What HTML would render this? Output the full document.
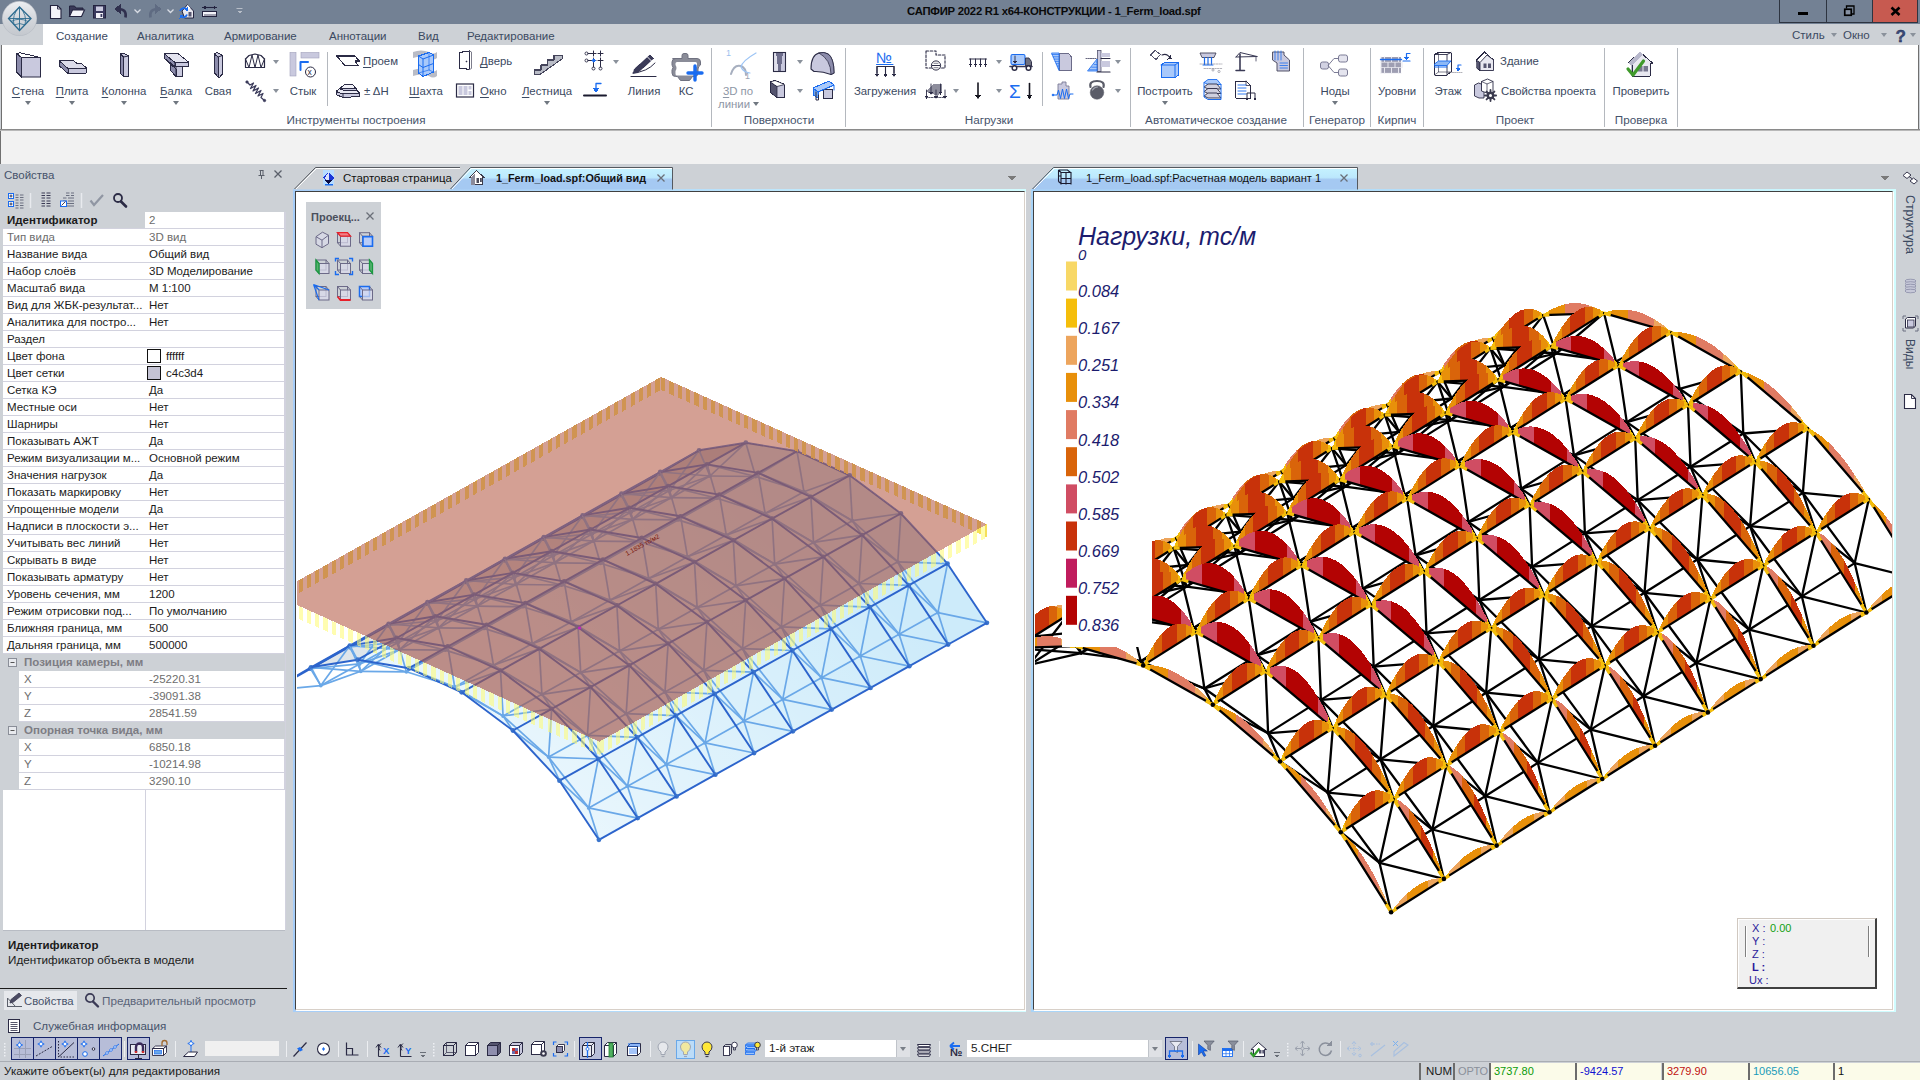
<!DOCTYPE html>
<html lang="ru"><head><meta charset="utf-8"><title>САПФИР 2022 R1 x64-КОНСТРУКЦИИ - 1_Ferm_load.spf</title>
<style>
*{box-sizing:border-box;margin:0;padding:0}
html,body{width:1920px;height:1080px;overflow:hidden}
body{background:#cdd1d6;font-family:"Liberation Sans","DejaVu Sans",sans-serif;font-size:11.7px;color:#1b1b1b;position:relative}
.abs{position:absolute}
.t{position:absolute;white-space:nowrap;line-height:14px}
.c{transform:translateX(-50%)}
#title{left:0;top:0;width:1920px;height:24px;background:#738194}
#title .cap{left:907px;top:4px;font-weight:bold;font-size:11.3px;color:#0a0a0a;letter-spacing:-0.24px}
.wb{position:absolute;top:0;height:23px;border:1px solid #2d3440;border-top:none}
#tabs{left:0;top:24px;width:1920px;height:21px;background:#cdd1d6}
.tab{position:absolute;top:4px;font-size:11.5px;color:#3b4961;white-space:nowrap;line-height:16px}
#tabact{left:43px;top:24px;width:77px;height:22px;background:#fff}
#ribbon{left:1px;top:45px;width:1918px;height:84px;background:#fff;border-left:1.5px solid #707070;border-right:1.5px solid #707070}
#ribline{left:0;top:129px;width:1920px;height:2px;background:#8a8a8a;border-bottom:1px solid #b8b8b8}
#strip{left:0;top:131px;width:1920px;height:33px;background:#f2f2f2;border-left:1px solid #707070}
.gl{position:absolute;top:113px;font-size:11.7px;color:#46536b;white-space:nowrap;transform:translateX(-50%);line-height:14px}
.gs{position:absolute;top:48px;width:1px;height:79px;background:#b4b8be}
.gs2{position:absolute;top:52px;width:1px;height:54px;background:#b4b8be}
.rl{position:absolute;font-size:11.4px;color:#3b4961;white-space:nowrap;line-height:14px}
.rl u{text-decoration-thickness:1px;text-underline-offset:1.5px}
.dis{color:#8e97a6}
.arr{position:absolute;width:0;height:0;border-left:3.5px solid transparent;border-right:3.5px solid transparent;border-top:4px solid #707780}
svg{position:absolute;overflow:visible}
</style>
</head><body>
<div id="title" class="abs"><div class="t cap">САПФИР 2022 R1 x64-КОНСТРУКЦИИ - 1_Ferm_load.spf</div>
<div class="wb" style="left:1779px;width:48px"></div><div class="wb" style="left:1826px;width:47px"></div><div class="wb" style="left:1872px;width:46px;background:#c75a50"></div>
</div>
<div id="tabs" class="abs"></div><div id="tabact" class="abs"></div>
<div class="tab" style="left:56px;top:28px">Создание</div>
<div class="tab" style="left:137px;top:28px">Аналитика</div>
<div class="tab" style="left:224px;top:28px">Армирование</div>
<div class="tab" style="left:329px;top:28px">Аннотации</div>
<div class="tab" style="left:418px;top:28px">Вид</div>
<div class="tab" style="left:467px;top:28px">Редактирование</div>
<div class="tab" style="left:1792px;top:27px">Стиль</div><div class="arr" style="left:1831px;top:33px;border-top-color:#8a919b"></div>
<div class="tab" style="left:1843px;top:27px">Окно</div><div class="arr" style="left:1881px;top:33px;border-top-color:#8a919b"></div>
<div class="arr" style="left:1910px;top:33px;border-top-color:#8a919b"></div>
<div id="ribbon" class="abs"></div><div id="ribline" class="abs"></div><div id="strip" class="abs"></div>
<div class="gl" style="left:356px">Инструменты построения</div>
<div class="gl" style="left:779px">Поверхности</div>
<div class="gl" style="left:989px">Нагрузки</div>
<div class="gl" style="left:1216px">Автоматическое создание</div>
<div class="gl" style="left:1337px">Генератор</div>
<div class="gl" style="left:1397px">Кирпич</div>
<div class="gl" style="left:1515px">Проект</div>
<div class="gl" style="left:1641px">Проверка</div>
<div class="gs" style="left:711px"></div>
<div class="gs" style="left:845px"></div>
<div class="gs" style="left:1130px"></div>
<div class="gs" style="left:1303px"></div>
<div class="gs" style="left:1370px"></div>
<div class="gs" style="left:1423px"></div>
<div class="gs" style="left:1604px"></div>
<div class="gs" style="left:1677px"></div>
<div class="gs2" style="left:327px"></div>
<div class="gs2" style="left:1042px"></div>
<div class="rl c" style="left:28px;top:84px"><u>С</u>тена</div>
<div class="arr" style="left:24.5px;top:101px"></div>
<div class="rl c" style="left:72px;top:84px"><u>П</u>лита</div>
<div class="arr" style="left:68.5px;top:101px"></div>
<div class="rl c" style="left:124px;top:84px"><u>К</u>олонна</div>
<div class="arr" style="left:120.5px;top:101px"></div>
<div class="rl c" style="left:176px;top:84px"><u>Б</u>алка</div>
<div class="arr" style="left:172.5px;top:101px"></div>
<div class="rl c" style="left:218px;top:84px">Свая</div>
<div class="rl c" style="left:303px;top:84px">Стык</div>
<div class="rl c" style="left:426px;top:84px"><u>Ш</u>ахта</div>
<div class="rl c" style="left:547px;top:84px"><u>Л</u>естница</div>
<div class="arr" style="left:543.5px;top:101px"></div>
<div class="rl c" style="left:644px;top:84px">Линия</div>
<div class="rl c" style="left:686px;top:84px">КС</div>
<div class="rl c" style="left:885px;top:84px">Загружения</div>
<div class="rl c" style="left:1165px;top:84px">Построить</div>
<div class="arr" style="left:1161.5px;top:101px"></div>
<div class="rl c" style="left:1335px;top:84px">Ноды</div>
<div class="arr" style="left:1331.5px;top:101px"></div>
<div class="rl c" style="left:1397px;top:84px">Уровни</div>
<div class="rl c" style="left:1448px;top:84px">Этаж</div>
<div class="rl c" style="left:1641px;top:84px">Проверить</div>
<div class="rl c dis" style="left:738px;top:84px"><u>3</u>D по</div><div class="rl dis" style="left:718px;top:97px">линии</div><div class="arr" style="left:753px;top:102px"></div>
<div class="rl" style="left:363px;top:54px"><u>П</u>роем</div>
<div class="rl" style="left:364px;top:84px">± ΔH</div>
<div class="rl" style="left:480px;top:54px"><u>Д</u>верь</div>
<div class="rl" style="left:480px;top:84px"><u>О</u>кно</div>
<div class="rl" style="left:1500px;top:54px">Здание</div>
<div class="rl" style="left:1501px;top:84px">Свойства проекта</div>
<div class="arr" style="left:272.5px;top:60px;border-top-color:#8a919b"></div>
<div class="arr" style="left:272.5px;top:89px;border-top-color:#8a919b"></div>
<div class="arr" style="left:612.5px;top:60px;border-top-color:#8a919b"></div>
<div class="arr" style="left:796.5px;top:60px;border-top-color:#8a919b"></div>
<div class="arr" style="left:796.5px;top:89px;border-top-color:#8a919b"></div>
<div class="arr" style="left:995.5px;top:60px;border-top-color:#8a919b"></div>
<div class="arr" style="left:952.5px;top:89px;border-top-color:#8a919b"></div>
<div class="arr" style="left:995.5px;top:89px;border-top-color:#8a919b"></div>
<div class="arr" style="left:1114.5px;top:60px;border-top-color:#8a919b"></div>
<div class="arr" style="left:1114.5px;top:89px;border-top-color:#8a919b"></div><svg class="abs" style="left:0;top:0" width="1920" height="46" viewBox="0 0 1920 46"><defs><linearGradient id="ab" x1="0" y1="0" x2="0" y2="1"><stop offset="0" stop-color="#eceef1"/><stop offset="0.5" stop-color="#d4d7dc"/><stop offset="1" stop-color="#c4c8ce"/></linearGradient></defs><circle cx="19.5" cy="18.5" r="17.5" fill="#b9bec6"/><circle cx="19.500" cy="18.500" r="16.800" fill="url(#ab)"/><path d="M19.500,7L31,18.500L19.500,30.500L8.500,18.500z" fill="none" stroke="#2c6b8f" stroke-width="1.300"/><path d="M19.500,7v23.500M8.500,18.500h22.500" stroke="#2c6b8f" stroke-width="0.900"/><path d="M19.500,7q-8,8 -5.500,18M19.500,7q8,8 5.500,18M11,21.500q8.500,-4.500 17,0M14,25q5.500,-3 11,0" fill="none" stroke="#2c6b8f" stroke-width="0.800"/><path d="M50.500,5.500h7l3.500,3.500v9.500h-10.500z" fill="#f4f4fa" stroke="#23233f" stroke-width="1.100"/><path d="M57.500,5.500v3.500h3.500" fill="none" stroke="#23233f" stroke-width="0.900"/><path d="M69.500,16.500v-10.500h5l1.500,2h7v2.500" fill="#3a3a58" stroke="#23233f" stroke-width="1"/><path d="M69.500,16.500l3,-6.500h12l-3,6.500z" fill="#f4f4fa" stroke="#23233f" stroke-width="1.100"/><rect x="93.500" y="5.500" width="12" height="12.500" fill="#3a3a5e" stroke="#23233f" stroke-width="1"/><rect x="96" y="6.500" width="7" height="4.500" fill="#c9c9de"/><rect x="96" y="13" width="7" height="5" fill="#f4f4fa"/><rect x="100.500" y="14" width="1.800" height="3" fill="#3a3a5e"/><path d="M125.500,17.500q1.500,-8.500 -7,-8.500" fill="none" stroke="#30304e" stroke-width="2.600"/><polygon points="114,9 120.500,4 120.500,14" fill="#30304e"/><path d="M134.500,9.500l3,3l3,-3" fill="none" stroke="#d8dce4" stroke-width="1.300"/><path d="M150.500,17.500q-1.500,-8.500 7,-8.500" fill="none" stroke="#5f6b82" stroke-width="2.600"/><polygon points="161.500,9 155,4 155,14" fill="#5f6b82"/><path d="M167.500,9.500l3,3l3,-3" fill="none" stroke="#d8dce4" stroke-width="1.300"/><path d="M182,11l5.500,-6.500l6,6.500v7h-9z" fill="#e8e8f0" stroke="#23233f" stroke-width="1"/><path d="M187.500,4.500l3,3.500l-3,2z" fill="#fff"/><rect x="188.500" y="12" width="3" height="4.500" fill="#55556f"/><path d="M180,11a3.800,3.800 0 0 1 6.500,-1.500M187,14.500a3.800,3.800 0 0 1 -6.500,1.500" fill="none" stroke="#1a6cf0" stroke-width="1.800"/><polygon points="187.500,7 187.500,11 184,10" fill="#1a6cf0"/><polygon points="179.500,18.500 179.500,14.500 183,15.500" fill="#1a6cf0"/><rect x="202.500" y="11.500" width="14" height="5" fill="#f4f4fa" stroke="#23233f" stroke-width="1"/><path d="M205,14v2.500" stroke="#23233f" stroke-width="0.800"/><path d="M207,14v2.500" stroke="#23233f" stroke-width="0.800"/><path d="M209,14v2.500" stroke="#23233f" stroke-width="0.800"/><path d="M211,14v2.500" stroke="#23233f" stroke-width="0.800"/><path d="M213,14v2.500" stroke="#23233f" stroke-width="0.800"/><path d="M215,14v2.500" stroke="#23233f" stroke-width="0.800"/><path d="M203,7.500h13" stroke="#23233f" stroke-width="1.100"/><polygon points="202,7.500 205.500,5.500 205.500,9.500" fill="#23233f"/><polygon points="217,7.500 213.500,5.500 213.500,9.500" fill="#23233f"/><path d="M236.500,8.500h6" stroke="#b8bec8" stroke-width="1"/><polygon points="236.500,10.500 242.500,10.500 239.500,13.500" fill="#b8bec8"/><rect x="1798" y="12" width="10" height="3" fill="#000"/><path d="M1846.500,8.500v-2.500h7.500v8h-2" fill="none" stroke="#000" stroke-width="1.300"/><rect x="1844.750" y="9.250" width="6.500" height="6" fill="#8792a4" stroke="#000" stroke-width="1.700"/><path d="M1891.500,7.500l8,7.500M1899.500,7.500l-8,7.500" stroke="#000" stroke-width="2.600"/><text x="1895.500" y="41.500" font-size="17" font-weight="bold" fill="#3a4a78" stroke="#1e2a50" stroke-width="0.400" font-family="Liberation Sans,sans-serif">?</text></svg>
<svg class="abs" style="left:0;top:0" width="1920" height="135" viewBox="0 0 1920 135"><polygon points="16.5,53.5 21.5,57.5 21.5,77 16.5,72" fill="#8c8cab" stroke="#2b2b45" stroke-width="1" stroke-linejoin="round" /><polygon points="16.5,53.5 20,52.8 40.5,57.5 21.5,57.5" fill="#ffffff" stroke="#2b2b45" stroke-width="1" stroke-linejoin="round" /><rect x="21.5" y="57.5" width="19" height="19.5" fill="#c9c9de" stroke="#2b2b45" stroke-width="1" /><polygon points="59.5,61 73,60 77,63.5 81,63 86.5,68 86.5,73 68,73.5 59.5,66" fill="#c9c9de" stroke="#2b2b45" stroke-width="1" stroke-linejoin="round" /><polygon points="59.5,61 73,60 77,63.5 81,63 86.5,68 68,68.5" fill="#dcdcea" stroke="#2b2b45" stroke-width="1" stroke-linejoin="round" /><polyline points="68,68.5 68,73.5" fill="none" stroke="#2b2b45" stroke-width="1" stroke-linejoin="round" stroke-linecap="round" /><polygon points="59.5,61 68,68.5 68,73.5 59.5,66" fill="#8c8cab" stroke="#2b2b45" stroke-width="1" stroke-linejoin="round" /><polygon points="120.5,54 123,53 128.5,56 128.5,76.5 123.5,76.5 120.5,73.5" fill="#c9c9de" stroke="#2b2b45" stroke-width="1" stroke-linejoin="round" /><polygon points="120.5,54 123.5,57 123.5,76.5 120.5,73.5" fill="#8c8cab" stroke="#2b2b45" stroke-width="1" stroke-linejoin="round" /><polyline points="123.5,57 128.5,56" fill="none" stroke="#2b2b45" stroke-width="1" stroke-linejoin="round" stroke-linecap="round" /><polygon points="164.5,54 178,53.5 188.5,62 188.5,66.5 182,66.5 182,76.5 176,76.5 170,70 170,64 164.5,58.5" fill="#c9c9de" stroke="#2b2b45" stroke-width="1" stroke-linejoin="round" /><polygon points="164.5,54 178,53.5 188.5,62 175,62.5" fill="#e4e4f0" stroke="#2b2b45" stroke-width="1" stroke-linejoin="round" /><polygon points="164.5,54 175,62.5 175,66.5 164.5,58.5" fill="#8c8cab" stroke="#2b2b45" stroke-width="1" stroke-linejoin="round" /><polygon points="170,64 176,68.5 176,76.5 170,70" fill="#8c8cab" stroke="#2b2b45" stroke-width="1" stroke-linejoin="round" /><polyline points="175,62.5 175,66.5 188.5,66.5" fill="none" stroke="#2b2b45" stroke-width="1" stroke-linejoin="round" stroke-linecap="round" /><polyline points="176,66.5 176,76.5" fill="none" stroke="#2b2b45" stroke-width="1" stroke-linejoin="round" stroke-linecap="round" /><polygon points="214.5,54 217,52.5 222.5,55.5 222.5,74 219,78 214.5,73" fill="#c9c9de" stroke="#2b2b45" stroke-width="1" stroke-linejoin="round" /><polygon points="214.5,54 218,57 218,75 219,78 214.5,73" fill="#8c8cab" stroke="#2b2b45" stroke-width="1" stroke-linejoin="round" /><polyline points="218,57 222.5,55.5" fill="none" stroke="#2b2b45" stroke-width="1" stroke-linejoin="round" stroke-linecap="round" /><polyline points="245.5,67.5 245.5,59 249,55.5 255,54 261,55.5 264.5,59 264.5,67.5 245.5,67.5" fill="none" stroke="#2b2b45" stroke-width="1.2" stroke-linejoin="round" stroke-linecap="round" /><polyline points="245.5,59 249,67.5 252,55 255,67.5 258,55 261,67.5 264.5,59" fill="none" stroke="#2b2b45" stroke-width="1" stroke-linejoin="round" stroke-linecap="round" /><polyline points="247,82 250,85 253.5,83 250.5,88.5 256,85.5 253,91 258.5,88 255.5,93.5 261,90.5 258,96 263,93.5 261,97.5 264.5,100.5" fill="none" stroke="#3a3a5a" stroke-width="1.25" stroke-linejoin="round" stroke-linecap="round" /><circle cx="247" cy="82" r="1.3" fill="#3a3a5a" stroke="#3a3a5a" stroke-width="0.5"/><circle cx="264.5" cy="100.5" r="1.3" fill="#3a3a5a" stroke="#3a3a5a" stroke-width="0.5"/><rect x="290" y="52.5" width="6" height="23.5" fill="#c9c9de" stroke="#a0a0bb" stroke-width="0.6" /><rect x="301" y="52.5" width="18" height="5.5" fill="#c9c9de" stroke="#a0a0bb" stroke-width="0.6" /><polyline points="300.5,70 300.5,62 308,62" fill="none" stroke="#1a6cf0" stroke-width="2" stroke-linejoin="round" stroke-linecap="round" stroke-linecap="butt"/><circle cx="310.5" cy="72" r="5" fill="#ffffff" stroke="#2b2b45" stroke-width="1"/><text x="307.6" y="75" font-size="8.5" fill="#2b2b45" font-family="Liberation Sans,sans-serif" >x</text><polygon points="336.5,56 355,56 359.5,61 355,61 358,65.5 345,65.5" fill="#ffffff" stroke="#2b2b45" stroke-width="1.2" stroke-linejoin="round" /><polygon points="336,91.5 342,87 353.5,87 359.5,93 359.5,96.5 343,97.5 336,94.5" fill="#c9c9de" stroke="#2b2b45" stroke-width="1" stroke-linejoin="round" /><polygon points="336,91.5 342,87 353.5,87 359.5,93 343,94" fill="#e8e8f2" stroke="#2b2b45" stroke-width="1" stroke-linejoin="round" /><polyline points="343,94 343,97.5" fill="none" stroke="#2b2b45" stroke-width="1" stroke-linejoin="round" stroke-linecap="round" /><polygon points="340.5,88 345,84 352,84 356,88.5 356,90 345.5,90.5 340.5,89.5" fill="#c9c9de" stroke="#2b2b45" stroke-width="1" stroke-linejoin="round" /><polygon points="340.5,88 345,84 352,84 356,88.5 345.5,89" fill="#f2f2f8" stroke="#2b2b45" stroke-width="1" stroke-linejoin="round" /><path d="M413,52 q8,-3 16,0 q4,3 8,0 v6 q-4,3 -8,0 q-8,-3 -16,0z" fill="#b9bcc6" stroke="none" stroke-width="0" stroke-linejoin="round" stroke-linecap="round" /><path d="M413,70 q8,-3 16,0 q4,3 8,0 v6 q-4,3 -8,0 q-8,-3 -16,0z" fill="#b9bcc6" stroke="none" stroke-width="0" stroke-linejoin="round" stroke-linecap="round" /><polygon points="418.5,56 429,52.5 433.5,55 433.5,72 423,76.5 418.5,73" fill="#a9c9fa" stroke="#1a6cf0" stroke-width="1" stroke-linejoin="round" /><polyline points="418.5,56 423,59 433.5,55" fill="none" stroke="#1a6cf0" stroke-width="1" stroke-linejoin="round" stroke-linecap="round" /><polyline points="423,59 423,76.5" fill="none" stroke="#1a6cf0" stroke-width="1" stroke-linejoin="round" stroke-linecap="round" /><polyline points="418.5,64.5 423,67.5 433.5,63.5" fill="none" stroke="#1a6cf0" stroke-width="1" stroke-linejoin="round" stroke-linecap="round" /><polyline points="429,52.5 429,70 433.5,72" fill="none" stroke="#1a6cf0" stroke-width="0.7" stroke-linejoin="round" stroke-linecap="round" /><polyline points="429,70 418.5,73" fill="none" stroke="#1a6cf0" stroke-width="0.7" stroke-linejoin="round" stroke-linecap="round" /><polygon points="459.5,52.5 469.5,51 469.5,69.5 459.5,68" fill="#ffffff" stroke="#2b2b45" stroke-width="1.1" stroke-linejoin="round" /><polyline points="469.5,51 471.5,52 471.5,68.5 469.5,69.5" fill="none" stroke="#7d7d8c" stroke-width="1" stroke-linejoin="round" stroke-linecap="round" /><circle cx="466.5" cy="61.5" r="0.6" fill="#2b2b45" stroke="#2b2b45" stroke-width="0.5"/><rect x="456.5" y="84" width="17" height="13" fill="#ffffff" stroke="#2b2b45" stroke-width="1.2" /><rect x="458.5" y="86" width="4" height="9" fill="#c9c9de" stroke="none" stroke-width="0" /><rect x="463.5" y="86" width="4" height="9" fill="#c9c9de" stroke="none" stroke-width="0" /><rect x="468.5" y="86" width="3" height="3.5" fill="#c9c9de" stroke="none" stroke-width="0" /><rect x="468.5" y="91" width="3" height="4" fill="#c9c9de" stroke="none" stroke-width="0" /><polygon points="534.5,74.5 534.5,70 541,70 541,65 547.5,65 547.5,60 554,60 554,55.5 562.5,55.5 562.5,58.5 540,74.5" fill="#b9bcc6" stroke="#44445a" stroke-width="1.1" stroke-linejoin="round" /><line x1="591.0" y1="53.5" x2="596.0" y2="53.5" stroke="#2b2b45" stroke-width="1" stroke-linecap="round" /><line x1="593.5" y1="51.0" x2="593.5" y2="56.0" stroke="#2b2b45" stroke-width="1" stroke-linecap="round" /><line x1="591.0" y1="60.5" x2="596.0" y2="60.5" stroke="#2b2b45" stroke-width="1" stroke-linecap="round" /><line x1="593.5" y1="58.0" x2="593.5" y2="63.0" stroke="#2b2b45" stroke-width="1" stroke-linecap="round" /><line x1="598.0" y1="53.5" x2="603.0" y2="53.5" stroke="#2b2b45" stroke-width="1" stroke-linecap="round" /><line x1="600.5" y1="51.0" x2="600.5" y2="56.0" stroke="#2b2b45" stroke-width="1" stroke-linecap="round" /><line x1="598.0" y1="60.5" x2="603.0" y2="60.5" stroke="#2b2b45" stroke-width="1" stroke-linecap="round" /><line x1="600.5" y1="58.0" x2="600.5" y2="63.0" stroke="#2b2b45" stroke-width="1" stroke-linecap="round" /><circle cx="586.5" cy="53.5" r="1.5" fill="#ffffff" stroke="#2b2b45" stroke-width="0.9"/><circle cx="586.5" cy="60.5" r="1.5" fill="#ffffff" stroke="#2b2b45" stroke-width="0.9"/><circle cx="593.5" cy="68.5" r="1.5" fill="#ffffff" stroke="#2b2b45" stroke-width="0.9"/><circle cx="600.5" cy="68.5" r="1.5" fill="#ffffff" stroke="#2b2b45" stroke-width="0.9"/><line x1="593.5" y1="63" x2="593.5" y2="67" stroke="#2b2b45" stroke-width="1" stroke-linecap="round" /><line x1="600.5" y1="63" x2="600.5" y2="67" stroke="#2b2b45" stroke-width="1" stroke-linecap="round" /><line x1="588" y1="53.5" x2="591" y2="53.5" stroke="#2b2b45" stroke-width="1" stroke-linecap="round" /><line x1="588" y1="60.5" x2="591" y2="60.5" stroke="#2b2b45" stroke-width="1" stroke-linecap="round" /><polygon points="593.5,58.5 595.5,60.5 593.5,62.5 591.5,60.5" fill="#1a6cf0" stroke="#1a6cf0" stroke-width="0.5" stroke-linejoin="round" /><line x1="584" y1="95.5" x2="606" y2="95.5" stroke="#1a1a2e" stroke-width="2" stroke-linecap="round" /><polyline points="601,83.5 596,83.5 596,91" fill="none" stroke="#1a6cf0" stroke-width="1.3" stroke-linejoin="round" stroke-linecap="round" /><polygon points="592.5,88 599.5,88 596,93" fill="#1a6cf0"/><line x1="631" y1="76.5" x2="656" y2="76.5" stroke="#2b2b45" stroke-width="1.2" stroke-linecap="round" /><path d="M633,73 q14,-1 22,-10" fill="none" stroke="#2b2b45" stroke-width="1" stroke-linejoin="round" stroke-linecap="round" /><polygon points="634.5,69 650,55 653.5,58.5 638,72.5 633,73.5" fill="#3a3a58" stroke="#3a3a58" stroke-width="0.8" stroke-linejoin="round" /><line x1="647.5" y1="57" x2="651.5" y2="61" stroke="#ffffff" stroke-width="0.9" stroke-linecap="round" /><path d="M673,58.5 h9 v-3 q0,-2 2,-2 h2 q2,0 2,2 v3 h9 q3.5,0 3.5,3.5 v3 q-2.5,1.5 -2.5,4 v4 q0,3.5 -3.5,3.5 h-2 l-3,4 h-9 l-3,-4 h-2 q-3.5,0 -3.5,-3.5 v-3 q2,-2.5 0,-5 v-3 q0,-3.5 3.5,-3.5z" fill="#8a8c98" stroke="#6f7180" stroke-width="1" stroke-linejoin="round" stroke-linecap="round" /><path d="M675.5,62 h20 q1.5,0 1.5,1.5 v3 q-2.5,2 -2.5,4.5 v3 q0,1.5 -1.5,1.5 h-16 q-1.500,0 -1.5,-1.5 v-3 q2,-3 0,-6 v-1.5 q0,-1.500 1.500,-1.5z" fill="#ffffff" stroke="none" stroke-width="0" stroke-linejoin="round" stroke-linecap="round" /><line x1="688" y1="73" x2="702" y2="73" stroke="#1a6cf0" stroke-width="3.4" stroke-linecap="round" stroke-linecap="butt"/><line x1="695" y1="66" x2="695" y2="80" stroke="#1a6cf0" stroke-width="3.4" stroke-linecap="round" stroke-linecap="butt"/><text x="726" y="56" font-size="9" fill="#9cc0ee" font-family="Liberation Sans,sans-serif" >1</text><text x="745" y="79" font-size="9" fill="#9aa4b5" font-family="Liberation Sans,sans-serif" >1</text><path d="M731,74 q3,-10 10,-8 q5,2 5,9" fill="none" stroke="#a7afbf" stroke-width="2" stroke-linejoin="round" stroke-linecap="round" /><path d="M756,53 q-14,8 -15,14 q2,5 9,6" fill="none" stroke="#9cc4f5" stroke-width="1.2" stroke-linejoin="round" stroke-linecap="round" /><polygon points="773.5,52.5 785.5,52.5 785.5,71.5 773.5,71.5" fill="#c9c9de" stroke="#2b2b45" stroke-width="1.1" stroke-linejoin="round" /><polygon points="776,52.5 783,52.5 780.5,71.5 778.5,71.5" fill="#6e6e8c" stroke="none" stroke-width="0" stroke-linejoin="round" /><polygon points="773.5,52.5 776,52.5 778.5,71.5 773.5,71.5" fill="#e0e0ec" stroke="none" stroke-width="0" stroke-linejoin="round" /><rect x="773.5" y="52.5" width="12" height="19" fill="none" stroke="#2b2b45" stroke-width="1.1" /><path d="M811,69 q0,-14 8,-16 q5,-1.500 9,1 q6,4 6,19 l-3,1.5 q-9,-3.500 -17,-3z" fill="#c9c9de" stroke="#2b2b45" stroke-width="1.1" stroke-linejoin="round" stroke-linecap="round" /><path d="M819,53 q5,-1.500 9,1 q6,4 6,19 l-3,1.5 q0,-15 -12,-21.5z" fill="#8c8cab" stroke="#2b2b45" stroke-width="0.8" stroke-linejoin="round" stroke-linecap="round" /><polygon points="770.5,82 775,80.5 784.5,84.5 784.5,97.5 777,97.5 770.5,92.5" fill="#c9c9de" stroke="#2b2b45" stroke-width="1.1" stroke-linejoin="round" /><polygon points="770.5,82 777,86.5 777,97.5 770.5,92.5" fill="#55556f" stroke="#2b2b45" stroke-width="0.8" stroke-linejoin="round" /><polygon points="770.5,82 775,80.5 784.5,84.5 777,86.5" fill="#ffffff" stroke="#2b2b45" stroke-width="0.8" stroke-linejoin="round" /><polygon points="813,88 829,81 834,85 818,92" fill="#a9c9fa" stroke="#1a6cf0" stroke-width="1" stroke-linejoin="round" /><polygon points="813,88 818,92 818,98 813,95" fill="#6fa5f0" stroke="#1a6cf0" stroke-width="1" stroke-linejoin="round" /><rect x="823.5" y="89.5" width="9" height="9" fill="#c9c9de" stroke="#2b2b45" stroke-width="1" /><polyline points="816,92 816,100 818.5,100 818.5,95" fill="none" stroke="#2b2b45" stroke-width="1" stroke-linejoin="round" stroke-linecap="round" /><polyline points="818,92 834,85 834,90" fill="none" stroke="#1a6cf0" stroke-width="1" stroke-linejoin="round" stroke-linecap="round" /><text x="876" y="62.5" font-size="15" fill="#1a6cf0" font-family="Liberation Sans,sans-serif" font-weight="normal">№</text><line x1="876.5" y1="64.5" x2="893" y2="64.5" stroke="#1a6cf0" stroke-width="1" stroke-linecap="round" /><polyline points="877,73 877,66.5 894,66.5 894,73" fill="none" stroke="#2b2b45" stroke-width="1.1" stroke-linejoin="round" stroke-linecap="round" /><line x1="877" y1="66.5" x2="877" y2="76" stroke="#2b2b45" stroke-width="1.1" stroke-linecap="round" /><polygon points="874.7,73.7 879.3,73.7 877,77" fill="#2b2b45"/><line x1="885.5" y1="66.5" x2="885.5" y2="76" stroke="#2b2b45" stroke-width="1.1" stroke-linecap="round" /><polygon points="883.2,73.7 887.8,73.7 885.5,77" fill="#2b2b45"/><line x1="894" y1="66.5" x2="894" y2="76" stroke="#2b2b45" stroke-width="1.1" stroke-linecap="round" /><polygon points="891.7,73.7 896.3,73.7 894,77" fill="#2b2b45"/><path d="M926,51 h10 v4 h9 v13 h-19z" fill="none" stroke="#2b2b45" stroke-width="1.1" stroke-linejoin="round" stroke-linecap="round" stroke-dasharray="2.5,1.6"/><circle cx="936" cy="65.5" r="4.6" fill="#ffffff" stroke="#2b2b45" stroke-width="1"/><line x1="932" y1="65.5" x2="940" y2="65.5" stroke="#2b2b45" stroke-width="1" stroke-linecap="round" /><line x1="934" y1="63.3" x2="938" y2="63.3" stroke="#2b2b45" stroke-width="0.6" stroke-linecap="round" /><line x1="934" y1="67.7" x2="938" y2="67.7" stroke="#2b2b45" stroke-width="0.6" stroke-linecap="round" /><line x1="969.5" y1="59" x2="986.5" y2="59" stroke="#2b2b45" stroke-width="1.2" stroke-linecap="round" /><line x1="970.5" y1="59" x2="970.5" y2="66" stroke="#2b2b45" stroke-width="1" stroke-linecap="round" /><polygon points="968.7,64.2 972.3,64.2 970.5,67" fill="#2b2b45"/><line x1="975.5" y1="59" x2="975.5" y2="66" stroke="#2b2b45" stroke-width="1" stroke-linecap="round" /><polygon points="973.7,64.2 977.3,64.2 975.5,67" fill="#2b2b45"/><line x1="980.5" y1="59" x2="980.5" y2="66" stroke="#2b2b45" stroke-width="1" stroke-linecap="round" /><polygon points="978.7,64.2 982.3,64.2 980.5,67" fill="#2b2b45"/><line x1="985.5" y1="59" x2="985.5" y2="66" stroke="#2b2b45" stroke-width="1" stroke-linecap="round" /><polygon points="983.7,64.2 987.3,64.2 985.5,67" fill="#2b2b45"/><rect x="1011" y="54.5" width="14" height="10" fill="#a9c9fa" stroke="#1a6cf0" stroke-width="1.1" rx="1.5"/><polygon points="1025.5,58 1029,58 1031.5,61.5 1031.5,66 1025.5,66" fill="#6e7080" stroke="#2b2b45" stroke-width="0.9" stroke-linejoin="round" /><line x1="1010" y1="66.5" x2="1032" y2="66.5" stroke="#3a3a55" stroke-width="1.6" stroke-linecap="round" /><circle cx="1014.5" cy="68" r="2.3" fill="#ffffff" stroke="#2b2b45" stroke-width="1.5"/><circle cx="1028.5" cy="68" r="2.3" fill="#ffffff" stroke="#2b2b45" stroke-width="1.5"/><line x1="1015" y1="56" x2="1015" y2="63" stroke="#2b2b45" stroke-width="0.9" stroke-linecap="round" /><polygon points="1013.4,61.4 1016.6,61.4 1015,64" fill="#2b2b45"/><polygon points="926,92 934,83.5 942,83.5 942,91 938,96" fill="#8d8d9c" stroke="none" stroke-width="0" stroke-linejoin="round" /><line x1="926.5" y1="90" x2="926.5" y2="98" stroke="#2b2b45" stroke-width="0.9" stroke-linecap="round" /><polygon points="924.8,96.3 928.2,96.3 926.5,99" fill="#2b2b45"/><line x1="931" y1="84" x2="931" y2="94" stroke="#2b2b45" stroke-width="0.9" stroke-linecap="round" /><polygon points="929.3,92.3 932.7,92.3 931,95" fill="#2b2b45"/><line x1="936" y1="90" x2="936" y2="98" stroke="#2b2b45" stroke-width="0.9" stroke-linecap="round" /><polygon points="934.3,96.3 937.7,96.3 936,99" fill="#2b2b45"/><line x1="940.5" y1="84" x2="940.5" y2="94" stroke="#2b2b45" stroke-width="0.9" stroke-linecap="round" /><polygon points="938.8,92.3 942.2,92.3 940.5,95" fill="#2b2b45"/><line x1="945" y1="90" x2="945" y2="98" stroke="#2b2b45" stroke-width="0.9" stroke-linecap="round" /><polygon points="943.3,96.3 946.7,96.3 945,99" fill="#2b2b45"/><line x1="926" y1="97.5" x2="945" y2="97.5" stroke="#2b2b45" stroke-width="0.8" stroke-linecap="round" stroke-dasharray="1.5,1.2"/><line x1="978" y1="83" x2="978" y2="98" stroke="#15151f" stroke-width="1.6" stroke-linecap="round" /><polygon points="975.4,95.4 980.6,95.4 978,99" fill="#15151f"/><text x="1009" y="98" font-size="19" fill="#1a6cf0" font-family="Liberation Sans,sans-serif" font-family="Liberation Serif,serif">Σ</text><line x1="1029.5" y1="83.5" x2="1029.5" y2="98" stroke="#15151f" stroke-width="1.6" stroke-linecap="round" /><polygon points="1026.9,95.4 1032.1,95.4 1029.5,99" fill="#15151f"/><polygon points="1059,53 1068,53 1071.5,57 1071.5,70.5 1059,70.5" fill="#c9c9de" stroke="#6b6b88" stroke-width="1" stroke-linejoin="round" /><polygon points="1051.5,53 1059,53 1059,70.5" fill="#a9c9fa" stroke="#1a6cf0" stroke-width="0.8" stroke-linejoin="round" /><line x1="1052.0" y1="54.5" x2="1059" y2="54.5" stroke="#1a6cf0" stroke-width="0.7" stroke-linecap="round" /><line x1="1053.05" y1="56.8" x2="1059" y2="56.8" stroke="#1a6cf0" stroke-width="0.7" stroke-linecap="round" /><line x1="1054.1" y1="59.1" x2="1059" y2="59.1" stroke="#1a6cf0" stroke-width="0.7" stroke-linecap="round" /><line x1="1055.15" y1="61.4" x2="1059" y2="61.4" stroke="#1a6cf0" stroke-width="0.7" stroke-linecap="round" /><line x1="1056.2" y1="63.7" x2="1059" y2="63.7" stroke="#1a6cf0" stroke-width="0.7" stroke-linecap="round" /><line x1="1057.25" y1="66.0" x2="1059" y2="66.0" stroke="#1a6cf0" stroke-width="0.7" stroke-linecap="round" /><line x1="1058.3" y1="68.3" x2="1059" y2="68.3" stroke="#1a6cf0" stroke-width="0.7" stroke-linecap="round" /><rect x="1097.5" y="50.5" width="3.5" height="21" fill="#c9c9de" stroke="#55556f" stroke-width="0.8" /><rect x="1101" y="53" width="9" height="4" fill="#c9c9de" stroke="none" stroke-width="0" /><rect x="1101" y="61" width="9" height="6" fill="#c9c9de" stroke="none" stroke-width="0" /><line x1="1097" y1="72" x2="1110" y2="72" stroke="#2b2b45" stroke-width="1.2" stroke-linecap="round" /><line x1="1101" y1="58.5" x2="1110" y2="58.5" stroke="#2b2b45" stroke-width="1" stroke-linecap="round" /><polygon points="1097,59 1097,71 1087.5,71" fill="#a9c9fa" stroke="#1a6cf0" stroke-width="0.8" stroke-linejoin="round" /><line x1="1096.5" y1="62.0" x2="1097" y2="62.0" stroke="#1a6cf0" stroke-width="0.7" stroke-linecap="round" /><line x1="1094.1" y1="64.6" x2="1097" y2="64.6" stroke="#1a6cf0" stroke-width="0.7" stroke-linecap="round" /><line x1="1091.7" y1="67.2" x2="1097" y2="67.2" stroke="#1a6cf0" stroke-width="0.7" stroke-linecap="round" /><line x1="1089.3" y1="69.8" x2="1097" y2="69.8" stroke="#1a6cf0" stroke-width="0.7" stroke-linecap="round" /><line x1="1086" y1="58.5" x2="1097" y2="58.5" stroke="#55556f" stroke-width="0.9" stroke-linecap="round" stroke-dasharray="1.2,1"/><polygon points="1058,84 1062,84 1062,82 1066,82 1066,86 1069,86 1069,99 1058,99" fill="#c9c9de" stroke="#7b7b95" stroke-width="0.9" stroke-linejoin="round" /><polyline points="1053,95 1057,95 1058.5,90 1060.5,98.5 1062.5,89 1064.5,98.5 1066.5,89 1068.5,98.5 1070,94 1073,94" fill="none" stroke="#1a6cf0" stroke-width="1" stroke-linejoin="round" stroke-linecap="round" /><circle cx="1053" cy="95" r="1" fill="#1a6cf0" stroke="#1a6cf0" stroke-width="0.5"/><path d="M1090.5,87 q-1.500,-6 6.5,-6 q8,0 6.5,6" fill="none" stroke="#5a5c68" stroke-width="2.2" stroke-linejoin="round" stroke-linecap="round" /><circle cx="1097" cy="92.5" r="6.8" fill="#5a5c68" stroke="#5a5c68" stroke-width="0.5"/><path d="M1092.5,90 q2,-3 5,-3" fill="none" stroke="#9fa2ad" stroke-width="1.2" stroke-linejoin="round" stroke-linecap="round" /><polygon points="1150.5,55 1155,50.5 1160.5,54.5 1156,59.5" fill="#ffffff" stroke="#55556f" stroke-width="1" stroke-linejoin="round" /><path d="M1162,55 q5,-2 8,3" fill="none" stroke="#2b2b45" stroke-width="1.1" stroke-linejoin="round" stroke-linecap="round" /><polygon points="1167.500,59.5 1172,59 1170.5,55" fill="#2b2b45"/><polygon points="1161,65 1164.5,62.5 1178.5,62.5 1178.5,75 1175,77.5 1161,77.5" fill="#a9c9fa" stroke="#1a6cf0" stroke-width="1" stroke-linejoin="round" /><polyline points="1161,65 1175,65 1178.5,62.5" fill="none" stroke="#1a6cf0" stroke-width="1" stroke-linejoin="round" stroke-linecap="round" /><polyline points="1175,65 1175,77.5" fill="none" stroke="#1a6cf0" stroke-width="1" stroke-linejoin="round" stroke-linecap="round" /><polygon points="1200,53 1216,53 1214,57.5 1202,57.5" fill="#c9c9de" stroke="#44445a" stroke-width="0.9" stroke-linejoin="round" /><line x1="1204.5" y1="57.5" x2="1204.5" y2="64.5" stroke="#1a6cf0" stroke-width="1.2" stroke-linecap="round" /><line x1="1208" y1="57.5" x2="1208" y2="64.5" stroke="#1a6cf0" stroke-width="1.2" stroke-linecap="round" /><line x1="1211.5" y1="57.5" x2="1211.5" y2="64.5" stroke="#1a6cf0" stroke-width="1.2" stroke-linecap="round" /><line x1="1203" y1="65" x2="1213" y2="65" stroke="#1a6cf0" stroke-width="1" stroke-linecap="round" /><line x1="1200" y1="64" x2="1222" y2="64" stroke="#7d7d8c" stroke-width="0.6" stroke-linecap="round" stroke-dasharray="1.5,1.2"/><line x1="1204" y1="68.5" x2="1222" y2="68.5" stroke="#7d7d8c" stroke-width="0.6" stroke-linecap="round" stroke-dasharray="1.5,1.2"/><circle cx="1213" cy="70" r="1.1" fill="#ffffff" stroke="#7d7d8c" stroke-width="0.6"/><circle cx="1219" cy="71.5" r="1.1" fill="#ffffff" stroke="#7d7d8c" stroke-width="0.6"/><line x1="1240" y1="54" x2="1240" y2="70" stroke="#3a3a55" stroke-width="1.6" stroke-linecap="round" /><line x1="1236" y1="70.5" x2="1244.5" y2="70.5" stroke="#3a3a55" stroke-width="1.5" stroke-linecap="round" /><polyline points="1236,57 1240,52.5 1257,56.5" fill="none" stroke="#3a3a55" stroke-width="1" stroke-linejoin="round" stroke-linecap="round" /><line x1="1236" y1="57" x2="1257" y2="56.5" stroke="#3a3a55" stroke-width="1.1" stroke-linecap="round" /><line x1="1256" y1="56.5" x2="1256" y2="61" stroke="#3a3a55" stroke-width="0.8" stroke-linecap="round" /><polygon points="1272.5,52 1284,52 1284,55 1289.5,60 1289.5,71 1277,71 1277,63 1272.5,60" fill="#c9c9de" stroke="#44445a" stroke-width="0.9" stroke-linejoin="round" /><line x1="1275" y1="51" x2="1275" y2="60" stroke="#1a6cf0" stroke-width="0.8" stroke-linecap="round" /><line x1="1278" y1="51" x2="1278" y2="60" stroke="#1a6cf0" stroke-width="0.8" stroke-linecap="round" /><line x1="1281" y1="51" x2="1281" y2="60" stroke="#1a6cf0" stroke-width="0.8" stroke-linecap="round" /><line x1="1280" y1="63" x2="1287.5" y2="63" stroke="#1a6cf0" stroke-width="0.8" stroke-linecap="round" /><line x1="1280" y1="65.5" x2="1287.5" y2="65.5" stroke="#1a6cf0" stroke-width="0.8" stroke-linecap="round" /><line x1="1280" y1="68" x2="1287.5" y2="68" stroke="#1a6cf0" stroke-width="0.8" stroke-linecap="round" /><polygon points="1204,82.5 1208,79.5 1217,79.5 1221,84.5 1208,84.5" fill="#a9c9fa" stroke="#1a6cf0" stroke-width="0.9" stroke-linejoin="round" /><polygon points="1204,87.0 1208,84.0 1217,84.0 1221,89.0 1208,89.0" fill="#d0d0de" stroke="#2b2b45" stroke-width="0.9" stroke-linejoin="round" /><polygon points="1204,91.5 1208,88.5 1217,88.5 1221,93.5 1208,93.5" fill="#d0d0de" stroke="#2b2b45" stroke-width="0.9" stroke-linejoin="round" /><polygon points="1204,96.0 1208,93.0 1217,93.0 1221,98.0 1208,98.0" fill="#d0d0de" stroke="#2b2b45" stroke-width="0.9" stroke-linejoin="round" /><polyline points="1204,82.5 1204,97 1208,99.5 1221,99.5 1221,84.5" fill="none" stroke="#1a6cf0" stroke-width="1" stroke-linejoin="round" stroke-linecap="round" /><polygon points="1235.5,81 1246,81 1250.5,85.5 1250.5,98 1235.5,98" fill="#ffffff" stroke="#2b2b45" stroke-width="1" stroke-linejoin="round" /><polyline points="1246,81 1246,85.5 1250.5,85.5" fill="none" stroke="#2b2b45" stroke-width="0.8" stroke-linejoin="round" stroke-linecap="round" /><line x1="1238" y1="85" x2="1246" y2="85" stroke="#1a6cf0" stroke-width="0.9" stroke-linecap="round" /><line x1="1238" y1="88" x2="1246" y2="88" stroke="#1a6cf0" stroke-width="0.9" stroke-linecap="round" /><line x1="1238" y1="91" x2="1246" y2="91" stroke="#1a6cf0" stroke-width="0.9" stroke-linecap="round" /><line x1="1238" y1="94" x2="1246" y2="94" stroke="#1a6cf0" stroke-width="0.9" stroke-linecap="round" /><polyline points="1247,99 1247,93 1255,93 1255,99" fill="none" stroke="#2b2b45" stroke-width="1" stroke-linejoin="round" stroke-linecap="round" /><polygon points="1245,97.5 1249,97.5 1247,101" fill="#2b2b45"/><polygon points="1253,97.5 1257,97.5 1255,101" fill="#2b2b45"/><rect x="1320.5" y="62" width="8" height="7" fill="#d2d2e2" stroke="#7b7b95" stroke-width="1" rx="2"/><rect x="1338.5" y="55" width="9" height="7" fill="#e4e4ee" stroke="#7b7b95" stroke-width="1" rx="2"/><rect x="1338.5" y="69" width="9" height="7" fill="#e4e4ee" stroke="#7b7b95" stroke-width="1" rx="2"/><polyline points="1338.5,58.5 1334,58.5 1328.5,65" fill="none" stroke="#7b7b95" stroke-width="1" stroke-linejoin="round" stroke-linecap="round" /><polyline points="1338.5,72.5 1334,72.5 1328.5,66" fill="none" stroke="#7b7b95" stroke-width="1" stroke-linejoin="round" stroke-linecap="round" /><rect x="1381" y="57" width="20" height="5" fill="#9e9eb2" stroke="none" stroke-width="0" /><line x1="1381" y1="57" x2="1381" y2="62" stroke="#e8e8f0" stroke-width="1" stroke-linecap="round" /><line x1="1384.5" y1="57" x2="1384.5" y2="62" stroke="#e8e8f0" stroke-width="1" stroke-linecap="round" /><line x1="1391.5" y1="57" x2="1391.5" y2="62" stroke="#e8e8f0" stroke-width="1" stroke-linecap="round" /><line x1="1398.5" y1="57" x2="1398.5" y2="62" stroke="#e8e8f0" stroke-width="1" stroke-linecap="round" /><line x1="1381" y1="62.25" x2="1401" y2="62.25" stroke="#e8e8f0" stroke-width="0.6" stroke-linecap="round" /><rect x="1381" y="62.5" width="20" height="5" fill="#9e9eb2" stroke="none" stroke-width="0" /><line x1="1381.0" y1="62.5" x2="1381.0" y2="67.5" stroke="#e8e8f0" stroke-width="1" stroke-linecap="round" /><line x1="1388.0" y1="62.5" x2="1388.0" y2="67.5" stroke="#e8e8f0" stroke-width="1" stroke-linecap="round" /><line x1="1395.0" y1="62.5" x2="1395.0" y2="67.5" stroke="#e8e8f0" stroke-width="1" stroke-linecap="round" /><line x1="1402.0" y1="62.5" x2="1402.0" y2="67.5" stroke="#e8e8f0" stroke-width="1" stroke-linecap="round" /><line x1="1381" y1="67.75" x2="1401" y2="67.75" stroke="#e8e8f0" stroke-width="0.6" stroke-linecap="round" /><rect x="1381" y="68" width="20" height="5" fill="#9e9eb2" stroke="none" stroke-width="0" /><line x1="1381" y1="68" x2="1381" y2="73" stroke="#e8e8f0" stroke-width="1" stroke-linecap="round" /><line x1="1384.5" y1="68" x2="1384.5" y2="73" stroke="#e8e8f0" stroke-width="1" stroke-linecap="round" /><line x1="1391.5" y1="68" x2="1391.5" y2="73" stroke="#e8e8f0" stroke-width="1" stroke-linecap="round" /><line x1="1398.5" y1="68" x2="1398.5" y2="73" stroke="#e8e8f0" stroke-width="1" stroke-linecap="round" /><line x1="1381" y1="73.25" x2="1401" y2="73.25" stroke="#e8e8f0" stroke-width="0.6" stroke-linecap="round" /><line x1="1380.5" y1="59.5" x2="1401.5" y2="59.5" stroke="#1a6cf0" stroke-width="1.4" stroke-linecap="round" /><polyline points="1410,53.5 1406.5,53.5 1406.5,58" fill="none" stroke="#1a6cf0" stroke-width="1.2" stroke-linejoin="round" stroke-linecap="round" /><polygon points="1403.500,56.5 1409.5,56.5 1406.5,60" fill="#1a6cf0"/><line x1="1403" y1="61" x2="1410" y2="61" stroke="#1a6cf0" stroke-width="1.2" stroke-linecap="round" /><polygon points="1434.5,54.5 1438.5,52.5 1451,52.5 1451,72 1447,75 1434.5,75" fill="#ffffff" stroke="#2b2b45" stroke-width="1" stroke-linejoin="round" /><polyline points="1434.5,54.5 1447,54.5 1451,52.5" fill="none" stroke="#2b2b45" stroke-width="0.9" stroke-linejoin="round" stroke-linecap="round" /><polyline points="1447,54.5 1447,75" fill="none" stroke="#2b2b45" stroke-width="0.9" stroke-linejoin="round" stroke-linecap="round" /><polyline points="1438.5,52.5 1438.5,72 1434.5,75" fill="none" stroke="#2b2b45" stroke-width="0.6" stroke-linejoin="round" stroke-linecap="round" /><polyline points="1438.5,72 1451,72" fill="none" stroke="#2b2b45" stroke-width="0.6" stroke-linejoin="round" stroke-linecap="round" /><polygon points="1434.5,64 1438.5,61 1451,61 1447,65.5 1434.5,65.5" fill="#8db8f5" stroke="#1a6cf0" stroke-width="0.9" stroke-linejoin="round" /><line x1="1434.5" y1="67" x2="1447" y2="67" stroke="#1a6cf0" stroke-width="1" stroke-linecap="round" /><polyline points="1461,65 1458,65 1458,69" fill="none" stroke="#1a6cf0" stroke-width="1.2" stroke-linejoin="round" stroke-linecap="round" /><polygon points="1455,67.5 1461,67.5 1458,71.500" fill="#1a6cf0"/><line x1="1448" y1="72.5" x2="1462" y2="72.5" stroke="#7d7d8c" stroke-width="0.6" stroke-linecap="round" stroke-dasharray="1.2,1"/><polygon points="1476.5,60 1484.5,52 1493.5,60 1493.5,70 1479,70" fill="#ffffff" stroke="#2b2b45" stroke-width="1" stroke-linejoin="round" /><polygon points="1476.5,60 1480,62.5 1480,70.5 1476.5,68" fill="#55556f" stroke="#2b2b45" stroke-width="0.7" stroke-linejoin="round" /><polygon points="1480,62.5 1487,55 1493.5,60 1493.5,70.5 1480,70.5" fill="#e8e8f0" stroke="#2b2b45" stroke-width="0.9" stroke-linejoin="round" /><rect x="1483.5" y="63.5" width="3" height="4.5" fill="#55556f" stroke="none" stroke-width="0" /><rect x="1488" y="63.5" width="3" height="4.5" fill="#55556f" stroke="none" stroke-width="0" /><polygon points="1474.5,85 1478.5,83 1484,85 1484,98 1479,98 1474.5,96" fill="#c9c9de" stroke="#2b2b45" stroke-width="0.9" stroke-linejoin="round" /><polygon points="1481.5,81.5 1487.5,79 1493,81.5 1493,93 1487,93 1481.5,91" fill="#ffffff" stroke="#2b2b45" stroke-width="0.9" stroke-linejoin="round" /><polyline points="1481.5,81.5 1487,84 1493,81.5" fill="none" stroke="#2b2b45" stroke-width="0.7" stroke-linejoin="round" stroke-linecap="round" /><line x1="1487" y1="84" x2="1487" y2="93" stroke="#2b2b45" stroke-width="0.7" stroke-linecap="round" /><circle cx="1490.5" cy="95.5" r="3.6" fill="#3a3a4e" stroke="#3a3a4e" stroke-width="1"/><circle cx="1490.5" cy="95.5" r="1.5" fill="#ffffff" stroke="none" stroke-width="0"/><line x1="1494.5" y1="95.5" x2="1496.1" y2="95.5" stroke="#3a3a4e" stroke-width="1.8" stroke-linecap="round" stroke-linecap="butt"/><line x1="1493.33" y1="98.33" x2="1494.46" y2="99.46" stroke="#3a3a4e" stroke-width="1.8" stroke-linecap="round" stroke-linecap="butt"/><line x1="1490.5" y1="99.5" x2="1490.5" y2="101.1" stroke="#3a3a4e" stroke-width="1.8" stroke-linecap="round" stroke-linecap="butt"/><line x1="1487.67" y1="98.33" x2="1486.54" y2="99.46" stroke="#3a3a4e" stroke-width="1.8" stroke-linecap="round" stroke-linecap="butt"/><line x1="1486.5" y1="95.5" x2="1484.9" y2="95.5" stroke="#3a3a4e" stroke-width="1.8" stroke-linecap="round" stroke-linecap="butt"/><line x1="1487.67" y1="92.67" x2="1486.54" y2="91.54" stroke="#3a3a4e" stroke-width="1.8" stroke-linecap="round" stroke-linecap="butt"/><line x1="1490.5" y1="91.5" x2="1490.5" y2="89.9" stroke="#3a3a4e" stroke-width="1.8" stroke-linecap="round" stroke-linecap="butt"/><line x1="1493.33" y1="92.67" x2="1494.46" y2="91.54" stroke="#3a3a4e" stroke-width="1.8" stroke-linecap="round" stroke-linecap="butt"/><polygon points="1628.5,63 1640,52 1652.5,63 1650,63 1650,76 1632,76 1632,63" fill="#e8e8f0" stroke="#2b2b45" stroke-width="1" stroke-linejoin="round" /><polygon points="1628.5,63 1640,52 1643,54.5 1632,65 1632,76 1630.5,76 1630.5,64.5" fill="#b8b8cc" stroke="none" stroke-width="0" stroke-linejoin="round" /><rect x="1638" y="66" width="4.5" height="5.5" fill="#77778f" stroke="none" stroke-width="0" /><rect x="1643.5" y="66" width="4.5" height="5.5" fill="#77778f" stroke="none" stroke-width="0" /><polyline points="1628,69 1633,75 1643.5,61" fill="none" stroke="#3f9a2b" stroke-width="3.2" stroke-linejoin="round" stroke-linecap="round" /></svg>
<style>
#pp{left:0;top:164px;width:290px;height:848px}
.pr{position:absolute;left:3px;width:282px;height:17px;font-size:11.5px;line-height:16px;white-space:nowrap}
.pn{position:absolute;left:0;top:0;width:142px;height:16px;background:#fff;padding-left:4px;overflow:hidden;border-bottom:0}
.pv{position:absolute;left:142px;top:0;width:139px;height:16px;background:#fff;padding-left:4px;overflow:hidden}
.pr.sub .pn{left:16px;width:126px;padding-left:5px;color:#6d6d6d}
.pr.sub .pv{color:#6d6d6d}
.pr.dis .pn,.pr.dis .pv{color:#6d6d6d}
.pr.grp{font-weight:bold;color:#7d7d84}
.sw{display:inline-block;width:14px;height:14px;border:1px solid #111;vertical-align:-3px;margin:0 5px 0 -2px}
</style>
<div id="pp" class="abs">
<div class="t" style="left:4px;top:4px;font-size:11.5px;color:#46536b">Свойства</div>
<svg style="left:256px;top:5px" width="30" height="12"><path d="M3.5,1.500h4M4.500,1.500v5M7,1.500v5M2.500,6.500h6M5.500,6.500v3.5" stroke="#5a5f6a" fill="none" stroke-width="1"/><path d="M18.500,1.500l7,7M25.500,1.500l-7,7" stroke="#5a5f6a" stroke-width="1.300" fill="none"/></svg>
</div>
<svg class="abs" style="left:0;top:0" width="300" height="215" viewBox="0 0 300 215"><rect x="8.500" y="193.500" width="5" height="5" fill="#fff" stroke="#1a6cf0"/><rect x="8.500" y="201.500" width="5" height="5" fill="#fff" stroke="#1a6cf0"/><path d="M9.500,196h3M11,194.500v3M9.500,204h3M11,202.500v3" stroke="#2b2b45" stroke-width="0.9"/><path d="M15.500,195h3M20,195h3.500" stroke="#6a6f80" stroke-width="1"/><path d="M15.500,197.5h3M20,197.5h3.500" stroke="#6a6f80" stroke-width="1"/><path d="M15.500,200h3M20,200h3.500" stroke="#6a6f80" stroke-width="1"/><path d="M15.500,203h3M20,203h3.500" stroke="#6a6f80" stroke-width="1"/><path d="M15.500,205.5h3M20,205.5h3.500" stroke="#6a6f80" stroke-width="1"/><path d="M15.500,208h3M20,208h3.500" stroke="#6a6f80" stroke-width="1"/><path d="M30.500,193v15M81.500,193v15" stroke="#e8eaee" stroke-width="1.500"/><path d="M41.500,193h3.500M46.500,193h4" stroke="#3a3a55" stroke-width="1"/><path d="M41.500,195.5h3.500M46.500,195.5h4" stroke="#3a3a55" stroke-width="1"/><path d="M41.500,198h3.500M46.500,198h4" stroke="#3a3a55" stroke-width="1"/><path d="M41.500,201h3.500M46.500,201h4" stroke="#3a3a55" stroke-width="1"/><path d="M41.500,203.5h3.500M46.500,203.5h4" stroke="#3a3a55" stroke-width="1"/><path d="M41.500,206h3.500M46.500,206h4" stroke="#3a3a55" stroke-width="1"/><path d="M66,193h3.500M71,193h3" stroke="#6a6f80" stroke-width="1"/><path d="M66,195.5h3.500M71,195.5h3" stroke="#6a6f80" stroke-width="1"/><path d="M63,198h3.500M68,198h6" stroke="#6a6f80" stroke-width="1"/><path d="M63,201h3.500M68,201h6" stroke="#6a6f80" stroke-width="1"/><path d="M60,203.5h3.500M65,203.5h9" stroke="#6a6f80" stroke-width="1"/><path d="M60,206h3.500M65,206h9" stroke="#6a6f80" stroke-width="1"/><rect x="60.500" y="201" width="6" height="5.500" fill="#fff" stroke="#1a6cf0"/><path d="M61.500,205.500l4,-4" stroke="#2b2b45" stroke-width="0.9"/><path d="M90.500,200.500l3.500,4.500l9,-10" stroke="#9096a3" stroke-width="2.200" fill="none"/><circle cx="118" cy="198" r="4" fill="none" stroke="#2b2b45" stroke-width="1.800"/><path d="M121,201.500l5,5" stroke="#2b2b45" stroke-width="2.600" stroke-linecap="round"/></svg>
<div class="abs" style="left:3px;top:212px;width:283px;height:718px;background:#d2d2de"></div>
<div class="abs" style="left:3px;top:790px;width:142px;height:140px;background:#fff"></div><div class="abs" style="left:146px;top:790px;width:139px;height:140px;background:#fff"></div>
<div class="pr" style="top:212px"><div class="pn" style="background:#cdd1d6;font-weight:bold;">Идентификатор</div><div class="pv" style="color:#6d6d6d;">2</div></div>
<div class="pr dis" style="top:229px"><div class="pn" style="">Тип вида</div><div class="pv" style="">3D вид</div></div>
<div class="pr" style="top:246px"><div class="pn" style="">Название вида</div><div class="pv" style="">Общий вид</div></div>
<div class="pr" style="top:263px"><div class="pn" style="">Набор слоёв</div><div class="pv" style="">3D Моделирование</div></div>
<div class="pr" style="top:280px"><div class="pn" style="">Масштаб вида</div><div class="pv" style="">М 1:100</div></div>
<div class="pr" style="top:297px"><div class="pn" style="">Вид для ЖБК-результат...</div><div class="pv" style="">Нет</div></div>
<div class="pr" style="top:314px"><div class="pn" style="">Аналитика для постро...</div><div class="pv" style="">Нет</div></div>
<div class="pr" style="top:331px"><div class="pn" style="">Раздел</div><div class="pv" style=""></div></div>
<div class="pr" style="top:348px"><div class="pn" style="">Цвет фона</div><div class="pv" style=""><span class="sw" style="background:#ffffff"></span>ffffff</div></div>
<div class="pr" style="top:365px"><div class="pn" style="">Цвет сетки</div><div class="pv" style=""><span class="sw" style="background:#c4c3d4"></span>c4c3d4</div></div>
<div class="pr" style="top:382px"><div class="pn" style="">Сетка КЭ</div><div class="pv" style="">Да</div></div>
<div class="pr" style="top:399px"><div class="pn" style="">Местные оси</div><div class="pv" style="">Нет</div></div>
<div class="pr" style="top:416px"><div class="pn" style="">Шарниры</div><div class="pv" style="">Нет</div></div>
<div class="pr" style="top:433px"><div class="pn" style="">Показывать АЖТ</div><div class="pv" style="">Да</div></div>
<div class="pr" style="top:450px"><div class="pn" style="">Режим визуализации м...</div><div class="pv" style="">Основной режим</div></div>
<div class="pr" style="top:467px"><div class="pn" style="">Значения нагрузок</div><div class="pv" style="">Да</div></div>
<div class="pr" style="top:484px"><div class="pn" style="">Показать маркировку</div><div class="pv" style="">Нет</div></div>
<div class="pr" style="top:501px"><div class="pn" style="">Упрощенные модели</div><div class="pv" style="">Да</div></div>
<div class="pr" style="top:518px"><div class="pn" style="">Надписи в плоскости э...</div><div class="pv" style="">Нет</div></div>
<div class="pr" style="top:535px"><div class="pn" style="">Учитывать вес линий</div><div class="pv" style="">Нет</div></div>
<div class="pr" style="top:552px"><div class="pn" style="">Скрывать в виде</div><div class="pv" style="">Нет</div></div>
<div class="pr" style="top:569px"><div class="pn" style="">Показывать арматуру</div><div class="pv" style="">Нет</div></div>
<div class="pr" style="top:586px"><div class="pn" style="">Уровень сечения, мм</div><div class="pv" style="">1200</div></div>
<div class="pr" style="top:603px"><div class="pn" style="">Режим отрисовки под...</div><div class="pv" style="">По умолчанию</div></div>
<div class="pr" style="top:620px"><div class="pn" style="">Ближняя граница, мм</div><div class="pv" style="">500</div></div>
<div class="pr" style="top:637px"><div class="pn" style="">Дальняя граница, мм</div><div class="pv" style="">500000</div></div>
<div class="pr grp" style="top:654px;background:#cdd1d6;height:17px"><svg style="left:5px;top:4px" width="9" height="9"><rect x="0.500" y="0.500" width="8" height="8" fill="#e8eaee" stroke="#8a8e98"/><path d="M2.500,4.500h4" stroke="#555"/></svg><span style="position:absolute;left:21px;top:0">Позиция камеры, мм</span></div>
<div class="pr sub" style="top:671px"><div class="abs" style="left:0;top:0;width:16px;height:17px;background:#cdd1d6"></div><div class="pn" style="">X</div><div class="pv" style="">-25220.31</div></div>
<div class="pr sub" style="top:688px"><div class="abs" style="left:0;top:0;width:16px;height:17px;background:#cdd1d6"></div><div class="pn" style="">Y</div><div class="pv" style="">-39091.38</div></div>
<div class="pr sub" style="top:705px"><div class="abs" style="left:0;top:0;width:16px;height:17px;background:#cdd1d6"></div><div class="pn" style="">Z</div><div class="pv" style="">28541.59</div></div>
<div class="pr grp" style="top:722px;background:#cdd1d6;height:17px"><svg style="left:5px;top:4px" width="9" height="9"><rect x="0.500" y="0.500" width="8" height="8" fill="#e8eaee" stroke="#8a8e98"/><path d="M2.500,4.500h4" stroke="#555"/></svg><span style="position:absolute;left:21px;top:0">Опорная точка вида, мм</span></div>
<div class="pr sub" style="top:739px"><div class="abs" style="left:0;top:0;width:16px;height:17px;background:#cdd1d6"></div><div class="pn" style="">X</div><div class="pv" style="">6850.18</div></div>
<div class="pr sub" style="top:756px"><div class="abs" style="left:0;top:0;width:16px;height:17px;background:#cdd1d6"></div><div class="pn" style="">Y</div><div class="pv" style="">-10214.98</div></div>
<div class="pr sub" style="top:773px"><div class="abs" style="left:0;top:0;width:16px;height:17px;background:#cdd1d6"></div><div class="pn" style="">Z</div><div class="pv" style="">3290.10</div></div>
<div class="abs" style="left:3px;top:930px;width:282px;height:57px;background:#cdd1d6;border-top:1px solid #b8bcc4"></div>
<div class="t" style="left:8px;top:938px;font-weight:bold;font-size:11.5px">Идентификатор</div><div class="t" style="left:8px;top:953px;font-size:11.7px">Идентификатор объекта в модели</div>
<div class="abs" style="left:0;top:988px;width:287px;height:1px;background:#1a1a1a"></div>
<div class="abs" style="left:4px;top:991px;width:73px;height:19px;background:#e6e8ec"></div>
<svg style="left:6px;top:992px" width="18" height="16"><path d="M1,14.500h15M1.500,14.500v-8.500l8,8.500" stroke="#5a5f6a" fill="none"/><path d="M4,11l1,-3.500l8,-6.500l2.500,2.500l-8,6.500z" fill="#4a4a62" stroke="#3a3a50" stroke-width="0.800"/></svg>
<div class="t" style="left:24px;top:994px;font-size:11.3px;color:#46536b">Свойства</div>
<svg style="left:84px;top:992px" width="16" height="16"><circle cx="6" cy="6" r="4.200" fill="none" stroke="#3a3a55" stroke-width="1.700"/><path d="M9,9.500l5,5" stroke="#3a3a55" stroke-width="2.400" stroke-linecap="round"/></svg>
<div class="t" style="left:102px;top:994px;font-size:11.7px;color:#5a6478">Предварительный просмотр</div>
<style>
.vf{position:absolute;background:#fff}
.tabt{position:absolute;font-size:11.5px;white-space:nowrap;line-height:14px;color:#111}
</style>
<div class="abs" style="left:293px;top:189px;width:733px;height:823px;background:linear-gradient(90deg,#a6cdf8 0%,#b4dcfa 50%,#d2fcff 100%)"></div>
<div class="abs" style="left:295px;top:191px;width:730px;height:819px;background:#fff;border-left:1.500px solid #404040;border-top:1.500px solid #404040;border-right:1px solid #d8d0c8;border-bottom:1px solid #d8d0c8;box-shadow:1px 1px 0 #fff"></div>
<div class="abs" style="left:1031px;top:189px;width:865px;height:823px;background:linear-gradient(90deg,#a8d4f8 0%,#b6e0fa 50%,#d0fdff 100%)"></div>
<div class="abs" style="left:1033px;top:191px;width:860px;height:819px;background:#fff;border-left:1.500px solid #404040;border-top:1.500px solid #404040;border-right:1px solid #d8d0c8;border-bottom:1px solid #d8d0c8;box-shadow:1px 1px 0 #fff"></div>
<svg class="abs" style="left:0;top:0" width="1920" height="195" viewBox="0 0 1920 195"><defs><linearGradient id="tg" x1="0" y1="0" x2="0" y2="1"><stop offset="0" stop-color="#c6f3ff"/><stop offset="0.450" stop-color="#bce8fd"/><stop offset="0.550" stop-color="#a5c9f2"/><stop offset="1" stop-color="#a5c9f2"/></linearGradient></defs><path d="M294,189.500 L315.500,167.500 H460 L452,189.500z" fill="#cdd1d6"/><path d="M294.500,189 L315.500,167.500 H460" fill="none" stroke="#55595f" stroke-width="1"/><path d="M316,168.500H460" stroke="#fff" stroke-width="1"/><path d="M296,189 L316.500,168.500" stroke="#fff" stroke-width="1"/><path d="M450,189.500 L470.500,167.500 H672.500 V189.500z" fill="url(#tg)"/><path d="M450.500,189 L470.500,167.500 H672.500 V189.500" fill="none" stroke="#55595f" stroke-width="1"/><path d="M471,168.500H672" stroke="#fff" stroke-width="1"/><path d="M452,189 L471.500,168.500" stroke="#fff" stroke-width="1"/><path d="M1032,189.500 L1053.500,167.500 H1357.500 V189.500z" fill="url(#tg)"/><path d="M1032.500,189 L1053.500,167.500 H1357.500 V189.500" fill="none" stroke="#55595f" stroke-width="1"/><path d="M1054,168.500H1357" stroke="#fff" stroke-width="1"/><path d="M1034,189 L1054.500,168.500" stroke="#fff" stroke-width="1"/><path d="M657.5,174.500l7,7M664.5,174.500l-7,7" stroke="#6a6f78" stroke-width="1.300"/><path d="M1340.5,174.500l7,7M1347.5,174.500l-7,7" stroke="#6a6f78" stroke-width="1.300"/><polygon points="1007.5,175.500 1016.5,175.500 1012,180.500" fill="#7a7a7a"/><polygon points="1880.5,175.500 1889.5,175.500 1885,180.500" fill="#7a7a7a"/><rect x="323" y="170" width="11" height="15" fill="#b8dcff"/><polygon points="328.500,172 334,178 328.500,183.500 323,178" fill="#1a35d8"/><polygon points="328.500,172 328.500,183.500 325,178" fill="#fff" opacity="0.850"/><polygon points="325,180 332,180 328.500,184" fill="#0a0a40"/><rect x="325" y="184" width="8" height="1.500" fill="#1a6cf0"/><polygon points="469.500,177.500 476.500,170.500 484,177.500 482.500,177.500 482.500,184.500 471,184.500 471,177.500" fill="#fff" stroke="#3a3a4a" stroke-width="1"/><polygon points="471,177.500 474.500,174 474.500,184.500 471,184.500" fill="#8a8a9a"/><rect x="476.500" y="178" width="2.500" height="5" fill="#4a4a5a"/><rect x="480" y="178" width="1.800" height="4" fill="#4a4a5a"/><path d="M1058.500,170v11.500M1058.500,170h9l3,2.500M1061,172.500h10v12M1061,172.500v12M1066,172.500v12M1061,178.500h10M1058.500,176h2.500M1058.500,170l2.500,2.500M1058.500,181.500l2.500,2M1061,183.500h10" stroke="#1a1a2e" stroke-width="1.100" fill="none"/></svg>
<div class="tabt" style="left:343px;top:171px">Стартовая страница</div>
<div class="tabt" style="left:496px;top:171px;font-weight:bold;font-size:10.800px">1_Ferm_load.spf:Общий вид</div>
<div class="tabt" style="left:1086px;top:171px;font-size:11.100px">1_Ferm_load.spf:Расчетная модель вариант 1</div>
<div class="tabt" style="left:1903px;top:195px;writing-mode:vertical-rl;font-size:12.4px;color:#3b4961;line-height:14px">Структура</div>
<div class="tabt" style="left:1903px;top:339px;writing-mode:vertical-rl;font-size:12px;color:#3b4961;line-height:14px">Виды</div>
<svg class="abs" style="left:0;top:0" width="1920" height="420" viewBox="0 0 1920 420"><path d="M1903,175.500l4,-3.500l4,3l-4,3.500z" fill="#fff" stroke="#3a3a50" stroke-width="1"/><path d="M1910,181l3.500,-3l4,3l-3.500,3z" fill="#fff" stroke="#3a3a50" stroke-width="1"/><path d="M1909,176.500l3.500,2.500" stroke="#3a3a50"/><ellipse cx="1910.500" cy="281.0" rx="5.500" ry="1.800" fill="#c6c8d8" stroke="#8c8ea8" stroke-width="0.800"/><ellipse cx="1910.500" cy="283.5" rx="5.500" ry="1.800" fill="#c6c8d8" stroke="#8c8ea8" stroke-width="0.800"/><ellipse cx="1910.500" cy="286.0" rx="5.500" ry="1.800" fill="#c6c8d8" stroke="#8c8ea8" stroke-width="0.800"/><ellipse cx="1910.500" cy="288.5" rx="5.500" ry="1.800" fill="#c6c8d8" stroke="#8c8ea8" stroke-width="0.800"/><ellipse cx="1910.500" cy="291.0" rx="5.500" ry="1.800" fill="#c6c8d8" stroke="#8c8ea8" stroke-width="0.800"/><path d="M1903,319v-3h3M1915,316h3v3M1903,328v3h3M1915,331h3v-3" stroke="#6a6f80" fill="none"/><path d="M1905.500,319l2,-1.500h8v8.500l-2,2h-8z" fill="#fff" stroke="#2b2b45"/><rect x="1907.500" y="320" width="6.500" height="7" fill="#c9c9de" stroke="#2b2b45" stroke-width="0.800"/><path d="M1904.500,394.500h7l4,4v10h-11z" fill="#fff" stroke="#2b2b45" stroke-width="1.100"/><path d="M1911.500,394.500v4h4" fill="none" stroke="#2b2b45" stroke-width="0.900"/></svg>
<div class="abs" style="left:306px;top:202px;width:75px;height:107px;background:#cdd1d6"></div>
<div class="tabt" style="left:311px;top:210px;font-weight:bold;font-size:11px;color:#4a4f5c">Проекц...</div>
<svg class="abs" style="left:0;top:0" width="400" height="320" viewBox="0 0 400 320"><path d="M366.500,212.500l7,7M373.500,212.500l-7,7" stroke="#6a6f78" stroke-width="1.300"/><path d="M316.0,236.7l6.500,-4.500l6,3v8.500l-6.500,4l-6,-3.500z" fill="#dcdcec" fill-opacity="0.600" stroke="#6c6a88"/><path d="M316.0,236.7l6,3.500l6.500,-5M322.0,240.2v7.500" stroke="#6c6a88" fill="none"/><rect x="337.5" y="232.7" width="10" height="10" fill="none" stroke="#6c6a88" stroke-width="1"/><path d="M337.5,232.7l3,3.500M347.5,232.7l3,3.500M337.5,242.7l3,3.500" stroke="#6c6a88" stroke-width="1"/><rect x="340.5" y="236.2" width="10" height="10" fill="#dcdcec" fill-opacity="0.700" stroke="#6c6a88" stroke-width="1"/><path d="M337.5,232.7h10l3,3.500h-10z" fill="#f08088" stroke="#e8202a" stroke-width="1.300"/><rect x="359.5" y="232.7" width="10" height="10" fill="none" stroke="#6c6a88" stroke-width="1"/><path d="M359.5,232.7l3,3.500M369.5,232.7l3,3.500M359.5,242.7l3,3.500" stroke="#6c6a88" stroke-width="1"/><rect x="362.5" y="236.2" width="10" height="10" fill="#dcdcec" fill-opacity="0.700" stroke="#6c6a88" stroke-width="1"/><rect x="363.0" y="236.7" width="9.500" height="9.500" fill="#b8ccf8" stroke="#1a6cf0" stroke-width="1.600"/><rect x="316.0" y="260" width="10" height="10" fill="none" stroke="#6c6a88" stroke-width="1"/><path d="M316.0,260l3,3.500M326.0,260l3,3.500M316.0,270l3,3.500" stroke="#6c6a88" stroke-width="1"/><rect x="319.0" y="263.5" width="10" height="10" fill="#dcdcec" fill-opacity="0.700" stroke="#6c6a88" stroke-width="1"/><path d="M316.0,260l3,3.500v10l-3,-3.500z" fill="#58b070" stroke="#1a9a40" stroke-width="1.300"/><rect x="337.5" y="260" width="10" height="10" fill="none" stroke="#6c6a88" stroke-width="1"/><path d="M337.5,260l3,3.500M347.5,260l3,3.500M337.5,270l3,3.500" stroke="#6c6a88" stroke-width="1"/><rect x="340.5" y="263.5" width="10" height="10" fill="#dcdcec" fill-opacity="0.700" stroke="#6c6a88" stroke-width="1"/><path d="M335.5,261.5v-3h3.500M349.0,258.5h3.500v3M335.5,271v3.500h3.500M349.0,274.5h3.500v-3.500" stroke="#1a6cf0" fill="none" stroke-width="1.400"/><rect x="359.5" y="260" width="10" height="10" fill="none" stroke="#6c6a88" stroke-width="1"/><path d="M359.5,260l3,3.500M369.5,260l3,3.500M359.5,270l3,3.500" stroke="#6c6a88" stroke-width="1"/><rect x="362.5" y="263.5" width="10" height="10" fill="#dcdcec" fill-opacity="0.700" stroke="#6c6a88" stroke-width="1"/><path d="M369.5,260l3,3.500v10l-3,-3.500z" fill="#58b070" stroke="#1a9a40" stroke-width="1.300"/><rect x="316.0" y="286.5" width="10" height="10" fill="none" stroke="#6c6a88" stroke-width="1"/><path d="M316.0,286.5l3,3.500M326.0,286.5l3,3.500M316.0,296.5l3,3.500" stroke="#6c6a88" stroke-width="1"/><rect x="319.0" y="290.0" width="10" height="10" fill="#dcdcec" fill-opacity="0.700" stroke="#6c6a88" stroke-width="1"/><path d="M313.5,284.5l5.500,5.500M313.5,284.5l5.500,15.500M313.5,284.5l15.500,5.500" stroke="#1a6cf0" fill="none" stroke-width="1.100"/><polygon points="313.5,284.5 317.0,285.5 314.5,288.0" fill="#1a6cf0"/><rect x="337.5" y="286.5" width="10" height="10" fill="none" stroke="#6c6a88" stroke-width="1"/><path d="M337.5,286.5l3,3.500M347.5,286.5l3,3.500M337.5,296.5l3,3.500" stroke="#6c6a88" stroke-width="1"/><rect x="340.5" y="290.0" width="10" height="10" fill="#dcdcec" fill-opacity="0.700" stroke="#6c6a88" stroke-width="1"/><path d="M337.5,296.5l3,3.500h10" fill="none" stroke="#e8202a" stroke-width="1.800"/><rect x="359.5" y="286.5" width="10" height="10" fill="#b8ccf8" stroke="#1a6cf0" stroke-width="1.500"/><path d="M359.5,286.5l3,3.500M369.5,286.5l3,3.500M359.5,296.5l3,3.500" stroke="#6c6a88" stroke-width="1"/><rect x="362.5" y="290.0" width="10" height="10" fill="#dcdcec" fill-opacity="0.700" stroke="#6c6a88" stroke-width="1"/></svg>
<div class="abs" style="left:1737px;top:918px;width:140px;height:71px;background:#f0f0f0;border-top:1px solid #d0c8c0;border-left:1px solid #d0c8c0;border-right:2px solid #404040;border-bottom:2px solid #404040;box-shadow:inset 1px 1px 0 #fff"></div>
<div class="abs" style="left:1868px;top:926px;width:1px;height:31px;background:#808080;box-shadow:1px 0 0 #fff"></div><div class="abs" style="left:1745px;top:926px;width:1px;height:31px;background:#808080;box-shadow:1px 0 0 #fff"></div>
<div class="tabt" style="left:1752px;top:921px;font-size:11px;color:#2a1a9a;">X :</div>
<div class="tabt" style="left:1770px;top:921px;font-size:11px;color:#10a010">0.00</div>
<div class="tabt" style="left:1752px;top:934px;font-size:11px;color:#2a1a9a;">Y :</div>
<div class="tabt" style="left:1752px;top:947px;font-size:11px;color:#2a1a9a;">Z :</div>
<div class="tabt" style="left:1752px;top:960px;font-size:11px;color:#2a1a9a;font-weight:bold;">L :</div>
<div class="tabt" style="left:1749px;top:973px;font-size:11px;color:#2a1a9a;">Ux :</div>
<svg class="abs" style="left:297px;top:192px" width="726" height="816" viewBox="297 192 726 816"><style>.q{fill:#88d0f4;fill-opacity:.42}.qf{fill:#6f8fa8;fill-opacity:.5}.t{stroke:#2c64cc;stroke-width:1.9;fill:none}.d{stroke:#6aa8e8;stroke-width:1.7;fill:none}.tn{fill:#3a74cc}.dn{fill:#6aa6e2}.sy{fill:#fffb70;fill-opacity:.55}.sb{fill:#f4de50;fill-opacity:.95}</style><defs><linearGradient id="lg" gradientUnits="userSpaceOnUse" x1="600" y1="840" x2="860" y2="560"><stop offset="0" stop-color="#fff" stop-opacity=".55"/><stop offset="1" stop-color="#fff" stop-opacity="0"/></linearGradient><clipPath id="cl"><rect x="297" y="192" width="726" height="816"/></clipPath><clipPath id="cp"><polygon points="661.1,376.9 986.9,524.2 599.4,741.7 273.6,594.4"/></clipPath></defs><g clip-path="url(#cl)"><polygon class="qf" points="660.3,472 621,495.1 659.8,473.4 699.1,450.3"/><polygon class="qf" points="621.5,493.7 582.2,516.8 621,495.1 660.3,472"/><polygon class="qf" points="707,464.4 660.3,472 699.1,450.3 745.8,442.7"/><polygon class="qf" points="582.7,515.4 543.4,538.5 582.2,516.8 621.5,493.7"/><polygon class="qf" points="668.2,486.1 621.5,493.7 660.3,472 707,464.4"/><polygon class="qf" points="543.9,537.1 504.6,560.2 543.4,538.5 582.7,515.4"/><polygon class="q" points="758.2,472.9 707,464.4 745.8,442.7 797,451.2"/><polygon class="qf" points="629.4,507.8 582.7,515.4 621.5,493.7 668.2,486.1"/><polygon class="qf" points="505.1,558.8 465.8,581.9 504.6,560.2 543.9,537.1"/><polygon class="q" points="719.4,494.6 668.2,486.1 707,464.4 758.2,472.9"/><polygon class="q" points="810.9,497 758.2,472.9 797,451.2 849.7,475.3"/><polygon class="qf" points="590.6,529.5 543.9,537.1 582.7,515.4 629.4,507.8"/><polygon class="qf" points="466.3,580.5 427,603.6 465.8,581.9 505.1,558.8"/><polygon class="q" points="680.6,516.3 629.4,507.8 668.2,486.1 719.4,494.6"/><polygon class="q" points="862.1,535.2 810.9,497 849.7,475.3 900.9,513.5"/><polygon class="q" points="772.1,518.7 719.4,494.6 758.2,472.9 810.9,497"/><polygon class="qf" points="551.8,551.2 505.1,558.8 543.9,537.1 590.6,529.5"/><polygon class="q" points="908.7,585.4 862.1,535.2 900.9,513.5 947.5,563.7"/><polygon class="qf" points="427.5,602.2 388.2,625.3 427,603.6 466.3,580.5"/><polygon class="q" points="641.8,538 590.6,529.5 629.4,507.8 680.6,516.3"/><polygon class="q" points="948.1,644.5 908.7,585.4 947.5,563.7 986.9,622.8"/><polygon class="q" points="823.3,556.9 772.1,518.7 810.9,497 862.1,535.2"/><polygon class="q" points="733.3,540.4 680.6,516.3 719.4,494.6 772.1,518.7"/><polygon class="qf" points="513,572.9 466.3,580.5 505.1,558.8 551.8,551.2"/><polygon class="q" points="869.9,607.1 823.3,556.9 862.1,535.2 908.7,585.4"/><polygon class="qf" points="388.7,623.9 349.4,647 388.2,625.3 427.5,602.2"/><polygon class="q" points="603,559.7 551.8,551.2 590.6,529.5 641.8,538"/><polygon class="q" points="909.3,666.2 869.9,607.1 908.7,585.4 948.1,644.5"/><polygon class="q" points="784.5,578.6 733.3,540.4 772.1,518.7 823.3,556.9"/><polygon class="q" points="694.5,562.1 641.8,538 680.6,516.3 733.3,540.4"/><polygon class="qf" points="474.2,594.6 427.5,602.2 466.3,580.5 513,572.9"/><polygon class="q" points="831.1,628.8 784.5,578.6 823.3,556.9 869.9,607.1"/><polygon class="qf" points="349.9,645.6 310.6,668.7 349.4,647 388.7,623.9"/><polygon class="q" points="564.2,581.4 513,572.9 551.8,551.2 603,559.7"/><polygon class="q" points="870.5,687.9 831.1,628.8 869.9,607.1 909.3,666.2"/><polygon class="q" points="745.7,600.3 694.5,562.1 733.3,540.4 784.5,578.6"/><polygon class="q" points="655.7,583.8 603,559.7 641.8,538 694.5,562.1"/><polygon class="qf" points="435.4,616.3 388.7,623.9 427.5,602.2 474.2,594.6"/><polygon class="q" points="792.3,650.5 745.7,600.3 784.5,578.6 831.1,628.8"/><polygon class="qf" points="311.1,667.3 271.8,690.4 310.6,668.7 349.9,645.6"/><polygon class="q" points="525.4,603.1 474.2,594.6 513,572.9 564.2,581.4"/><polygon class="q" points="831.7,709.6 792.3,650.5 831.1,628.8 870.5,687.9"/><polygon class="q" points="706.9,622 655.7,583.8 694.5,562.1 745.7,600.3"/><polygon class="q" points="616.9,605.5 564.2,581.4 603,559.7 655.7,583.8"/><polygon class="qf" points="396.6,638 349.9,645.6 388.7,623.9 435.4,616.3"/><polygon class="q" points="753.5,672.2 706.9,622 745.7,600.3 792.3,650.5"/><polygon class="q" points="486.6,624.8 435.4,616.3 474.2,594.6 525.4,603.1"/><polygon class="q" points="792.9,731.3 753.5,672.2 792.3,650.5 831.7,709.6"/><polygon class="q" points="668.1,643.7 616.9,605.5 655.7,583.8 706.9,622"/><polygon class="q" points="578.1,627.2 525.4,603.1 564.2,581.4 616.9,605.5"/><polygon class="qf" points="357.8,659.7 311.1,667.3 349.9,645.6 396.6,638"/><polygon class="q" points="714.7,693.9 668.1,643.7 706.9,622 753.5,672.2"/><polygon class="q" points="447.8,646.5 396.6,638 435.4,616.3 486.6,624.8"/><polygon class="q" points="754.1,753 714.7,693.9 753.5,672.2 792.9,731.3"/><polygon class="q" points="629.3,665.4 578.1,627.2 616.9,605.5 668.1,643.7"/><polygon class="q" points="539.3,648.9 486.6,624.8 525.4,603.1 578.1,627.2"/><polygon class="q" points="675.9,715.6 629.3,665.4 668.1,643.7 714.7,693.9"/><polygon class="q" points="409,668.2 357.8,659.7 396.6,638 447.8,646.5"/><polygon class="q" points="715.3,774.7 675.9,715.6 714.7,693.9 754.1,753"/><polygon class="q" points="590.5,687.1 539.3,648.9 578.1,627.2 629.3,665.4"/><polygon class="q" points="500.5,670.6 447.8,646.5 486.6,624.8 539.3,648.9"/><polygon class="q" points="637.1,737.3 590.5,687.1 629.3,665.4 675.9,715.6"/><polygon class="q" points="676.5,796.4 637.1,737.3 675.9,715.6 715.3,774.7"/><polygon class="q" points="551.7,708.8 500.5,670.6 539.3,648.9 590.5,687.1"/><polygon class="q" points="461.7,692.3 409,668.2 447.8,646.5 500.5,670.6"/><polygon class="q" points="598.3,759 551.7,708.8 590.5,687.1 637.1,737.3"/><polygon class="q" points="637.7,818.1 598.3,759 637.1,737.3 676.5,796.4"/><polygon class="q" points="512.9,730.5 461.7,692.3 500.5,670.6 551.7,708.8"/><polygon class="q" points="559.5,780.7 512.9,730.5 551.7,708.8 598.3,759"/><polygon class="q" points="598.9,839.8 559.5,780.7 598.3,759 637.7,818.1"/><polygon points="598.9,839.8 559.5,780.7 512.9,730.5 461.7,692.3 409,668.2 357.8,659.7 311.1,667.3 271.8,690.4 659.8,473.4 659.8,473.4 699.1,450.3 745.8,442.7 797,451.2 849.7,475.3 900.9,513.5 947.5,563.7 986.9,622.8" fill="url(#lg)"/><circle cx="659.8" cy="473.4" r="2.4" class="tn"/><path d="M621,495.1L659.8,473.4" class="t"/><path d="M670,490.3L659.8,473.4" class="d"/><path d="M699.1,450.3L659.8,473.4" class="t"/><circle cx="621" cy="495.1" r="2.4" class="tn"/><path d="M670,490.3L621,495.1" class="d"/><circle cx="670" cy="490.3" r="1.9" class="dn"/><path d="M670,490.3L699.1,450.3" class="d"/><path d="M582.2,516.8L621,495.1" class="t"/><path d="M631.2,512L621,495.1" class="d"/><circle cx="699.1" cy="450.3" r="2.4" class="tn"/><path d="M631.2,512L670,490.3" class="d"/><path d="M660.3,472L621,495.1" class="t"/><path d="M670,490.3L660.3,472" class="d"/><circle cx="582.2" cy="516.8" r="2.4" class="tn"/><path d="M710,476L670,490.3" class="d"/><path d="M631.2,512L582.2,516.8" class="d"/><path d="M660.3,472L699.1,450.3" class="t"/><path d="M710,476L699.1,450.3" class="d"/><circle cx="631.2" cy="512" r="1.9" class="dn"/><path d="M745.8,442.7L699.1,450.3" class="t"/><path d="M631.2,512L660.3,472" class="d"/><path d="M543.4,538.5L582.2,516.8" class="t"/><path d="M592.4,533.7L582.2,516.8" class="d"/><circle cx="660.3" cy="472" r="2.4" class="tn"/><path d="M710,476L660.3,472" class="d"/><path d="M592.4,533.7L631.2,512" class="d"/><circle cx="710" cy="476" r="1.9" class="dn"/><path d="M621.5,493.7L582.2,516.8" class="t"/><path d="M631.2,512L621.5,493.7" class="d"/><circle cx="543.4" cy="538.5" r="2.4" class="tn"/><path d="M710,476L745.8,442.7" class="d"/><path d="M671.2,497.7L631.2,512" class="d"/><path d="M592.4,533.7L543.4,538.5" class="d"/><path d="M621.5,493.7L660.3,472" class="t"/><path d="M671.2,497.7L660.3,472" class="d"/><circle cx="745.8" cy="442.7" r="2.4" class="tn"/><circle cx="592.4" cy="533.7" r="1.9" class="dn"/><path d="M671.2,497.7L710,476" class="d"/><path d="M707,464.4L660.3,472" class="t"/><path d="M592.4,533.7L621.5,493.7" class="d"/><path d="M755.6,476.5L710,476" class="d"/><path d="M504.6,560.2L543.4,538.5" class="t"/><path d="M710,476L707,464.4" class="d"/><path d="M553.6,555.4L543.4,538.5" class="d"/><circle cx="621.5" cy="493.7" r="2.4" class="tn"/><path d="M755.6,476.5L745.8,442.7" class="d"/><path d="M671.2,497.7L621.5,493.7" class="d"/><path d="M707,464.4L745.8,442.7" class="t"/><path d="M553.6,555.4L592.4,533.7" class="d"/><circle cx="671.2" cy="497.7" r="1.9" class="dn"/><path d="M582.7,515.4L543.4,538.5" class="t"/><path d="M797,451.2L745.8,442.7" class="t"/><path d="M592.4,533.7L582.7,515.4" class="d"/><circle cx="504.6" cy="560.2" r="2.4" class="tn"/><path d="M671.2,497.7L707,464.4" class="d"/><path d="M632.4,519.4L592.4,533.7" class="d"/><path d="M553.6,555.4L504.6,560.2" class="d"/><path d="M582.7,515.4L621.5,493.7" class="t"/><circle cx="755.6" cy="476.5" r="1.9" class="dn"/><path d="M755.6,476.5L707,464.4" class="d"/><path d="M632.4,519.4L621.5,493.7" class="d"/><circle cx="707" cy="464.4" r="2.4" class="tn"/><circle cx="553.6" cy="555.4" r="1.9" class="dn"/><path d="M632.4,519.4L671.2,497.7" class="d"/><path d="M755.6,476.5L797,451.2" class="d"/><path d="M668.2,486.1L621.5,493.7" class="t"/><path d="M553.6,555.4L582.7,515.4" class="d"/><path d="M716.8,498.2L671.2,497.7" class="d"/><path d="M465.8,581.9L504.6,560.2" class="t"/><path d="M671.2,497.7L668.2,486.1" class="d"/><path d="M514.8,577.1L504.6,560.2" class="d"/><circle cx="797" cy="451.2" r="2.4" class="tn"/><path d="M716.8,498.2L755.6,476.5" class="d"/><circle cx="582.7" cy="515.4" r="2.4" class="tn"/><path d="M716.8,498.2L707,464.4" class="d"/><path d="M632.4,519.4L582.7,515.4" class="d"/><path d="M668.2,486.1L707,464.4" class="t"/><path d="M803.9,491.7L755.6,476.5" class="d"/><path d="M514.8,577.1L553.6,555.4" class="d"/><circle cx="632.4" cy="519.4" r="1.9" class="dn"/><path d="M543.9,537.1L504.6,560.2" class="t"/><path d="M755.6,476.5L758.2,472.9" class="d"/><path d="M758.2,472.9L707,464.4" class="t"/><path d="M553.6,555.4L543.9,537.1" class="d"/><path d="M803.9,491.7L797,451.2" class="d"/><circle cx="465.8" cy="581.9" r="2.4" class="tn"/><path d="M632.4,519.4L668.2,486.1" class="d"/><path d="M593.6,541.1L553.6,555.4" class="d"/><path d="M514.8,577.1L465.8,581.9" class="d"/><path d="M758.2,472.9L797,451.2" class="t"/><path d="M543.9,537.1L582.7,515.4" class="t"/><circle cx="716.8" cy="498.2" r="1.9" class="dn"/><path d="M849.7,475.3L797,451.2" class="t"/><path d="M716.8,498.2L668.2,486.1" class="d"/><path d="M593.6,541.1L582.7,515.4" class="d"/><circle cx="668.2" cy="486.1" r="2.4" class="tn"/><circle cx="514.8" cy="577.1" r="1.9" class="dn"/><path d="M593.6,541.1L632.4,519.4" class="d"/><circle cx="803.9" cy="491.7" r="1.9" class="dn"/><path d="M716.8,498.2L758.2,472.9" class="d"/><path d="M629.4,507.8L582.7,515.4" class="t"/><path d="M514.8,577.1L543.9,537.1" class="d"/><path d="M678,519.9L632.4,519.4" class="d"/><path d="M427,603.6L465.8,581.9" class="t"/><path d="M803.9,491.7L758.2,472.9" class="d"/><path d="M632.4,519.4L629.4,507.8" class="d"/><path d="M803.9,491.7L849.7,475.3" class="d"/><path d="M476,598.8L465.8,581.9" class="d"/><circle cx="758.2" cy="472.9" r="2.4" class="tn"/><path d="M678,519.9L716.8,498.2" class="d"/><circle cx="543.9" cy="537.1" r="2.4" class="tn"/><path d="M678,519.9L668.2,486.1" class="d"/><path d="M593.6,541.1L543.9,537.1" class="d"/><path d="M629.4,507.8L668.2,486.1" class="t"/><path d="M765.1,513.4L716.8,498.2" class="d"/><path d="M476,598.8L514.8,577.1" class="d"/><circle cx="849.7" cy="475.3" r="2.4" class="tn"/><path d="M852.3,520.7L803.9,491.7" class="d"/><circle cx="593.6" cy="541.1" r="1.9" class="dn"/><path d="M505.1,558.8L465.8,581.9" class="t"/><path d="M765.1,513.4L803.9,491.7" class="d"/><path d="M716.8,498.2L719.4,494.6" class="d"/><path d="M719.4,494.6L668.2,486.1" class="t"/><path d="M514.8,577.1L505.1,558.8" class="d"/><path d="M765.1,513.4L758.2,472.9" class="d"/><path d="M852.3,520.7L849.7,475.3" class="d"/><circle cx="427" cy="603.6" r="2.4" class="tn"/><path d="M593.6,541.1L629.4,507.8" class="d"/><path d="M554.8,562.8L514.8,577.1" class="d"/><path d="M803.9,491.7L810.9,497" class="d"/><path d="M476,598.8L427,603.6" class="d"/><path d="M719.4,494.6L758.2,472.9" class="t"/><path d="M505.1,558.8L543.9,537.1" class="t"/><path d="M900.9,513.5L849.7,475.3" class="t"/><circle cx="678" cy="519.9" r="1.9" class="dn"/><path d="M810.9,497L758.2,472.9" class="t"/><path d="M678,519.9L629.4,507.8" class="d"/><path d="M554.8,562.8L543.9,537.1" class="d"/><circle cx="852.3" cy="520.7" r="1.9" class="dn"/><path d="M810.9,497L849.7,475.3" class="t"/><circle cx="629.4" cy="507.8" r="2.4" class="tn"/><circle cx="476" cy="598.8" r="1.9" class="dn"/><path d="M554.8,562.8L593.6,541.1" class="d"/><circle cx="765.1" cy="513.4" r="1.9" class="dn"/><path d="M852.3,520.7L900.9,513.5" class="d"/><path d="M678,519.9L719.4,494.6" class="d"/><path d="M590.6,529.5L543.9,537.1" class="t"/><path d="M476,598.8L505.1,558.8" class="d"/><path d="M639.2,541.6L593.6,541.1" class="d"/><path d="M388.2,625.3L427,603.6" class="t"/><path d="M765.1,513.4L719.4,494.6" class="d"/><path d="M852.3,520.7L810.9,497" class="d"/><path d="M593.6,541.1L590.6,529.5" class="d"/><path d="M897.8,561.8L852.3,520.7" class="d"/><path d="M765.1,513.4L810.9,497" class="d"/><circle cx="900.9" cy="513.5" r="2.4" class="tn"/><path d="M437.2,620.5L427,603.6" class="d"/><circle cx="719.4" cy="494.6" r="2.4" class="tn"/><path d="M639.2,541.6L678,519.9" class="d"/><path d="M897.8,561.8L900.9,513.5" class="d"/><circle cx="505.1" cy="558.8" r="2.4" class="tn"/><path d="M639.2,541.6L629.4,507.8" class="d"/><path d="M554.8,562.8L505.1,558.8" class="d"/><path d="M590.6,529.5L629.4,507.8" class="t"/><path d="M813.5,542.4L852.3,520.7" class="d"/><path d="M726.3,535.1L678,519.9" class="d"/><path d="M437.2,620.5L476,598.8" class="d"/><path d="M947.5,563.7L900.9,513.5" class="t"/><circle cx="810.9" cy="497" r="2.4" class="tn"/><path d="M813.5,542.4L765.1,513.4" class="d"/><circle cx="554.8" cy="562.8" r="1.9" class="dn"/><path d="M466.3,580.5L427,603.6" class="t"/><circle cx="897.8" cy="561.8" r="1.9" class="dn"/><path d="M726.3,535.1L765.1,513.4" class="d"/><path d="M897.8,561.8L947.5,563.7" class="d"/><path d="M852.3,520.7L862.1,535.2" class="d"/><path d="M937.9,612.6L897.8,561.8" class="d"/><path d="M678,519.9L680.6,516.3" class="d"/><path d="M680.6,516.3L629.4,507.8" class="t"/><path d="M476,598.8L466.3,580.5" class="d"/><path d="M986.9,622.8L947.5,563.7" class="t"/><path d="M937.9,612.6L947.5,563.7" class="d"/><path d="M937.9,612.6L986.9,622.8" class="d"/><path d="M726.3,535.1L719.4,494.6" class="d"/><circle cx="947.5" cy="563.7" r="2.4" class="tn"/><path d="M813.5,542.4L810.9,497" class="d"/><circle cx="388.2" cy="625.3" r="2.4" class="tn"/><circle cx="986.9" cy="622.8" r="2.4" class="tn"/><path d="M554.8,562.8L590.6,529.5" class="d"/><circle cx="937.9" cy="612.6" r="1.9" class="dn"/><path d="M516,584.5L476,598.8" class="d"/><path d="M765.1,513.4L772.1,518.7" class="d"/><path d="M862.1,535.2L900.9,513.5" class="t"/><path d="M437.2,620.5L388.2,625.3" class="d"/><path d="M680.6,516.3L719.4,494.6" class="t"/><path d="M466.3,580.5L505.1,558.8" class="t"/><path d="M862.1,535.2L810.9,497" class="t"/><path d="M897.8,561.8L862.1,535.2" class="d"/><circle cx="639.2" cy="541.6" r="1.9" class="dn"/><path d="M772.1,518.7L719.4,494.6" class="t"/><path d="M639.2,541.6L590.6,529.5" class="d"/><path d="M516,584.5L505.1,558.8" class="d"/><circle cx="813.5" cy="542.4" r="1.9" class="dn"/><path d="M772.1,518.7L810.9,497" class="t"/><circle cx="590.6" cy="529.5" r="2.4" class="tn"/><circle cx="437.2" cy="620.5" r="1.9" class="dn"/><path d="M516,584.5L554.8,562.8" class="d"/><path d="M859,583.5L897.8,561.8" class="d"/><circle cx="726.3" cy="535.1" r="1.9" class="dn"/><path d="M897.8,561.8L908.7,585.4" class="d"/><path d="M813.5,542.4L862.1,535.2" class="d"/><path d="M639.2,541.6L680.6,516.3" class="d"/><path d="M551.8,551.2L505.1,558.8" class="t"/><path d="M437.2,620.5L466.3,580.5" class="d"/><path d="M908.7,585.4L947.5,563.7" class="t"/><path d="M600.4,563.3L554.8,562.8" class="d"/><path d="M349.4,647L388.2,625.3" class="t"/><path d="M948.1,644.5L986.9,622.8" class="t"/><path d="M937.9,612.6L908.7,585.4" class="d"/><path d="M937.9,612.6L948.1,644.5" class="d"/><path d="M726.3,535.1L680.6,516.3" class="d"/><path d="M899.1,634.3L937.9,612.6" class="d"/><path d="M813.5,542.4L772.1,518.7" class="d"/><path d="M554.8,562.8L551.8,551.2" class="d"/><path d="M859,583.5L813.5,542.4" class="d"/><path d="M726.3,535.1L772.1,518.7" class="d"/><circle cx="862.1" cy="535.2" r="2.4" class="tn"/><path d="M398.4,642.2L388.2,625.3" class="d"/><circle cx="680.6" cy="516.3" r="2.4" class="tn"/><path d="M600.4,563.3L639.2,541.6" class="d"/><path d="M859,583.5L862.1,535.2" class="d"/><circle cx="466.3" cy="580.5" r="2.4" class="tn"/><path d="M600.4,563.3L590.6,529.5" class="d"/><path d="M516,584.5L466.3,580.5" class="d"/><path d="M551.8,551.2L590.6,529.5" class="t"/><path d="M774.7,564.1L813.5,542.4" class="d"/><path d="M687.5,556.8L639.2,541.6" class="d"/><path d="M398.4,642.2L437.2,620.5" class="d"/><path d="M908.7,585.4L862.1,535.2" class="t"/><circle cx="772.1" cy="518.7" r="2.4" class="tn"/><path d="M774.7,564.1L726.3,535.1" class="d"/><circle cx="516" cy="584.5" r="1.9" class="dn"/><path d="M427.5,602.2L388.2,625.3" class="t"/><circle cx="859" cy="583.5" r="1.9" class="dn"/><path d="M687.5,556.8L726.3,535.1" class="d"/><path d="M859,583.5L908.7,585.4" class="d"/><path d="M813.5,542.4L823.3,556.9" class="d"/><path d="M899.1,634.3L859,583.5" class="d"/><path d="M639.2,541.6L641.8,538" class="d"/><path d="M641.8,538L590.6,529.5" class="t"/><path d="M437.2,620.5L427.5,602.2" class="d"/><path d="M948.1,644.5L908.7,585.4" class="t"/><path d="M899.1,634.3L908.7,585.4" class="d"/><path d="M899.1,634.3L948.1,644.5" class="d"/><path d="M687.5,556.8L680.6,516.3" class="d"/><circle cx="908.7" cy="585.4" r="2.4" class="tn"/><path d="M774.7,564.1L772.1,518.7" class="d"/><circle cx="349.4" cy="647" r="2.4" class="tn"/><circle cx="948.1" cy="644.5" r="2.4" class="tn"/><path d="M516,584.5L551.8,551.2" class="d"/><circle cx="899.1" cy="634.3" r="1.9" class="dn"/><path d="M477.2,606.2L437.2,620.5" class="d"/><path d="M726.3,535.1L733.3,540.4" class="d"/><path d="M823.3,556.9L862.1,535.2" class="t"/><path d="M398.4,642.2L349.4,647" class="d"/><path d="M641.8,538L680.6,516.3" class="t"/><path d="M427.5,602.2L466.3,580.5" class="t"/><path d="M823.3,556.9L772.1,518.7" class="t"/><path d="M859,583.5L823.3,556.9" class="d"/><circle cx="600.4" cy="563.3" r="1.9" class="dn"/><path d="M733.3,540.4L680.6,516.3" class="t"/><path d="M600.4,563.3L551.8,551.2" class="d"/><path d="M477.2,606.2L466.3,580.5" class="d"/><circle cx="774.7" cy="564.1" r="1.9" class="dn"/><path d="M733.3,540.4L772.1,518.7" class="t"/><circle cx="551.8" cy="551.2" r="2.4" class="tn"/><circle cx="398.4" cy="642.2" r="1.9" class="dn"/><path d="M477.2,606.2L516,584.5" class="d"/><path d="M820.2,605.2L859,583.5" class="d"/><circle cx="687.5" cy="556.8" r="1.9" class="dn"/><path d="M859,583.5L869.9,607.1" class="d"/><path d="M774.7,564.1L823.3,556.9" class="d"/><path d="M600.4,563.3L641.8,538" class="d"/><path d="M513,572.9L466.3,580.5" class="t"/><path d="M398.4,642.2L427.5,602.2" class="d"/><path d="M869.9,607.1L908.7,585.4" class="t"/><path d="M561.6,585L516,584.5" class="d"/><path d="M310.6,668.7L349.4,647" class="t"/><path d="M909.3,666.2L948.1,644.5" class="t"/><path d="M899.1,634.3L869.9,607.1" class="d"/><path d="M899.1,634.3L909.3,666.2" class="d"/><path d="M687.5,556.8L641.8,538" class="d"/><path d="M860.3,656L899.1,634.3" class="d"/><path d="M774.7,564.1L733.3,540.4" class="d"/><path d="M516,584.5L513,572.9" class="d"/><path d="M820.2,605.2L774.7,564.1" class="d"/><path d="M687.5,556.8L733.3,540.4" class="d"/><circle cx="823.3" cy="556.9" r="2.4" class="tn"/><path d="M359.6,663.9L349.4,647" class="d"/><circle cx="641.8" cy="538" r="2.4" class="tn"/><path d="M561.6,585L600.4,563.3" class="d"/><path d="M820.2,605.2L823.3,556.9" class="d"/><circle cx="427.5" cy="602.2" r="2.4" class="tn"/><path d="M561.6,585L551.8,551.2" class="d"/><path d="M477.2,606.2L427.5,602.2" class="d"/><path d="M513,572.9L551.8,551.2" class="t"/><path d="M735.9,585.8L774.7,564.1" class="d"/><path d="M648.7,578.5L600.4,563.3" class="d"/><path d="M359.6,663.9L398.4,642.2" class="d"/><path d="M869.9,607.1L823.3,556.9" class="t"/><circle cx="733.3" cy="540.4" r="2.4" class="tn"/><path d="M735.9,585.8L687.5,556.8" class="d"/><circle cx="477.2" cy="606.2" r="1.9" class="dn"/><path d="M388.7,623.9L349.4,647" class="t"/><circle cx="820.2" cy="605.2" r="1.9" class="dn"/><path d="M648.7,578.5L687.5,556.8" class="d"/><path d="M820.2,605.2L869.9,607.1" class="d"/><path d="M774.7,564.1L784.5,578.6" class="d"/><path d="M860.3,656L820.2,605.2" class="d"/><path d="M600.4,563.3L603,559.7" class="d"/><path d="M603,559.7L551.8,551.2" class="t"/><path d="M398.4,642.2L388.7,623.9" class="d"/><path d="M909.3,666.2L869.9,607.1" class="t"/><path d="M860.3,656L869.9,607.1" class="d"/><path d="M860.3,656L909.3,666.2" class="d"/><path d="M648.7,578.5L641.8,538" class="d"/><circle cx="869.9" cy="607.1" r="2.4" class="tn"/><path d="M735.9,585.8L733.3,540.4" class="d"/><circle cx="310.6" cy="668.7" r="2.4" class="tn"/><circle cx="909.3" cy="666.2" r="2.4" class="tn"/><path d="M477.2,606.2L513,572.9" class="d"/><circle cx="860.3" cy="656" r="1.9" class="dn"/><path d="M438.4,627.9L398.4,642.2" class="d"/><path d="M687.5,556.8L694.5,562.1" class="d"/><path d="M784.5,578.6L823.3,556.9" class="t"/><path d="M359.6,663.9L310.6,668.7" class="d"/><path d="M603,559.7L641.8,538" class="t"/><path d="M388.7,623.9L427.5,602.2" class="t"/><path d="M784.5,578.6L733.3,540.4" class="t"/><path d="M820.2,605.2L784.5,578.6" class="d"/><circle cx="561.6" cy="585" r="1.9" class="dn"/><path d="M694.5,562.1L641.8,538" class="t"/><path d="M561.6,585L513,572.9" class="d"/><path d="M438.4,627.9L427.5,602.2" class="d"/><circle cx="735.9" cy="585.8" r="1.9" class="dn"/><path d="M694.5,562.1L733.3,540.4" class="t"/><circle cx="513" cy="572.9" r="2.4" class="tn"/><circle cx="359.6" cy="663.9" r="1.9" class="dn"/><path d="M438.4,627.9L477.2,606.2" class="d"/><path d="M781.4,626.9L820.2,605.2" class="d"/><circle cx="648.7" cy="578.5" r="1.9" class="dn"/><path d="M820.2,605.2L831.1,628.8" class="d"/><path d="M735.9,585.8L784.5,578.6" class="d"/><path d="M561.6,585L603,559.7" class="d"/><path d="M474.2,594.6L427.5,602.2" class="t"/><path d="M359.6,663.9L388.7,623.9" class="d"/><path d="M831.1,628.8L869.9,607.1" class="t"/><path d="M522.8,606.7L477.2,606.2" class="d"/><path d="M271.8,690.4L310.6,668.7" class="t"/><path d="M870.5,687.9L909.3,666.2" class="t"/><path d="M860.3,656L831.1,628.8" class="d"/><path d="M860.3,656L870.5,687.9" class="d"/><path d="M648.7,578.5L603,559.7" class="d"/><path d="M821.5,677.7L860.3,656" class="d"/><path d="M735.9,585.8L694.5,562.1" class="d"/><path d="M477.2,606.2L474.2,594.6" class="d"/><path d="M781.4,626.9L735.9,585.8" class="d"/><path d="M648.7,578.5L694.5,562.1" class="d"/><circle cx="784.5" cy="578.6" r="2.4" class="tn"/><path d="M320.8,685.6L310.6,668.7" class="d"/><circle cx="603" cy="559.7" r="2.4" class="tn"/><path d="M522.8,606.7L561.6,585" class="d"/><path d="M781.4,626.9L784.5,578.6" class="d"/><circle cx="388.7" cy="623.9" r="2.4" class="tn"/><path d="M522.8,606.7L513,572.9" class="d"/><path d="M438.4,627.9L388.7,623.9" class="d"/><path d="M474.2,594.6L513,572.9" class="t"/><path d="M697.1,607.5L735.9,585.8" class="d"/><path d="M609.9,600.2L561.6,585" class="d"/><path d="M320.8,685.6L359.6,663.9" class="d"/><path d="M831.1,628.8L784.5,578.6" class="t"/><circle cx="694.5" cy="562.1" r="2.4" class="tn"/><path d="M697.1,607.5L648.7,578.5" class="d"/><circle cx="438.4" cy="627.9" r="1.9" class="dn"/><path d="M349.9,645.6L310.6,668.7" class="t"/><circle cx="781.4" cy="626.9" r="1.9" class="dn"/><path d="M609.9,600.2L648.7,578.5" class="d"/><path d="M781.4,626.9L831.1,628.8" class="d"/><path d="M735.9,585.8L745.7,600.3" class="d"/><path d="M821.5,677.7L781.4,626.9" class="d"/><path d="M561.6,585L564.2,581.4" class="d"/><path d="M564.2,581.4L513,572.9" class="t"/><path d="M359.6,663.9L349.9,645.6" class="d"/><path d="M870.5,687.9L831.1,628.8" class="t"/><path d="M821.5,677.7L831.1,628.8" class="d"/><path d="M821.5,677.7L870.5,687.9" class="d"/><path d="M609.9,600.2L603,559.7" class="d"/><circle cx="831.1" cy="628.8" r="2.4" class="tn"/><path d="M697.1,607.5L694.5,562.1" class="d"/><circle cx="271.8" cy="690.4" r="2.4" class="tn"/><circle cx="870.5" cy="687.9" r="2.4" class="tn"/><path d="M438.4,627.9L474.2,594.6" class="d"/><circle cx="821.5" cy="677.7" r="1.9" class="dn"/><path d="M399.6,649.6L359.6,663.9" class="d"/><path d="M648.7,578.5L655.7,583.8" class="d"/><path d="M745.7,600.3L784.5,578.6" class="t"/><path d="M320.8,685.6L271.8,690.4" class="d"/><path d="M564.2,581.4L603,559.7" class="t"/><path d="M349.9,645.6L388.7,623.9" class="t"/><path d="M745.7,600.3L694.5,562.1" class="t"/><path d="M781.4,626.9L745.7,600.3" class="d"/><circle cx="522.8" cy="606.7" r="1.9" class="dn"/><path d="M655.7,583.8L603,559.7" class="t"/><path d="M522.8,606.7L474.2,594.6" class="d"/><path d="M399.6,649.6L388.7,623.9" class="d"/><circle cx="697.1" cy="607.5" r="1.9" class="dn"/><path d="M655.7,583.8L694.5,562.1" class="t"/><circle cx="474.2" cy="594.6" r="2.4" class="tn"/><circle cx="320.8" cy="685.6" r="1.9" class="dn"/><path d="M399.6,649.6L438.4,627.9" class="d"/><path d="M742.6,648.6L781.4,626.9" class="d"/><circle cx="609.9" cy="600.2" r="1.9" class="dn"/><path d="M781.4,626.9L792.3,650.5" class="d"/><path d="M697.1,607.5L745.7,600.3" class="d"/><path d="M522.8,606.7L564.2,581.4" class="d"/><path d="M435.4,616.3L388.7,623.9" class="t"/><path d="M320.8,685.6L349.9,645.6" class="d"/><path d="M792.3,650.5L831.1,628.8" class="t"/><path d="M484,628.4L438.4,627.9" class="d"/><path d="M831.7,709.6L870.5,687.9" class="t"/><path d="M821.5,677.7L792.3,650.5" class="d"/><path d="M821.5,677.7L831.7,709.6" class="d"/><path d="M609.9,600.2L564.2,581.4" class="d"/><path d="M782.7,699.4L821.5,677.7" class="d"/><path d="M697.1,607.5L655.7,583.8" class="d"/><path d="M438.4,627.9L435.4,616.3" class="d"/><path d="M742.6,648.6L697.1,607.5" class="d"/><path d="M609.9,600.2L655.7,583.8" class="d"/><circle cx="745.7" cy="600.3" r="2.4" class="tn"/><circle cx="564.2" cy="581.4" r="2.4" class="tn"/><path d="M484,628.4L522.8,606.7" class="d"/><path d="M742.6,648.6L745.7,600.3" class="d"/><circle cx="349.9" cy="645.6" r="2.4" class="tn"/><path d="M484,628.4L474.2,594.6" class="d"/><path d="M399.6,649.6L349.9,645.6" class="d"/><path d="M435.4,616.3L474.2,594.6" class="t"/><path d="M658.3,629.2L697.1,607.5" class="d"/><path d="M571.1,621.9L522.8,606.7" class="d"/><path d="M792.3,650.5L745.7,600.3" class="t"/><circle cx="655.7" cy="583.8" r="2.4" class="tn"/><path d="M658.3,629.2L609.9,600.2" class="d"/><circle cx="399.6" cy="649.6" r="1.9" class="dn"/><path d="M311.1,667.3L271.8,690.4" class="t"/><circle cx="742.6" cy="648.6" r="1.9" class="dn"/><path d="M571.1,621.9L609.9,600.2" class="d"/><path d="M742.6,648.6L792.3,650.5" class="d"/><path d="M697.1,607.5L706.9,622" class="d"/><path d="M782.7,699.4L742.6,648.6" class="d"/><path d="M522.8,606.7L525.4,603.1" class="d"/><path d="M525.4,603.1L474.2,594.6" class="t"/><path d="M320.8,685.6L311.1,667.3" class="d"/><path d="M831.7,709.6L792.3,650.5" class="t"/><path d="M782.7,699.4L792.3,650.5" class="d"/><path d="M782.7,699.4L831.7,709.6" class="d"/><path d="M571.1,621.9L564.2,581.4" class="d"/><circle cx="792.3" cy="650.5" r="2.4" class="tn"/><path d="M658.3,629.2L655.7,583.8" class="d"/><circle cx="831.7" cy="709.6" r="2.4" class="tn"/><path d="M399.6,649.6L435.4,616.3" class="d"/><circle cx="782.7" cy="699.4" r="1.9" class="dn"/><path d="M360.8,671.3L320.8,685.6" class="d"/><path d="M609.9,600.2L616.9,605.5" class="d"/><path d="M706.9,622L745.7,600.3" class="t"/><path d="M525.4,603.1L564.2,581.4" class="t"/><path d="M311.1,667.3L349.9,645.6" class="t"/><path d="M706.9,622L655.7,583.8" class="t"/><path d="M742.6,648.6L706.9,622" class="d"/><circle cx="484" cy="628.4" r="1.9" class="dn"/><path d="M616.9,605.5L564.2,581.4" class="t"/><path d="M484,628.4L435.4,616.3" class="d"/><path d="M360.8,671.3L349.9,645.6" class="d"/><circle cx="658.3" cy="629.2" r="1.9" class="dn"/><path d="M616.9,605.5L655.7,583.8" class="t"/><circle cx="435.4" cy="616.3" r="2.4" class="tn"/><path d="M360.8,671.3L399.6,649.6" class="d"/><path d="M703.8,670.3L742.6,648.6" class="d"/><circle cx="571.1" cy="621.9" r="1.9" class="dn"/><path d="M742.6,648.6L753.5,672.2" class="d"/><path d="M658.3,629.2L706.9,622" class="d"/><path d="M484,628.4L525.4,603.1" class="d"/><path d="M396.6,638L349.9,645.6" class="t"/><path d="M753.5,672.2L792.3,650.5" class="t"/><path d="M445.2,650.1L399.6,649.6" class="d"/><path d="M792.9,731.3L831.7,709.6" class="t"/><path d="M782.7,699.4L753.5,672.2" class="d"/><path d="M782.7,699.4L792.9,731.3" class="d"/><path d="M571.1,621.9L525.4,603.1" class="d"/><path d="M743.9,721.1L782.7,699.4" class="d"/><path d="M658.3,629.2L616.9,605.5" class="d"/><path d="M399.6,649.6L396.6,638" class="d"/><path d="M703.8,670.3L658.3,629.2" class="d"/><path d="M571.1,621.9L616.9,605.5" class="d"/><circle cx="706.9" cy="622" r="2.4" class="tn"/><circle cx="525.4" cy="603.1" r="2.4" class="tn"/><path d="M445.2,650.1L484,628.4" class="d"/><path d="M703.8,670.3L706.9,622" class="d"/><circle cx="311.1" cy="667.3" r="2.4" class="tn"/><path d="M445.2,650.1L435.4,616.3" class="d"/><path d="M360.8,671.3L311.1,667.3" class="d"/><path d="M396.6,638L435.4,616.3" class="t"/><path d="M619.5,650.9L658.3,629.2" class="d"/><path d="M532.3,643.6L484,628.4" class="d"/><path d="M753.5,672.2L706.9,622" class="t"/><circle cx="616.9" cy="605.5" r="2.4" class="tn"/><path d="M619.5,650.9L571.1,621.9" class="d"/><circle cx="360.8" cy="671.3" r="1.9" class="dn"/><circle cx="703.8" cy="670.3" r="1.9" class="dn"/><path d="M532.3,643.6L571.1,621.9" class="d"/><path d="M703.8,670.3L753.5,672.2" class="d"/><path d="M658.3,629.2L668.1,643.7" class="d"/><path d="M743.9,721.1L703.8,670.3" class="d"/><path d="M484,628.4L486.6,624.8" class="d"/><path d="M486.6,624.8L435.4,616.3" class="t"/><path d="M792.9,731.3L753.5,672.2" class="t"/><path d="M743.9,721.1L753.5,672.2" class="d"/><path d="M743.9,721.1L792.9,731.3" class="d"/><path d="M532.3,643.6L525.4,603.1" class="d"/><circle cx="753.5" cy="672.2" r="2.4" class="tn"/><path d="M619.5,650.9L616.9,605.5" class="d"/><circle cx="792.9" cy="731.3" r="2.4" class="tn"/><path d="M360.8,671.3L396.6,638" class="d"/><circle cx="743.9" cy="721.1" r="1.9" class="dn"/><path d="M571.1,621.9L578.1,627.2" class="d"/><path d="M668.1,643.7L706.9,622" class="t"/><path d="M486.6,624.8L525.4,603.1" class="t"/><path d="M668.1,643.7L616.9,605.5" class="t"/><path d="M703.8,670.3L668.1,643.7" class="d"/><circle cx="445.2" cy="650.1" r="1.9" class="dn"/><path d="M578.1,627.2L525.4,603.1" class="t"/><path d="M445.2,650.1L396.6,638" class="d"/><circle cx="619.5" cy="650.9" r="1.9" class="dn"/><path d="M578.1,627.2L616.9,605.5" class="t"/><circle cx="396.6" cy="638" r="2.4" class="tn"/><path d="M665,692L703.8,670.3" class="d"/><circle cx="532.3" cy="643.6" r="1.9" class="dn"/><path d="M703.8,670.3L714.7,693.9" class="d"/><path d="M619.5,650.9L668.1,643.7" class="d"/><path d="M445.2,650.1L486.6,624.8" class="d"/><path d="M357.8,659.7L311.1,667.3" class="t"/><path d="M714.7,693.9L753.5,672.2" class="t"/><path d="M406.4,671.8L360.8,671.3" class="d"/><path d="M754.1,753L792.9,731.3" class="t"/><path d="M743.9,721.1L714.7,693.9" class="d"/><path d="M743.9,721.1L754.1,753" class="d"/><path d="M532.3,643.6L486.6,624.8" class="d"/><path d="M705.1,742.8L743.9,721.1" class="d"/><path d="M619.5,650.9L578.1,627.2" class="d"/><path d="M360.8,671.3L357.8,659.7" class="d"/><path d="M665,692L619.5,650.9" class="d"/><path d="M532.3,643.6L578.1,627.2" class="d"/><circle cx="668.1" cy="643.7" r="2.4" class="tn"/><circle cx="486.6" cy="624.8" r="2.4" class="tn"/><path d="M406.4,671.8L445.2,650.1" class="d"/><path d="M665,692L668.1,643.7" class="d"/><path d="M406.4,671.8L396.6,638" class="d"/><path d="M357.8,659.7L396.6,638" class="t"/><path d="M580.7,672.6L619.5,650.9" class="d"/><path d="M493.5,665.3L445.2,650.1" class="d"/><path d="M714.7,693.9L668.1,643.7" class="t"/><circle cx="578.1" cy="627.2" r="2.4" class="tn"/><path d="M580.7,672.6L532.3,643.6" class="d"/><circle cx="665" cy="692" r="1.9" class="dn"/><path d="M493.5,665.3L532.3,643.6" class="d"/><path d="M665,692L714.7,693.9" class="d"/><path d="M619.5,650.9L629.3,665.4" class="d"/><path d="M705.1,742.8L665,692" class="d"/><path d="M445.2,650.1L447.8,646.5" class="d"/><path d="M447.8,646.5L396.6,638" class="t"/><path d="M754.1,753L714.7,693.9" class="t"/><path d="M705.1,742.8L714.7,693.9" class="d"/><path d="M705.1,742.8L754.1,753" class="d"/><path d="M493.5,665.3L486.6,624.8" class="d"/><circle cx="714.7" cy="693.9" r="2.4" class="tn"/><path d="M580.7,672.6L578.1,627.2" class="d"/><circle cx="754.1" cy="753" r="2.4" class="tn"/><circle cx="705.1" cy="742.8" r="1.9" class="dn"/><path d="M532.3,643.6L539.3,648.9" class="d"/><path d="M629.3,665.4L668.1,643.7" class="t"/><path d="M447.8,646.5L486.6,624.8" class="t"/><path d="M629.3,665.4L578.1,627.2" class="t"/><path d="M665,692L629.3,665.4" class="d"/><circle cx="406.4" cy="671.8" r="1.9" class="dn"/><path d="M539.3,648.9L486.6,624.8" class="t"/><path d="M406.4,671.8L357.8,659.7" class="d"/><circle cx="580.7" cy="672.6" r="1.9" class="dn"/><path d="M539.3,648.9L578.1,627.2" class="t"/><circle cx="357.8" cy="659.7" r="2.4" class="tn"/><path d="M626.2,713.7L665,692" class="d"/><circle cx="493.5" cy="665.3" r="1.9" class="dn"/><path d="M665,692L675.9,715.6" class="d"/><path d="M580.7,672.6L629.3,665.4" class="d"/><path d="M406.4,671.8L447.8,646.5" class="d"/><path d="M675.9,715.6L714.7,693.9" class="t"/><path d="M715.3,774.7L754.1,753" class="t"/><path d="M705.1,742.8L675.9,715.6" class="d"/><path d="M705.1,742.8L715.3,774.7" class="d"/><path d="M493.5,665.3L447.8,646.5" class="d"/><path d="M666.3,764.5L705.1,742.8" class="d"/><path d="M580.7,672.6L539.3,648.9" class="d"/><path d="M626.2,713.7L580.7,672.6" class="d"/><path d="M493.5,665.3L539.3,648.9" class="d"/><circle cx="629.3" cy="665.4" r="2.4" class="tn"/><circle cx="447.8" cy="646.5" r="2.4" class="tn"/><path d="M626.2,713.7L629.3,665.4" class="d"/><path d="M541.9,694.3L580.7,672.6" class="d"/><path d="M454.7,687L406.4,671.8" class="d"/><path d="M675.9,715.6L629.3,665.4" class="t"/><circle cx="539.3" cy="648.9" r="2.4" class="tn"/><path d="M541.9,694.3L493.5,665.3" class="d"/><circle cx="626.2" cy="713.7" r="1.9" class="dn"/><path d="M454.7,687L493.5,665.3" class="d"/><path d="M626.2,713.7L675.9,715.6" class="d"/><path d="M580.7,672.6L590.5,687.1" class="d"/><path d="M666.3,764.5L626.2,713.7" class="d"/><path d="M406.4,671.8L409,668.2" class="d"/><path d="M409,668.2L357.8,659.7" class="t"/><path d="M715.3,774.7L675.9,715.6" class="t"/><path d="M666.3,764.5L675.9,715.6" class="d"/><path d="M666.3,764.5L715.3,774.7" class="d"/><path d="M454.7,687L447.8,646.5" class="d"/><circle cx="675.9" cy="715.6" r="2.4" class="tn"/><path d="M541.9,694.3L539.3,648.9" class="d"/><circle cx="715.3" cy="774.7" r="2.4" class="tn"/><circle cx="666.3" cy="764.5" r="1.9" class="dn"/><path d="M493.5,665.3L500.5,670.6" class="d"/><path d="M590.5,687.1L629.3,665.4" class="t"/><path d="M409,668.2L447.8,646.5" class="t"/><path d="M590.5,687.1L539.3,648.9" class="t"/><path d="M626.2,713.7L590.5,687.1" class="d"/><path d="M500.5,670.6L447.8,646.5" class="t"/><circle cx="541.9" cy="694.3" r="1.9" class="dn"/><path d="M500.5,670.6L539.3,648.9" class="t"/><path d="M587.4,735.4L626.2,713.7" class="d"/><circle cx="454.7" cy="687" r="1.9" class="dn"/><path d="M626.2,713.7L637.1,737.3" class="d"/><path d="M541.9,694.3L590.5,687.1" class="d"/><path d="M637.1,737.3L675.9,715.6" class="t"/><path d="M676.5,796.4L715.3,774.7" class="t"/><path d="M666.3,764.5L637.1,737.3" class="d"/><path d="M666.3,764.5L676.5,796.4" class="d"/><path d="M454.7,687L409,668.2" class="d"/><path d="M627.5,786.2L666.3,764.5" class="d"/><path d="M541.9,694.3L500.5,670.6" class="d"/><path d="M587.4,735.4L541.9,694.3" class="d"/><path d="M454.7,687L500.5,670.6" class="d"/><circle cx="590.5" cy="687.1" r="2.4" class="tn"/><circle cx="409" cy="668.2" r="2.4" class="tn"/><path d="M587.4,735.4L590.5,687.1" class="d"/><path d="M503.1,716L541.9,694.3" class="d"/><path d="M637.1,737.3L590.5,687.1" class="t"/><circle cx="500.5" cy="670.6" r="2.4" class="tn"/><path d="M503.1,716L454.7,687" class="d"/><circle cx="587.4" cy="735.4" r="1.9" class="dn"/><path d="M587.4,735.4L637.1,737.3" class="d"/><path d="M541.9,694.3L551.7,708.8" class="d"/><path d="M627.5,786.2L587.4,735.4" class="d"/><path d="M676.5,796.4L637.1,737.3" class="t"/><path d="M627.5,786.2L637.1,737.3" class="d"/><path d="M627.5,786.2L676.5,796.4" class="d"/><circle cx="637.1" cy="737.3" r="2.4" class="tn"/><path d="M503.1,716L500.5,670.6" class="d"/><circle cx="676.5" cy="796.4" r="2.4" class="tn"/><circle cx="627.5" cy="786.2" r="1.9" class="dn"/><path d="M454.7,687L461.7,692.3" class="d"/><path d="M551.7,708.8L590.5,687.1" class="t"/><path d="M551.7,708.8L500.5,670.6" class="t"/><path d="M587.4,735.4L551.7,708.8" class="d"/><path d="M461.7,692.3L409,668.2" class="t"/><circle cx="503.1" cy="716" r="1.9" class="dn"/><path d="M461.7,692.3L500.5,670.6" class="t"/><path d="M548.6,757.1L587.4,735.4" class="d"/><path d="M587.4,735.4L598.3,759" class="d"/><path d="M503.1,716L551.7,708.8" class="d"/><path d="M598.3,759L637.1,737.3" class="t"/><path d="M637.7,818.1L676.5,796.4" class="t"/><path d="M627.5,786.2L598.3,759" class="d"/><path d="M627.5,786.2L637.7,818.1" class="d"/><path d="M588.7,807.9L627.5,786.2" class="d"/><path d="M503.1,716L461.7,692.3" class="d"/><path d="M548.6,757.1L503.1,716" class="d"/><circle cx="551.7" cy="708.8" r="2.4" class="tn"/><path d="M548.6,757.1L551.7,708.8" class="d"/><path d="M598.3,759L551.7,708.8" class="t"/><circle cx="461.7" cy="692.3" r="2.4" class="tn"/><circle cx="548.6" cy="757.1" r="1.9" class="dn"/><path d="M548.6,757.1L598.3,759" class="d"/><path d="M503.1,716L512.9,730.5" class="d"/><path d="M588.7,807.9L548.6,757.1" class="d"/><path d="M637.7,818.1L598.3,759" class="t"/><path d="M588.7,807.9L598.3,759" class="d"/><path d="M588.7,807.9L637.7,818.1" class="d"/><circle cx="598.3" cy="759" r="2.4" class="tn"/><circle cx="637.7" cy="818.1" r="2.4" class="tn"/><circle cx="588.7" cy="807.9" r="1.9" class="dn"/><path d="M512.9,730.5L551.7,708.8" class="t"/><path d="M512.9,730.5L461.7,692.3" class="t"/><path d="M548.6,757.1L512.9,730.5" class="d"/><path d="M548.6,757.1L559.5,780.7" class="d"/><path d="M559.5,780.7L598.3,759" class="t"/><path d="M598.9,839.8L637.7,818.1" class="t"/><path d="M588.7,807.9L559.5,780.7" class="d"/><path d="M588.7,807.9L598.9,839.8" class="d"/><circle cx="512.9" cy="730.5" r="2.4" class="tn"/><path d="M559.5,780.7L512.9,730.5" class="t"/><path d="M598.9,839.8L559.5,780.7" class="t"/><circle cx="559.5" cy="780.7" r="2.4" class="tn"/><circle cx="598.9" cy="839.8" r="2.4" class="tn"/><polygon class="sb" points="273.6,594.4 277.8,592 277.8,605 273.6,607.4"/><polygon class="sb" points="281.9,589.7 286.1,587.4 286.1,600.4 281.9,602.7"/><polygon class="sb" points="290.2,585.1 294.4,582.7 294.4,595.7 290.2,598.1"/><polygon class="sb" points="298.5,580.4 302.7,578.1 302.7,591.1 298.5,593.4"/><polygon class="sb" points="306.8,575.8 311,573.4 311,586.4 306.8,588.8"/><polygon class="sb" points="315.1,571.1 319.3,568.7 319.3,581.7 315.1,584.1"/><polygon class="sb" points="323.4,566.4 327.6,564.1 327.6,577.1 323.4,579.4"/><polygon class="sb" points="331.7,561.8 335.9,559.4 335.9,572.4 331.7,574.8"/><polygon class="sb" points="340,557.1 344.2,554.8 344.2,567.8 340,570.1"/><polygon class="sb" points="348.3,552.5 352.5,550.1 352.5,563.1 348.3,565.5"/><polygon class="sb" points="356.6,547.8 360.8,545.5 360.8,558.5 356.6,560.8"/><polygon class="sb" points="364.9,543.2 369.1,540.8 369.1,553.8 364.9,556.2"/><polygon class="sb" points="373.2,538.5 377.4,536.1 377.4,549.1 373.2,551.5"/><polygon class="sb" points="381.5,533.8 385.7,531.5 385.7,544.5 381.5,546.8"/><polygon class="sb" points="389.8,529.2 394,526.8 394,539.8 389.8,542.2"/><polygon class="sb" points="398.1,524.5 402.3,522.2 402.3,535.2 398.1,537.5"/><polygon class="sb" points="406.4,519.9 410.6,517.5 410.6,530.5 406.4,532.9"/><polygon class="sb" points="414.7,515.2 418.9,512.8 418.9,525.8 414.7,528.2"/><polygon class="sb" points="423,510.5 427.2,508.2 427.2,521.2 423,523.5"/><polygon class="sb" points="431.3,505.9 435.5,503.5 435.5,516.5 431.3,518.9"/><polygon class="sb" points="439.6,501.2 443.8,498.9 443.8,511.9 439.6,514.2"/><polygon class="sb" points="447.9,496.6 452.1,494.2 452.1,507.2 447.9,509.6"/><polygon class="sb" points="456.2,491.9 460.4,489.6 460.4,502.6 456.2,504.9"/><polygon class="sb" points="464.5,487.2 468.7,484.9 468.7,497.9 464.5,500.2"/><polygon class="sb" points="472.8,482.6 477,480.2 477,493.2 472.8,495.6"/><polygon class="sb" points="481.1,477.9 485.3,475.6 485.3,488.6 481.1,490.9"/><polygon class="sb" points="489.4,473.3 493.6,470.9 493.6,483.9 489.4,486.3"/><polygon class="sb" points="497.7,468.6 501.9,466.3 501.9,479.3 497.7,481.6"/><polygon class="sb" points="506,464 510.2,461.6 510.2,474.6 506,477"/><polygon class="sb" points="514.3,459.3 518.5,456.9 518.5,469.9 514.3,472.3"/><polygon class="sb" points="522.6,454.6 526.8,452.3 526.8,465.3 522.6,467.6"/><polygon class="sb" points="530.9,450 535.1,447.6 535.1,460.6 530.9,463"/><polygon class="sb" points="539.2,445.3 543.4,443 543.4,456 539.2,458.3"/><polygon class="sb" points="547.5,440.7 551.7,438.3 551.7,451.3 547.5,453.7"/><polygon class="sb" points="555.8,436 560,433.6 560,446.6 555.8,449"/><polygon class="sb" points="564.1,431.3 568.3,429 568.3,442 564.1,444.3"/><polygon class="sb" points="572.4,426.7 576.6,424.3 576.6,437.3 572.4,439.7"/><polygon class="sb" points="580.7,422 584.9,419.7 584.9,432.7 580.7,435"/><polygon class="sb" points="589,417.4 593.2,415 593.2,428 589,430.4"/><polygon class="sb" points="597.3,412.7 601.5,410.4 601.5,423.4 597.3,425.7"/><polygon class="sb" points="605.6,408.1 609.8,405.7 609.8,418.7 605.6,421.1"/><polygon class="sb" points="613.9,403.4 618.1,401 618.1,414 613.9,416.4"/><polygon class="sb" points="622.2,398.7 626.4,396.4 626.4,409.4 622.2,411.7"/><polygon class="sb" points="630.5,394.1 634.7,391.7 634.7,404.7 630.5,407.1"/><polygon class="sb" points="638.8,389.4 643,387.1 643,400.1 638.8,402.4"/><polygon class="sb" points="647.1,384.8 651.3,382.4 651.3,395.4 647.1,397.8"/><polygon class="sb" points="655.4,380.1 659.6,377.7 659.6,390.7 655.4,393.1"/><polygon class="sb" points="661.1,376.9 665.3,378.8 665.3,391.8 661.1,389.9"/><polygon class="sb" points="669.4,380.7 673.6,382.6 673.6,395.6 669.4,393.7"/><polygon class="sb" points="677.7,384.4 681.9,386.3 681.9,399.3 677.7,397.4"/><polygon class="sb" points="686,388.2 690.2,390.1 690.2,403.1 686,401.2"/><polygon class="sb" points="694.3,391.9 698.5,393.8 698.5,406.8 694.3,404.9"/><polygon class="sb" points="702.6,395.7 706.8,397.6 706.8,410.6 702.6,408.7"/><polygon class="sb" points="710.9,399.4 715.1,401.3 715.1,414.3 710.9,412.4"/><polygon class="sb" points="719.2,403.2 723.4,405.1 723.4,418.1 719.2,416.2"/><polygon class="sb" points="727.5,406.9 731.7,408.8 731.7,421.8 727.5,419.9"/><polygon class="sb" points="735.8,410.7 740,412.6 740,425.6 735.8,423.7"/><polygon class="sb" points="744.1,414.4 748.3,416.3 748.3,429.3 744.1,427.4"/><polygon class="sb" points="752.4,418.2 756.6,420.1 756.6,433.1 752.4,431.2"/><polygon class="sb" points="760.7,421.9 764.9,423.8 764.9,436.8 760.7,434.9"/><polygon class="sb" points="769,425.7 773.2,427.6 773.2,440.6 769,438.7"/><polygon class="sb" points="777.3,429.4 781.5,431.3 781.5,444.3 777.3,442.4"/><polygon class="sb" points="785.6,433.2 789.8,435.1 789.8,448.1 785.6,446.2"/><polygon class="sb" points="793.9,436.9 798.1,438.8 798.1,451.8 793.9,449.9"/><polygon class="sb" points="802.2,440.7 806.4,442.6 806.4,455.6 802.2,453.7"/><polygon class="sb" points="810.5,444.4 814.7,446.3 814.7,459.3 810.5,457.4"/><polygon class="sb" points="818.8,448.2 823,450.1 823,463.1 818.8,461.2"/><polygon class="sb" points="827.1,452 831.3,453.9 831.3,466.9 827.1,465"/><polygon class="sb" points="835.4,455.7 839.6,457.6 839.6,470.6 835.4,468.7"/><polygon class="sb" points="843.7,459.5 847.9,461.4 847.9,474.4 843.7,472.5"/><polygon class="sb" points="852,463.2 856.2,465.1 856.2,478.1 852,476.2"/><polygon class="sb" points="860.3,467 864.5,468.9 864.5,481.9 860.3,480"/><polygon class="sb" points="868.6,470.7 872.8,472.6 872.8,485.6 868.6,483.7"/><polygon class="sb" points="876.9,474.5 881.1,476.4 881.1,489.4 876.9,487.5"/><polygon class="sb" points="885.2,478.2 889.4,480.1 889.4,493.1 885.2,491.2"/><polygon class="sb" points="893.5,482 897.7,483.9 897.7,496.9 893.5,495"/><polygon class="sb" points="901.8,485.7 906,487.6 906,500.6 901.8,498.7"/><polygon class="sb" points="910.1,489.5 914.3,491.4 914.3,504.4 910.1,502.5"/><polygon class="sb" points="918.4,493.2 922.6,495.1 922.6,508.1 918.4,506.2"/><polygon class="sb" points="926.7,497 930.9,498.9 930.9,511.9 926.7,510"/><polygon class="sb" points="935,500.7 939.2,502.6 939.2,515.6 935,513.7"/><polygon class="sb" points="943.3,504.5 947.5,506.4 947.5,519.4 943.3,517.5"/><polygon class="sb" points="951.6,508.2 955.8,510.1 955.8,523.1 951.6,521.2"/><polygon class="sb" points="959.9,512 964.1,513.9 964.1,526.9 959.9,525"/><polygon class="sb" points="968.2,515.7 972.4,517.6 972.4,530.6 968.2,528.7"/><polygon class="sb" points="976.5,519.5 980.7,521.4 980.7,534.4 976.5,532.5"/><polygon class="sb" points="984.8,523.3 986.9,524.2 986.9,537.2 984.8,536.3"/><polygon points="661.1,376.9 986.9,524.2 599.4,741.7 273.6,594.4" fill="#b8614d" fill-opacity=".6"/><g clip-path="url(#cp)"><polygon points="598.9,839.8 559.5,780.7 512.9,730.5 461.7,692.3 409,668.2 357.8,659.7 311.1,667.3 271.8,690.4 659.8,473.4 659.8,473.4 699.1,450.3 745.8,442.7 797,451.2 849.7,475.3 900.9,513.5 947.5,563.7 986.9,622.8" fill="#5a3040" fill-opacity=".13"/></g><polygon class="sy" points="273.6,594.4 277.8,596.3 277.8,609.3 273.6,607.4"/><polygon class="sy" points="281.9,598.2 286.1,600.1 286.1,613.1 281.9,611.2"/><polygon class="sy" points="290.2,601.9 294.4,603.8 294.4,616.8 290.2,614.9"/><polygon class="sy" points="298.5,605.7 302.7,607.6 302.7,620.6 298.5,618.7"/><polygon class="sy" points="306.8,609.4 311,611.3 311,624.3 306.8,622.4"/><polygon class="sy" points="315.1,613.2 319.3,615.1 319.3,628.1 315.1,626.2"/><polygon class="sy" points="323.4,616.9 327.6,618.8 327.6,631.8 323.4,629.9"/><polygon class="sy" points="331.7,620.7 335.9,622.6 335.9,635.6 331.7,633.7"/><polygon class="sy" points="340,624.4 344.2,626.3 344.2,639.3 340,637.4"/><polygon class="sy" points="348.3,628.2 352.5,630.1 352.5,643.1 348.3,641.2"/><polygon class="sy" points="356.6,631.9 360.8,633.8 360.8,646.8 356.6,644.9"/><polygon class="sy" points="364.9,635.7 369.1,637.6 369.1,650.6 364.9,648.7"/><polygon class="sy" points="373.2,639.4 377.4,641.3 377.4,654.3 373.2,652.4"/><polygon class="sy" points="381.5,643.2 385.7,645.1 385.7,658.1 381.5,656.2"/><polygon class="sy" points="389.8,646.9 394,648.8 394,661.8 389.8,659.9"/><polygon class="sy" points="398.1,650.7 402.3,652.6 402.3,665.6 398.1,663.7"/><polygon class="sy" points="406.4,654.4 410.6,656.3 410.6,669.3 406.4,667.4"/><polygon class="sy" points="414.7,658.2 418.9,660.1 418.9,673.1 414.7,671.2"/><polygon class="sy" points="423,661.9 427.2,663.8 427.2,676.8 423,674.9"/><polygon class="sy" points="431.3,665.7 435.5,667.6 435.5,680.6 431.3,678.7"/><polygon class="sy" points="439.6,669.5 443.8,671.4 443.8,684.4 439.6,682.5"/><polygon class="sy" points="447.9,673.2 452.1,675.1 452.1,688.1 447.9,686.2"/><polygon class="sy" points="456.2,677 460.4,678.9 460.4,691.9 456.2,690"/><polygon class="sy" points="464.5,680.7 468.7,682.6 468.7,695.6 464.5,693.7"/><polygon class="sy" points="472.8,684.5 477,686.4 477,699.4 472.8,697.5"/><polygon class="sy" points="481.1,688.2 485.3,690.1 485.3,703.1 481.1,701.2"/><polygon class="sy" points="489.4,692 493.6,693.9 493.6,706.9 489.4,705"/><polygon class="sy" points="497.7,695.7 501.9,697.6 501.9,710.6 497.7,708.7"/><polygon class="sy" points="506,699.5 510.2,701.4 510.2,714.4 506,712.5"/><polygon class="sy" points="514.3,703.2 518.5,705.1 518.5,718.1 514.3,716.2"/><polygon class="sy" points="522.6,707 526.8,708.9 526.8,721.9 522.6,720"/><polygon class="sy" points="530.9,710.7 535.1,712.6 535.1,725.6 530.9,723.7"/><polygon class="sy" points="539.2,714.5 543.4,716.4 543.4,729.4 539.2,727.5"/><polygon class="sy" points="547.5,718.2 551.7,720.1 551.7,733.1 547.5,731.2"/><polygon class="sy" points="555.8,722 560,723.9 560,736.9 555.8,735"/><polygon class="sy" points="564.1,725.7 568.3,727.6 568.3,740.6 564.1,738.7"/><polygon class="sy" points="572.4,729.5 576.6,731.4 576.6,744.4 572.4,742.5"/><polygon class="sy" points="580.7,733.2 584.9,735.1 584.9,748.1 580.7,746.2"/><polygon class="sy" points="589,737 593.2,738.9 593.2,751.9 589,750"/><polygon class="sy" points="597.3,740.8 599.4,741.7 599.4,754.7 597.3,753.8"/><polygon class="sy" points="599.4,741.7 603.6,739.3 603.6,752.3 599.4,754.7"/><polygon class="sy" points="607.7,737 611.9,734.7 611.9,747.7 607.7,750"/><polygon class="sy" points="616,732.4 620.2,730 620.2,743 616,745.4"/><polygon class="sy" points="624.3,727.7 628.5,725.4 628.5,738.4 624.3,740.7"/><polygon class="sy" points="632.6,723.1 636.8,720.7 636.8,733.7 632.6,736.1"/><polygon class="sy" points="640.9,718.4 645.1,716 645.1,729 640.9,731.4"/><polygon class="sy" points="649.2,713.7 653.4,711.4 653.4,724.4 649.2,726.7"/><polygon class="sy" points="657.5,709.1 661.7,706.7 661.7,719.7 657.5,722.1"/><polygon class="sy" points="665.8,704.4 670,702.1 670,715.1 665.8,717.4"/><polygon class="sy" points="674.1,699.8 678.3,697.4 678.3,710.4 674.1,712.8"/><polygon class="sy" points="682.4,695.1 686.6,692.8 686.6,705.8 682.4,708.1"/><polygon class="sy" points="690.7,690.5 694.9,688.1 694.9,701.1 690.7,703.5"/><polygon class="sy" points="699,685.8 703.2,683.4 703.2,696.4 699,698.8"/><polygon class="sy" points="707.3,681.1 711.5,678.8 711.5,691.8 707.3,694.1"/><polygon class="sy" points="715.6,676.5 719.8,674.1 719.8,687.1 715.6,689.5"/><polygon class="sy" points="723.9,671.8 728.1,669.5 728.1,682.5 723.9,684.8"/><polygon class="sy" points="732.2,667.2 736.4,664.8 736.4,677.8 732.2,680.2"/><polygon class="sy" points="740.5,662.5 744.7,660.1 744.7,673.1 740.5,675.5"/><polygon class="sy" points="748.8,657.8 753,655.5 753,668.5 748.8,670.8"/><polygon class="sy" points="757.1,653.2 761.3,650.8 761.3,663.8 757.1,666.2"/><polygon class="sy" points="765.4,648.5 769.6,646.2 769.6,659.2 765.4,661.5"/><polygon class="sy" points="773.7,643.9 777.9,641.5 777.9,654.5 773.7,656.9"/><polygon class="sy" points="782,639.2 786.2,636.9 786.2,649.9 782,652.2"/><polygon class="sy" points="790.3,634.5 794.5,632.2 794.5,645.2 790.3,647.5"/><polygon class="sy" points="798.6,629.9 802.8,627.5 802.8,640.5 798.6,642.9"/><polygon class="sy" points="806.9,625.2 811.1,622.9 811.1,635.9 806.9,638.2"/><polygon class="sy" points="815.2,620.6 819.4,618.2 819.4,631.2 815.2,633.6"/><polygon class="sy" points="823.5,615.9 827.7,613.6 827.7,626.6 823.5,628.9"/><polygon class="sy" points="831.8,611.3 836,608.9 836,621.9 831.8,624.3"/><polygon class="sy" points="840.1,606.6 844.3,604.2 844.3,617.2 840.1,619.6"/><polygon class="sy" points="848.4,601.9 852.6,599.6 852.6,612.6 848.4,614.9"/><polygon class="sy" points="856.7,597.3 860.9,594.9 860.9,607.9 856.7,610.3"/><polygon class="sy" points="865,592.6 869.2,590.3 869.2,603.3 865,605.6"/><polygon class="sy" points="873.3,588 877.5,585.6 877.5,598.6 873.3,601"/><polygon class="sy" points="881.6,583.3 885.8,580.9 885.8,593.9 881.6,596.3"/><polygon class="sy" points="889.9,578.6 894.1,576.3 894.1,589.3 889.9,591.6"/><polygon class="sy" points="898.2,574 902.4,571.6 902.4,584.6 898.2,587"/><polygon class="sy" points="906.5,569.3 910.7,567 910.7,580 906.5,582.3"/><polygon class="sy" points="914.8,564.7 919,562.3 919,575.3 914.8,577.7"/><polygon class="sy" points="923.1,560 927.3,557.7 927.3,570.7 923.1,573"/><polygon class="sy" points="931.4,555.4 935.6,553 935.6,566 931.4,568.4"/><polygon class="sy" points="939.7,550.7 943.9,548.3 943.9,561.3 939.7,563.7"/><polygon class="sy" points="948,546 952.2,543.7 952.2,556.7 948,559"/><polygon class="sy" points="956.3,541.4 960.5,539 960.5,552 956.3,554.4"/><polygon class="sy" points="964.6,536.7 968.8,534.4 968.8,547.4 964.6,549.7"/><polygon class="sy" points="972.9,532.1 977.1,529.7 977.1,542.7 972.9,545.1"/><polygon class="sy" points="981.2,527.4 985.4,525 985.4,538 981.2,540.4"/><text transform="translate(627,556) rotate(-29)" font-size="6.5" fill="#7a1408" font-family="Liberation Sans,sans-serif">1.1835 тс/м2</text><circle cx="579.5" cy="628" r="1.6" fill="#c020c0"/></g></svg>
<svg class="abs" style="left:1035px;top:192px" width="857" height="816" viewBox="1035 192 857 816"><style>.b{stroke:#000;stroke-width:2.3;fill:none;stroke-linecap:round}.y{stroke:#f5be0b;stroke-width:3.2;fill:none}polygon{shape-rendering:crispEdges}.lt{font-family:"Liberation Sans",sans-serif;font-style:italic;fill:#1c1c6e}</style><clipPath id="cr"><rect x="1035" y="192" width="857" height="816"/></clipPath><g clip-path="url(#cr)"><polygon fill="#f5be0b" points="1440.1,371.6 1442.7,367.6 1445.4,364.3 1445.4,368.3 1440.1,371.6"/><polygon fill="#eda55d" points="1445.4,364.3 1448.9,360.3 1452.4,356.6 1455.9,353.2 1455.9,361.6 1445.4,368.3"/><polygon fill="#e8900a" points="1455.9,353.2 1459.4,350.1 1463,347.3 1466.5,344.9 1470,342.9 1473.5,341.2 1477,339.8 1477,348.3 1455.9,361.6"/><polygon fill="#eda55d" points="1477,339.8 1480.6,338.8 1484.1,338.1 1487.6,337.7 1487.6,341.6 1477,348.3"/><polygon fill="#f5be0b" points="1487.6,337.7 1490.2,337.7 1492.9,338.3 1492.9,338.3 1487.6,341.6"/><path d="M1440.1,371.6L1492.9,338.3" class="b"/><path d="M1440.1,371.6L1445.4,368.3" class="y"/><path d="M1492.9,338.3L1487.6,341.6" class="y"/><path d="M1504.5,365.2L1492.9,338.3" class="b"/><polygon fill="#f5be0b" points="1492.9,338.3 1495.4,334.6 1497.9,331.7 1497.9,336 1492.9,338.3"/><polygon fill="#e8900a" points="1497.9,331.7 1501.1,328.3 1504.2,325.3 1507.4,322.6 1510.5,320.2 1510.5,330.2 1497.9,336"/><polygon fill="#e07b63" points="1510.5,320.2 1513.9,317.9 1517.2,316.1 1520.6,314.7 1523.9,313.6 1527.3,312.9 1530.6,312.6 1530.6,320.9 1510.5,330.2"/><polygon fill="#eda55d" points="1530.6,312.6 1533.1,312.6 1535.7,312.8 1538.2,313.2 1538.2,317.5 1530.6,320.9"/><polygon fill="#f5be0b" points="1538.2,313.2 1540.7,313.8 1543.2,315.1 1543.2,315.1 1538.2,317.5"/><path d="M1492.9,338.3L1543.2,315.1" class="b"/><path d="M1492.9,338.3L1497.9,336" class="y"/><path d="M1543.2,315.1L1538.2,317.5" class="y"/><path d="M1504.5,365.2L1440.1,371.6" class="b"/><polygon fill="#f5be0b" points="1387.3,404.9 1389.9,400.9 1392.6,397.6 1392.6,401.6 1387.3,404.9"/><polygon fill="#eda55d" points="1392.6,397.6 1396.1,393.6 1399.6,389.9 1403.1,386.5 1403.1,394.9 1392.6,401.6"/><polygon fill="#e8900a" points="1403.1,386.5 1406.6,383.4 1410.2,380.6 1413.7,378.2 1417.2,376.2 1420.7,374.5 1424.2,373.1 1424.2,381.6 1403.1,394.9"/><polygon fill="#eda55d" points="1424.2,373.1 1427.8,372.1 1431.3,371.4 1434.8,371 1434.8,374.9 1424.2,381.6"/><polygon fill="#f5be0b" points="1434.8,371 1437.4,371 1440.1,371.6 1440.1,371.6 1434.8,374.9"/><path d="M1387.3,404.9L1440.1,371.6" class="b"/><path d="M1387.3,404.9L1392.6,401.6" class="y"/><path d="M1440.1,371.6L1434.8,374.9" class="y"/><path d="M1504.5,365.2L1543.2,315.1" class="b"/><path d="M1451.7,398.5L1440.1,371.6" class="b"/><path d="M1451.7,398.5L1504.5,365.2" class="b"/><polygon fill="#f5be0b" points="1440.1,371.6 1442.1,367.4 1444.1,364.1 1444.1,369.7 1440.1,371.6"/><polygon fill="#e07b63" points="1444.1,364.1 1446.9,360.1 1449.6,356.5 1452.4,353.2 1455.2,350.3 1455.2,364.6 1444.1,369.7"/><polygon fill="#d9640a" points="1455.2,350.3 1458.3,347.5 1461.5,345.1 1464.6,343.3 1467.8,342 1467.8,358.9 1455.2,364.6"/><polygon fill="#c8320a" points="1467.8,342 1470.7,341.3 1473.5,341 1476.4,341.1 1479.3,341.7 1479.3,353.5 1467.8,358.9"/><polygon fill="#e8900a" points="1479.3,341.7 1482.9,342.9 1486.4,344.7 1486.4,350.3 1479.3,353.5"/><polygon fill="#f5be0b" points="1486.4,344.7 1488.4,346.1 1490.4,348.4 1490.4,348.4 1486.4,350.3"/><path d="M1440.1,371.6L1490.4,348.4" class="b"/><path d="M1440.1,371.6L1445.1,369.3" class="y"/><path d="M1490.4,348.4L1485.4,350.8" class="y"/><path d="M1504.5,365.2L1490.4,348.4" class="b"/><path d="M1556.3,353.5L1504.5,365.2" class="b"/><path d="M1451.7,398.5L1387.3,404.9" class="b"/><polygon fill="#f5be0b" points="1490.4,348.4 1492.3,344 1494.1,340.4 1494.1,346.1 1490.4,348.4"/><polygon fill="#e8900a" points="1494.1,340.4 1497.5,334.5 1501,329.2 1501,341.8 1494.1,346.1"/><polygon fill="#d9640a" points="1501,329.2 1503.8,325.3 1506.6,321.7 1509.4,318.6 1509.4,336.5 1501,341.8"/><polygon fill="#c8320a" points="1509.4,318.6 1513.1,315.2 1516.8,312.5 1520.5,310.5 1524.2,309.3 1524.2,327.1 1509.4,336.5"/><polygon fill="#d9640a" points="1524.2,309.3 1527,308.9 1529.8,308.8 1532.6,309.2 1532.6,321.8 1524.2,327.1"/><polygon fill="#e8900a" points="1532.6,309.2 1536.1,310.2 1539.5,311.8 1539.5,317.5 1532.6,321.8"/><polygon fill="#f5be0b" points="1539.5,311.8 1541.4,313 1543.2,315.1 1543.2,315.1 1539.5,317.5"/><path d="M1490.4,348.4L1543.2,315.1" class="b"/><path d="M1490.4,348.4L1495.7,345.1" class="y"/><path d="M1543.2,315.1L1537.9,318.5" class="y"/><path d="M1556.3,353.5L1543.2,315.1" class="b"/><polygon fill="#f5be0b" points="1334.5,438.2 1337.1,434.2 1339.8,430.9 1339.8,434.9 1334.5,438.2"/><polygon fill="#eda55d" points="1339.8,430.9 1343.3,426.9 1346.8,423.2 1350.3,419.8 1350.3,428.2 1339.8,434.9"/><polygon fill="#e8900a" points="1350.3,419.8 1353.8,416.7 1357.4,413.9 1360.9,411.5 1364.4,409.5 1367.9,407.8 1371.4,406.4 1371.4,414.9 1350.3,428.2"/><polygon fill="#eda55d" points="1371.4,406.4 1375,405.4 1378.5,404.7 1382,404.3 1382,408.2 1371.4,414.9"/><polygon fill="#f5be0b" points="1382,404.3 1384.6,404.3 1387.3,404.9 1387.3,404.9 1382,408.2"/><path d="M1334.5,438.2L1387.3,404.9" class="b"/><path d="M1334.5,438.2L1339.8,434.9" class="y"/><path d="M1387.3,404.9L1382,408.2" class="y"/><path d="M1451.7,398.5L1490.4,348.4" class="b"/><polygon fill="#f5be0b" points="1543.2,315.1 1546.2,312.6 1549.3,310.6 1549.3,314.9 1543.2,315.1"/><polygon fill="#e8900a" points="1549.3,310.6 1553.1,308.6 1556.9,306.9 1560.7,305.5 1564.5,304.4 1564.5,314.4 1549.3,314.9"/><polygon fill="#e07b63" points="1564.5,304.4 1568.5,303.6 1572.6,303.2 1576.6,303.2 1580.7,303.5 1584.7,304.2 1588.8,305.3 1588.8,313.6 1564.5,314.4"/><polygon fill="#eda55d" points="1588.8,305.3 1591.8,306.4 1594.8,307.6 1597.9,309 1597.9,313.3 1588.8,313.6"/><polygon fill="#f5be0b" points="1597.9,309 1600.9,310.8 1604,313.1 1604,313.1 1597.9,313.3"/><path d="M1543.2,315.1L1604,313.1" class="b"/><path d="M1543.2,315.1L1549.3,314.9" class="y"/><path d="M1604,313.1L1597.9,313.3" class="y"/><path d="M1398.9,431.8L1387.3,404.9" class="b"/><path d="M1398.9,431.8L1451.7,398.5" class="b"/><path d="M1556.3,353.5L1490.4,348.4" class="b"/><polygon fill="#f5be0b" points="1387.3,404.9 1389.3,400.7 1391.3,397.4 1391.3,403 1387.3,404.9"/><polygon fill="#e07b63" points="1391.3,397.4 1394.1,393.4 1396.8,389.8 1399.6,386.5 1402.4,383.6 1402.4,397.9 1391.3,403"/><polygon fill="#d9640a" points="1402.4,383.6 1405.5,380.8 1408.7,378.4 1411.8,376.6 1415,375.3 1415,392.2 1402.4,397.9"/><polygon fill="#c8320a" points="1415,375.3 1417.9,374.6 1420.7,374.3 1423.6,374.4 1426.5,375 1426.5,386.8 1415,392.2"/><polygon fill="#e8900a" points="1426.5,375 1430.1,376.2 1433.6,378 1433.6,383.6 1426.5,386.8"/><polygon fill="#f5be0b" points="1433.6,378 1435.6,379.4 1437.6,381.7 1437.6,381.7 1433.6,383.6"/><path d="M1387.3,404.9L1437.6,381.7" class="b"/><path d="M1387.3,404.9L1392.3,402.6" class="y"/><path d="M1437.6,381.7L1432.6,384.1" class="y"/><path d="M1451.7,398.5L1437.6,381.7" class="b"/><path d="M1503.5,386.8L1451.7,398.5" class="b"/><path d="M1398.9,431.8L1334.5,438.2" class="b"/><path d="M1556.3,353.5L1604,313.1" class="b"/><polygon fill="#f5be0b" points="1437.6,381.7 1439.5,377.2 1441.3,373.6 1441.3,379.4 1437.6,381.7"/><polygon fill="#e8900a" points="1441.3,373.6 1444.7,367.6 1448.2,362.3 1448.2,375.1 1441.3,379.4"/><polygon fill="#d9640a" points="1448.2,362.3 1451,358.3 1453.8,354.8 1456.6,351.7 1456.6,369.8 1448.2,375.1"/><polygon fill="#c8320a" points="1456.6,351.7 1460.3,348.2 1464,345.5 1467.7,343.5 1471.4,342.3 1471.4,360.4 1456.6,369.8"/><polygon fill="#d9640a" points="1471.4,342.3 1474.2,341.9 1477,341.9 1479.8,342.3 1479.8,355.1 1471.4,360.4"/><polygon fill="#e8900a" points="1479.8,342.3 1483.3,343.3 1486.7,345 1486.7,350.8 1479.8,355.1"/><polygon fill="#f5be0b" points="1486.7,345 1488.6,346.3 1490.4,348.4 1490.4,348.4 1486.7,350.8"/><path d="M1437.6,381.7L1490.4,348.4" class="b"/><path d="M1437.6,381.7L1442.9,378.4" class="y"/><path d="M1490.4,348.4L1485.1,351.8" class="y"/><path d="M1503.5,386.8L1490.4,348.4" class="b"/><path d="M1503.5,386.8L1556.3,353.5" class="b"/><polygon fill="#f5be0b" points="1281.7,471.5 1284.3,467.5 1287,464.2 1287,468.2 1281.7,471.5"/><polygon fill="#eda55d" points="1287,464.2 1290.5,460.2 1294,456.5 1297.5,453.1 1297.5,461.5 1287,468.2"/><polygon fill="#e8900a" points="1297.5,453.1 1301,450 1304.6,447.2 1308.1,444.8 1311.6,442.8 1315.1,441.1 1318.6,439.7 1318.6,448.2 1297.5,461.5"/><polygon fill="#eda55d" points="1318.6,439.7 1322.2,438.7 1325.7,438 1329.2,437.6 1329.2,441.5 1318.6,448.2"/><polygon fill="#f5be0b" points="1329.2,437.6 1331.8,437.6 1334.5,438.2 1334.5,438.2 1329.2,441.5"/><path d="M1281.7,471.5L1334.5,438.2" class="b"/><path d="M1281.7,471.5L1287,468.2" class="y"/><path d="M1334.5,438.2L1329.2,441.5" class="y"/><path d="M1398.9,431.8L1437.6,381.7" class="b"/><polygon fill="#f5be0b" points="1490.4,348.4 1492.5,344.6 1494.7,341.8 1494.7,348.3 1490.4,348.4"/><polygon fill="#e8900a" points="1494.7,341.8 1498.6,337.4 1502.6,333.7 1502.6,348 1494.7,348.3"/><polygon fill="#d9640a" points="1502.6,333.7 1505.8,331.1 1509,329 1512.3,327.4 1512.3,347.7 1502.6,348"/><polygon fill="#c8320a" points="1512.3,327.4 1516.5,326 1520.8,325.4 1525,325.7 1529.3,326.9 1529.3,347.2 1512.3,347.7"/><polygon fill="#d9640a" points="1529.3,326.9 1532.5,328.3 1535.8,330.1 1539,332.5 1539,346.8 1529.3,347.2"/><polygon fill="#e8900a" points="1539,332.5 1543,335.9 1546.9,340.1 1546.9,346.6 1539,346.8"/><polygon fill="#f5be0b" points="1546.9,340.1 1549,342.8 1551.2,346.4 1551.2,346.4 1546.9,346.6"/><path d="M1490.4,348.4L1551.2,346.4" class="b"/><path d="M1490.4,348.4L1496.5,348.2" class="y"/><path d="M1551.2,346.4L1545.1,346.6" class="y"/><path d="M1346.1,465.1L1334.5,438.2" class="b"/><path d="M1615.9,361.5L1556.3,353.5" class="b"/><path d="M1556.3,353.5L1551.2,346.4" class="b"/><path d="M1346.1,465.1L1398.9,431.8" class="b"/><path d="M1503.5,386.8L1437.6,381.7" class="b"/><polygon fill="#f5be0b" points="1334.5,438.2 1336.5,434 1338.5,430.7 1338.5,436.3 1334.5,438.2"/><polygon fill="#e07b63" points="1338.5,430.7 1341.3,426.7 1344,423.1 1346.8,419.8 1349.6,416.9 1349.6,431.2 1338.5,436.3"/><polygon fill="#d9640a" points="1349.6,416.9 1352.7,414.1 1355.9,411.7 1359,409.9 1362.2,408.6 1362.2,425.5 1349.6,431.2"/><polygon fill="#c8320a" points="1362.2,408.6 1365.1,407.9 1367.9,407.6 1370.8,407.7 1373.7,408.3 1373.7,420.1 1362.2,425.5"/><polygon fill="#e8900a" points="1373.7,408.3 1377.3,409.5 1380.8,411.3 1380.8,416.9 1373.7,420.1"/><polygon fill="#f5be0b" points="1380.8,411.3 1382.8,412.7 1384.8,415 1384.8,415 1380.8,416.9"/><path d="M1334.5,438.2L1384.8,415" class="b"/><path d="M1334.5,438.2L1339.5,435.9" class="y"/><path d="M1384.8,415L1379.8,417.4" class="y"/><path d="M1615.9,361.5L1604,313.1" class="b"/><polygon fill="#f5be0b" points="1551.2,346.4 1553,342 1554.9,338.4 1554.9,344.1 1551.2,346.4"/><polygon fill="#e8900a" points="1554.9,338.4 1558.3,332.5 1561.7,327.2 1561.7,339.8 1554.9,344.1"/><polygon fill="#d9640a" points="1561.7,327.2 1564.5,323.3 1567.3,319.7 1570.2,316.6 1570.2,334.5 1561.7,339.8"/><polygon fill="#c8320a" points="1570.2,316.6 1573.9,313.2 1577.6,310.5 1581.3,308.5 1584.9,307.3 1584.9,325.1 1570.2,334.5"/><polygon fill="#d9640a" points="1584.9,307.3 1587.8,306.9 1590.6,306.8 1593.4,307.2 1593.4,319.8 1584.9,325.1"/><polygon fill="#e8900a" points="1593.4,307.2 1596.8,308.2 1600.3,309.8 1600.3,315.5 1593.4,319.8"/><polygon fill="#f5be0b" points="1600.3,309.8 1602.1,311 1604,313.1 1604,313.1 1600.3,315.5"/><path d="M1551.2,346.4L1604,313.1" class="b"/><path d="M1551.2,346.4L1556.4,343.1" class="y"/><path d="M1604,313.1L1598.7,316.5" class="y"/><path d="M1398.9,431.8L1384.8,415" class="b"/><path d="M1450.7,420.1L1398.9,431.8" class="b"/><path d="M1346.1,465.1L1281.7,471.5" class="b"/><polygon fill="#f5be0b" points="1604,313.1 1607.3,311.6 1610.7,310.8 1610.7,315.1 1604,313.1"/><polygon fill="#e8900a" points="1610.7,310.8 1614.9,310.1 1619.1,309.7 1623.3,309.6 1627.5,309.9 1627.5,319.9 1610.7,315.1"/><polygon fill="#e07b63" points="1627.5,309.9 1632,310.5 1636.5,311.5 1641,312.8 1645.4,314.6 1649.9,316.8 1654.4,319.3 1654.4,327.6 1627.5,319.9"/><polygon fill="#eda55d" points="1654.4,319.3 1657.8,321.4 1661.1,323.7 1664.5,326.2 1664.5,330.5 1654.4,327.6"/><polygon fill="#f5be0b" points="1664.5,326.2 1667.9,329 1671.2,332.4 1671.2,332.4 1664.5,330.5"/><path d="M1604,313.1L1671.2,332.4" class="b"/><path d="M1604,313.1L1610.7,315.1" class="y"/><path d="M1671.2,332.4L1664.5,330.5" class="y"/><path d="M1503.5,386.8L1551.2,346.4" class="b"/><polygon fill="#f5be0b" points="1384.8,415 1386.7,410.5 1388.5,406.8 1388.5,412.7 1384.8,415"/><polygon fill="#e8900a" points="1388.5,406.8 1391.9,400.8 1395.4,395.4 1395.4,408.4 1388.5,412.7"/><polygon fill="#d9640a" points="1395.4,395.4 1398.2,391.4 1401,387.8 1403.8,384.7 1403.8,403.1 1395.4,408.4"/><polygon fill="#c8320a" points="1403.8,384.7 1407.5,381.2 1411.2,378.5 1414.9,376.5 1418.6,375.4 1418.6,393.7 1403.8,403.1"/><polygon fill="#d9640a" points="1418.6,375.4 1421.4,375 1424.2,375 1427,375.4 1427,388.4 1418.6,393.7"/><polygon fill="#e8900a" points="1427,375.4 1430.5,376.5 1433.9,378.2 1433.9,384.1 1427,388.4"/><polygon fill="#f5be0b" points="1433.9,378.2 1435.8,379.5 1437.6,381.7 1437.6,381.7 1433.9,384.1"/><path d="M1384.8,415L1437.6,381.7" class="b"/><path d="M1384.8,415L1390.1,411.7" class="y"/><path d="M1437.6,381.7L1432.3,385.1" class="y"/><path d="M1450.7,420.1L1437.6,381.7" class="b"/><path d="M1615.9,361.5L1551.2,346.4" class="b"/><path d="M1450.7,420.1L1503.5,386.8" class="b"/><polygon fill="#f5be0b" points="1228.9,504.8 1231.5,500.8 1234.2,497.5 1234.2,501.5 1228.9,504.8"/><polygon fill="#eda55d" points="1234.2,497.5 1237.7,493.5 1241.2,489.8 1244.7,486.4 1244.7,494.8 1234.2,501.5"/><polygon fill="#e8900a" points="1244.7,486.4 1248.2,483.3 1251.8,480.5 1255.3,478.1 1258.8,476.1 1262.3,474.4 1265.8,473 1265.8,481.5 1244.7,494.8"/><polygon fill="#eda55d" points="1265.8,473 1269.4,472 1272.9,471.3 1276.4,470.9 1276.4,474.8 1265.8,481.5"/><polygon fill="#f5be0b" points="1276.4,470.9 1279,470.9 1281.7,471.5 1281.7,471.5 1276.4,474.8"/><path d="M1228.9,504.8L1281.7,471.5" class="b"/><path d="M1228.9,504.8L1234.2,501.5" class="y"/><path d="M1281.7,471.5L1276.4,474.8" class="y"/><path d="M1346.1,465.1L1384.8,415" class="b"/><polygon fill="#f5be0b" points="1437.6,381.7 1439.7,377.9 1441.9,375.1 1441.9,381.6 1437.6,381.7"/><polygon fill="#e8900a" points="1441.9,375.1 1445.8,370.7 1449.8,367 1449.8,381.3 1441.9,381.6"/><polygon fill="#d9640a" points="1449.8,367 1453,364.4 1456.2,362.3 1459.5,360.7 1459.5,381 1449.8,381.3"/><polygon fill="#c8320a" points="1459.5,360.7 1463.7,359.3 1468,358.7 1472.2,359 1476.5,360.2 1476.5,380.5 1459.5,381"/><polygon fill="#d9640a" points="1476.5,360.2 1479.7,361.6 1483,363.4 1486.2,365.8 1486.2,380.1 1476.5,380.5"/><polygon fill="#e8900a" points="1486.2,365.8 1490.2,369.2 1494.1,373.4 1494.1,379.9 1486.2,380.1"/><polygon fill="#f5be0b" points="1494.1,373.4 1496.2,376.1 1498.4,379.7 1498.4,379.7 1494.1,379.9"/><path d="M1437.6,381.7L1498.4,379.7" class="b"/><path d="M1437.6,381.7L1443.7,381.5" class="y"/><path d="M1498.4,379.7L1492.3,379.9" class="y"/><path d="M1615.9,361.5L1671.2,332.4" class="b"/><path d="M1293.3,498.4L1281.7,471.5" class="b"/><path d="M1563.1,394.8L1503.5,386.8" class="b"/><path d="M1503.5,386.8L1498.4,379.7" class="b"/><path d="M1293.3,498.4L1346.1,465.1" class="b"/><path d="M1450.7,420.1L1384.8,415" class="b"/><polygon fill="#f5be0b" points="1281.7,471.5 1283.7,467.3 1285.7,464 1285.7,469.6 1281.7,471.5"/><polygon fill="#e07b63" points="1285.7,464 1288.5,460 1291.2,456.4 1294,453.1 1296.8,450.2 1296.8,464.5 1285.7,469.6"/><polygon fill="#d9640a" points="1296.8,450.2 1299.9,447.4 1303.1,445 1306.2,443.2 1309.4,441.9 1309.4,458.8 1296.8,464.5"/><polygon fill="#c8320a" points="1309.4,441.9 1312.3,441.2 1315.1,440.9 1318,441 1320.9,441.6 1320.9,453.4 1309.4,458.8"/><polygon fill="#e8900a" points="1320.9,441.6 1324.5,442.8 1328,444.6 1328,450.2 1320.9,453.4"/><polygon fill="#f5be0b" points="1328,444.6 1330,446 1332,448.3 1332,448.3 1328,450.2"/><path d="M1281.7,471.5L1332,448.3" class="b"/><path d="M1281.7,471.5L1286.7,469.2" class="y"/><path d="M1332,448.3L1327,450.7" class="y"/><path d="M1563.1,394.8L1615.9,361.5" class="b"/><path d="M1563.1,394.8L1551.2,346.4" class="b"/><polygon fill="#f5be0b" points="1498.4,379.7 1500.2,375.2 1502.1,371.6 1502.1,377.4 1498.4,379.7"/><polygon fill="#e8900a" points="1502.1,371.6 1505.5,365.6 1508.9,360.3 1508.9,373.1 1502.1,377.4"/><polygon fill="#d9640a" points="1508.9,360.3 1511.7,356.3 1514.5,352.8 1517.4,349.7 1517.4,367.8 1508.9,373.1"/><polygon fill="#c8320a" points="1517.4,349.7 1521.1,346.2 1524.8,343.5 1528.5,341.5 1532.1,340.3 1532.1,358.4 1517.4,367.8"/><polygon fill="#d9640a" points="1532.1,340.3 1535,339.9 1537.8,339.9 1540.6,340.3 1540.6,353.1 1532.1,358.4"/><polygon fill="#e8900a" points="1540.6,340.3 1544,341.3 1547.5,343 1547.5,348.8 1540.6,353.1"/><polygon fill="#f5be0b" points="1547.5,343 1549.3,344.3 1551.2,346.4 1551.2,346.4 1547.5,348.8"/><path d="M1498.4,379.7L1551.2,346.4" class="b"/><path d="M1498.4,379.7L1503.6,376.4" class="y"/><path d="M1551.2,346.4L1545.9,349.8" class="y"/><path d="M1679.6,388.8L1615.9,361.5" class="b"/><path d="M1346.1,465.1L1332,448.3" class="b"/><path d="M1397.9,453.4L1346.1,465.1" class="b"/><path d="M1615.9,361.5L1618.4,365.7" class="b"/><path d="M1293.3,498.4L1228.9,504.8" class="b"/><polygon fill="#f5be0b" points="1551.2,346.4 1553.5,343.9 1555.9,342.2 1555.9,347.8 1551.2,346.4"/><polygon fill="#d04d63" points="1555.9,342.2 1559.7,340 1563.6,338.3 1567.5,337.1 1571.3,336.3 1571.3,352.2 1555.9,347.8"/><polygon fill="#b30303" points="1571.3,336.3 1576,335.9 1580.6,336.3 1585.2,337.3 1589.8,339 1594.4,341.4 1599,344.5 1603.6,348.3 1603.6,361.5 1571.3,352.2"/><polygon fill="#d04d63" points="1603.6,348.3 1607,351.4 1610.4,354.9 1613.7,358.8 1613.7,364.4 1603.6,361.5"/><polygon fill="#f5be0b" points="1613.7,358.8 1616.1,361.8 1618.4,365.7 1618.4,365.7 1613.7,364.4"/><path d="M1551.2,346.4L1618.4,365.7" class="b"/><path d="M1551.2,346.4L1557.9,348.4" class="y"/><path d="M1618.4,365.7L1611.7,363.8" class="y"/><path d="M1450.7,420.1L1498.4,379.7" class="b"/><polygon fill="#f5be0b" points="1332,448.3 1333.9,443.7 1335.7,440 1335.7,446 1332,448.3"/><polygon fill="#e8900a" points="1335.7,440 1339.1,433.9 1342.6,428.5 1342.6,441.7 1335.7,446"/><polygon fill="#d9640a" points="1342.6,428.5 1345.4,424.5 1348.2,420.9 1351,417.7 1351,436.4 1342.6,441.7"/><polygon fill="#c8320a" points="1351,417.7 1354.7,414.2 1358.4,411.5 1362.1,409.6 1365.8,408.4 1365.8,427 1351,436.4"/><polygon fill="#d9640a" points="1365.8,408.4 1368.6,408 1371.4,408 1374.2,408.5 1374.2,421.7 1365.8,427"/><polygon fill="#e8900a" points="1374.2,408.5 1377.7,409.6 1381.1,411.4 1381.1,417.4 1374.2,421.7"/><polygon fill="#f5be0b" points="1381.1,411.4 1383,412.8 1384.8,415 1384.8,415 1381.1,417.4"/><path d="M1332,448.3L1384.8,415" class="b"/><path d="M1332,448.3L1337.3,445" class="y"/><path d="M1384.8,415L1379.5,418.4" class="y"/><path d="M1679.6,388.8L1671.2,332.4" class="b"/><path d="M1397.9,453.4L1384.8,415" class="b"/><polygon fill="#f5be0b" points="1618.4,365.7 1620.3,361.2 1622.1,357.7 1622.1,363.4 1618.4,365.7"/><polygon fill="#e8900a" points="1622.1,357.7 1625.6,351.7 1629,346.4 1629,359 1622.1,363.4"/><polygon fill="#d9640a" points="1629,346.4 1631.8,342.5 1634.6,339 1637.5,335.9 1637.5,353.7 1629,359"/><polygon fill="#c8320a" points="1637.5,335.9 1641.1,332.5 1644.8,329.8 1648.5,327.8 1652.2,326.6 1652.2,344.4 1637.5,353.7"/><polygon fill="#d9640a" points="1652.2,326.6 1655.1,326.1 1657.9,326.1 1660.7,326.5 1660.7,339.1 1652.2,344.4"/><polygon fill="#e8900a" points="1660.7,326.5 1664.1,327.4 1667.5,329 1667.5,334.7 1660.7,339.1"/><polygon fill="#f5be0b" points="1667.5,329 1669.4,330.3 1671.2,332.4 1671.2,332.4 1667.5,334.7"/><path d="M1618.4,365.7L1671.2,332.4" class="b"/><path d="M1618.4,365.7L1623.7,362.4" class="y"/><path d="M1671.2,332.4L1666,335.7" class="y"/><path d="M1563.1,394.8L1498.4,379.7" class="b"/><path d="M1397.9,453.4L1450.7,420.1" class="b"/><polygon fill="#f5be0b" points="1671.2,332.4 1674.7,331.9 1678.2,332 1678.2,336.3 1671.2,332.4"/><polygon fill="#e8900a" points="1678.2,332 1682.5,332.6 1686.9,333.5 1691.2,334.6 1695.6,336.1 1695.6,346.2 1678.2,336.3"/><polygon fill="#e07b63" points="1695.6,336.1 1700.2,338.1 1704.8,340.4 1709.5,343.1 1714.1,346.2 1718.7,349.7 1723.4,353.5 1723.4,361.9 1695.6,346.2"/><polygon fill="#eda55d" points="1723.4,353.5 1726.9,356.7 1730.3,360 1733.8,363.5 1733.8,367.8 1723.4,361.9"/><polygon fill="#f5be0b" points="1733.8,363.5 1737.3,367.2 1740.8,371.7 1740.8,371.7 1733.8,367.8"/><path d="M1671.2,332.4L1740.8,371.7" class="b"/><path d="M1671.2,332.4L1678.2,336.3" class="y"/><path d="M1740.8,371.7L1733.8,367.8" class="y"/><polygon fill="#f5be0b" points="1176.1,538.1 1178.7,534.1 1181.4,530.8 1181.4,534.8 1176.1,538.1"/><polygon fill="#eda55d" points="1181.4,530.8 1184.9,526.8 1188.4,523.1 1191.9,519.7 1191.9,528.1 1181.4,534.8"/><polygon fill="#e8900a" points="1191.9,519.7 1195.4,516.6 1199,513.8 1202.5,511.4 1206,509.4 1209.5,507.7 1213,506.3 1213,514.8 1191.9,528.1"/><polygon fill="#eda55d" points="1213,506.3 1216.6,505.3 1220.1,504.6 1223.6,504.2 1223.6,508.1 1213,514.8"/><polygon fill="#f5be0b" points="1223.6,504.2 1226.2,504.2 1228.9,504.8 1228.9,504.8 1223.6,508.1"/><path d="M1176.1,538.1L1228.9,504.8" class="b"/><path d="M1176.1,538.1L1181.4,534.8" class="y"/><path d="M1228.9,504.8L1223.6,508.1" class="y"/><path d="M1293.3,498.4L1332,448.3" class="b"/><polygon fill="#f5be0b" points="1384.8,415 1386.9,411.2 1389.1,408.4 1389.1,414.9 1384.8,415"/><polygon fill="#e8900a" points="1389.1,408.4 1393,404 1397,400.3 1397,414.6 1389.1,414.9"/><polygon fill="#d9640a" points="1397,400.3 1400.2,397.7 1403.4,395.6 1406.7,394 1406.7,414.3 1397,414.6"/><polygon fill="#c8320a" points="1406.7,394 1410.9,392.6 1415.2,392 1419.4,392.3 1423.7,393.5 1423.7,413.8 1406.7,414.3"/><polygon fill="#d9640a" points="1423.7,393.5 1426.9,394.9 1430.2,396.7 1433.4,399.1 1433.4,413.4 1423.7,413.8"/><polygon fill="#e8900a" points="1433.4,399.1 1437.4,402.5 1441.3,406.7 1441.3,413.2 1433.4,413.4"/><polygon fill="#f5be0b" points="1441.3,406.7 1443.4,409.4 1445.6,413 1445.6,413 1441.3,413.2"/><path d="M1384.8,415L1445.6,413" class="b"/><path d="M1384.8,415L1390.9,414.8" class="y"/><path d="M1445.6,413L1439.5,413.2" class="y"/><path d="M1563.1,394.8L1618.4,365.7" class="b"/><path d="M1240.5,531.7L1228.9,504.8" class="b"/><path d="M1510.3,428.1L1450.7,420.1" class="b"/><path d="M1450.7,420.1L1445.6,413" class="b"/><path d="M1679.6,388.8L1618.4,365.7" class="b"/><path d="M1240.5,531.7L1293.3,498.4" class="b"/><path d="M1397.9,453.4L1332,448.3" class="b"/><path d="M1679.6,388.8L1740.8,371.7" class="b"/><polygon fill="#f5be0b" points="1228.9,504.8 1230.9,500.6 1232.9,497.3 1232.9,502.9 1228.9,504.8"/><polygon fill="#e07b63" points="1232.9,497.3 1235.7,493.3 1238.4,489.7 1241.2,486.4 1244,483.5 1244,497.8 1232.9,502.9"/><polygon fill="#d9640a" points="1244,483.5 1247.1,480.7 1250.3,478.3 1253.4,476.5 1256.6,475.2 1256.6,492.1 1244,497.8"/><polygon fill="#c8320a" points="1256.6,475.2 1259.5,474.5 1262.3,474.2 1265.2,474.3 1268.1,474.9 1268.1,486.7 1256.6,492.1"/><polygon fill="#e8900a" points="1268.1,474.9 1271.7,476.1 1275.2,477.9 1275.2,483.5 1268.1,486.7"/><polygon fill="#f5be0b" points="1275.2,477.9 1277.2,479.3 1279.2,481.6 1279.2,481.6 1275.2,483.5"/><path d="M1228.9,504.8L1279.2,481.6" class="b"/><path d="M1228.9,504.8L1233.9,502.5" class="y"/><path d="M1279.2,481.6L1274.2,484" class="y"/><path d="M1510.3,428.1L1563.1,394.8" class="b"/><path d="M1510.3,428.1L1498.4,379.7" class="b"/><polygon fill="#f5be0b" points="1445.6,413 1447.4,408.5 1449.3,404.8 1449.3,410.7 1445.6,413"/><polygon fill="#e8900a" points="1449.3,404.8 1452.7,398.8 1456.1,393.4 1456.1,406.4 1449.3,410.7"/><polygon fill="#d9640a" points="1456.1,393.4 1458.9,389.4 1461.7,385.8 1464.6,382.7 1464.6,401.1 1456.1,406.4"/><polygon fill="#c8320a" points="1464.6,382.7 1468.3,379.2 1472,376.5 1475.7,374.5 1479.3,373.4 1479.3,391.7 1464.6,401.1"/><polygon fill="#d9640a" points="1479.3,373.4 1482.2,373 1485,373 1487.8,373.4 1487.8,386.4 1479.3,391.7"/><polygon fill="#e8900a" points="1487.8,373.4 1491.2,374.5 1494.7,376.2 1494.7,382.1 1487.8,386.4"/><polygon fill="#f5be0b" points="1494.7,376.2 1496.5,377.5 1498.4,379.7 1498.4,379.7 1494.7,382.1"/><path d="M1445.6,413L1498.4,379.7" class="b"/><path d="M1445.6,413L1450.8,409.7" class="y"/><path d="M1498.4,379.7L1493.1,383.1" class="y"/><path d="M1626.8,422.1L1563.1,394.8" class="b"/><path d="M1293.3,498.4L1279.2,481.6" class="b"/><path d="M1743.3,433.5L1679.6,388.8" class="b"/><path d="M1626.8,422.1L1679.6,388.8" class="b"/><path d="M1345.1,486.7L1293.3,498.4" class="b"/><path d="M1563.1,394.8L1565.6,399" class="b"/><path d="M1240.5,531.7L1176.1,538.1" class="b"/><polygon fill="#f5be0b" points="1498.4,379.7 1500.7,377 1503.1,375.2 1503.1,381.1 1498.4,379.7"/><polygon fill="#d04d63" points="1503.1,375.2 1506.9,372.9 1510.8,371.1 1514.7,369.7 1518.5,368.8 1518.5,385.5 1503.1,381.1"/><polygon fill="#b30303" points="1518.5,368.8 1523.2,368.4 1527.8,368.7 1532.4,369.7 1537,371.4 1541.6,373.9 1546.2,377.1 1550.8,381 1550.8,394.8 1518.5,385.5"/><polygon fill="#d04d63" points="1550.8,381 1554.2,384.2 1557.6,387.8 1560.9,391.8 1560.9,397.7 1550.8,394.8"/><polygon fill="#f5be0b" points="1560.9,391.8 1563.3,395 1565.6,399 1565.6,399 1560.9,397.7"/><path d="M1498.4,379.7L1565.6,399" class="b"/><path d="M1498.4,379.7L1505.1,381.7" class="y"/><path d="M1565.6,399L1558.9,397.1" class="y"/><path d="M1397.9,453.4L1445.6,413" class="b"/><polygon fill="#f5be0b" points="1279.2,481.6 1281.1,477 1282.9,473.2 1282.9,479.3 1279.2,481.6"/><polygon fill="#e8900a" points="1282.9,473.2 1286.3,467.1 1289.8,461.6 1289.8,475 1282.9,479.3"/><polygon fill="#d9640a" points="1289.8,461.6 1292.6,457.5 1295.4,453.9 1298.2,450.7 1298.2,469.7 1289.8,475"/><polygon fill="#c8320a" points="1298.2,450.7 1301.9,447.2 1305.6,444.5 1309.3,442.6 1313,441.4 1313,460.3 1298.2,469.7"/><polygon fill="#d9640a" points="1313,441.4 1315.8,441 1318.6,441.1 1321.4,441.6 1321.4,455 1313,460.3"/><polygon fill="#e8900a" points="1321.4,441.6 1324.9,442.8 1328.3,444.6 1328.3,450.7 1321.4,455"/><polygon fill="#f5be0b" points="1328.3,444.6 1330.2,446 1332,448.3 1332,448.3 1328.3,450.7"/><path d="M1279.2,481.6L1332,448.3" class="b"/><path d="M1279.2,481.6L1284.5,478.3" class="y"/><path d="M1332,448.3L1326.7,451.7" class="y"/><path d="M1626.8,422.1L1618.4,365.7" class="b"/><path d="M1743.3,433.5L1740.8,371.7" class="b"/><path d="M1345.1,486.7L1332,448.3" class="b"/><path d="M1679.6,388.8L1688,405" class="b"/><polygon fill="#f5be0b" points="1565.6,399 1567.5,394.5 1569.3,390.9 1569.3,396.7 1565.6,399"/><polygon fill="#e8900a" points="1569.3,390.9 1572.8,384.9 1576.2,379.5 1576.2,392.3 1569.3,396.7"/><polygon fill="#d9640a" points="1576.2,379.5 1579,375.6 1581.8,372.1 1584.7,368.9 1584.7,387 1576.2,392.3"/><polygon fill="#c8320a" points="1584.7,368.9 1588.3,365.5 1592,362.8 1595.7,360.8 1599.4,359.6 1599.4,377.7 1584.7,387"/><polygon fill="#d9640a" points="1599.4,359.6 1602.3,359.2 1605.1,359.2 1607.9,359.6 1607.9,372.4 1599.4,377.7"/><polygon fill="#e8900a" points="1607.9,359.6 1611.3,360.6 1614.7,362.2 1614.7,368 1607.9,372.4"/><polygon fill="#f5be0b" points="1614.7,362.2 1616.6,363.5 1618.4,365.7 1618.4,365.7 1614.7,368"/><path d="M1565.6,399L1618.4,365.7" class="b"/><path d="M1565.6,399L1570.9,395.7" class="y"/><path d="M1618.4,365.7L1613.2,369" class="y"/><path d="M1510.3,428.1L1445.6,413" class="b"/><path d="M1345.1,486.7L1397.9,453.4" class="b"/><polygon fill="#f5be0b" points="1740.8,371.7 1744.1,372 1747.5,373.1 1747.5,377.4 1740.8,371.7"/><polygon fill="#e8900a" points="1747.5,373.1 1751.7,374.7 1755.9,376.7 1760.1,379 1764.3,381.6 1764.3,391.6 1747.5,377.4"/><polygon fill="#e07b63" points="1764.3,381.6 1768.8,384.7 1773.3,388.2 1777.8,392.1 1782.3,396.3 1786.7,401 1791.2,406 1791.2,414.3 1764.3,391.6"/><polygon fill="#eda55d" points="1791.2,406 1794.6,410 1798,414.1 1801.3,418.5 1801.3,422.8 1791.2,414.3"/><polygon fill="#f5be0b" points="1801.3,418.5 1804.7,423.2 1808,428.5 1808,428.5 1801.3,422.8"/><path d="M1740.8,371.7L1808,428.5" class="b"/><path d="M1740.8,371.7L1747.5,377.4" class="y"/><path d="M1808,428.5L1801.3,422.8" class="y"/><polygon fill="#f5be0b" points="1618.4,365.7 1620.9,363.9 1623.3,362.9 1623.3,368.5 1618.4,365.7"/><polygon fill="#d04d63" points="1623.3,362.9 1627.3,361.8 1631.3,361.3 1635.3,361.2 1639.3,361.5 1639.3,377.5 1623.3,368.5"/><polygon fill="#b30303" points="1639.3,361.5 1644.1,362.6 1648.8,364.3 1653.6,366.7 1658.4,369.8 1663.1,373.6 1667.9,378.1 1672.7,383.2 1672.7,396.4 1639.3,377.5"/><polygon fill="#d04d63" points="1672.7,383.2 1676.1,387.3 1679.6,391.8 1683.1,396.7 1683.1,402.3 1672.7,396.4"/><polygon fill="#f5be0b" points="1683.1,396.7 1685.5,400.4 1688,405 1688,405 1683.1,402.3"/><path d="M1618.4,365.7L1688,405" class="b"/><path d="M1618.4,365.7L1625.4,369.6" class="y"/><path d="M1688,405L1681,401.1" class="y"/><polygon fill="#f5be0b" points="1123.3,571.4 1125.9,567.4 1128.6,564.1 1128.6,568.1 1123.3,571.4"/><polygon fill="#eda55d" points="1128.6,564.1 1132.1,560.1 1135.6,556.4 1139.1,553 1139.1,561.4 1128.6,568.1"/><polygon fill="#e8900a" points="1139.1,553 1142.6,549.9 1146.2,547.1 1149.7,544.7 1153.2,542.7 1156.7,541 1160.2,539.6 1160.2,548.1 1139.1,561.4"/><polygon fill="#eda55d" points="1160.2,539.6 1163.8,538.6 1167.3,537.9 1170.8,537.5 1170.8,541.4 1160.2,548.1"/><polygon fill="#f5be0b" points="1170.8,537.5 1173.4,537.5 1176.1,538.1 1176.1,538.1 1170.8,541.4"/><path d="M1123.3,571.4L1176.1,538.1" class="b"/><path d="M1123.3,571.4L1128.6,568.1" class="y"/><path d="M1176.1,538.1L1170.8,541.4" class="y"/><path d="M1240.5,531.7L1279.2,481.6" class="b"/><polygon fill="#f5be0b" points="1688,405 1689.8,400.5 1691.7,397 1691.7,402.7 1688,405"/><polygon fill="#e8900a" points="1691.7,397 1695.1,391 1698.5,385.7 1698.5,398.3 1691.7,402.7"/><polygon fill="#d9640a" points="1698.5,385.7 1701.3,381.8 1704.1,378.3 1707,375.2 1707,393 1698.5,398.3"/><polygon fill="#c8320a" points="1707,375.2 1710.7,371.8 1714.4,369.1 1718.1,367.1 1721.7,365.9 1721.7,383.7 1707,393"/><polygon fill="#d9640a" points="1721.7,365.9 1724.6,365.4 1727.4,365.4 1730.2,365.7 1730.2,378.4 1721.7,383.7"/><polygon fill="#e8900a" points="1730.2,365.7 1733.6,366.7 1737.1,368.3 1737.1,374 1730.2,378.4"/><polygon fill="#f5be0b" points="1737.1,368.3 1738.9,369.6 1740.8,371.7 1740.8,371.7 1737.1,374"/><path d="M1688,405L1740.8,371.7" class="b"/><path d="M1688,405L1693.2,401.7" class="y"/><path d="M1740.8,371.7L1735.5,375" class="y"/><polygon fill="#f5be0b" points="1332,448.3 1334.1,444.5 1336.3,441.7 1336.3,448.2 1332,448.3"/><polygon fill="#e8900a" points="1336.3,441.7 1340.2,437.3 1344.2,433.6 1344.2,447.9 1336.3,448.2"/><polygon fill="#d9640a" points="1344.2,433.6 1347.4,431 1350.6,428.9 1353.9,427.3 1353.9,447.6 1344.2,447.9"/><polygon fill="#c8320a" points="1353.9,427.3 1358.1,425.9 1362.4,425.3 1366.6,425.6 1370.9,426.8 1370.9,447.1 1353.9,447.6"/><polygon fill="#d9640a" points="1370.9,426.8 1374.1,428.2 1377.4,430 1380.6,432.4 1380.6,446.7 1370.9,447.1"/><polygon fill="#e8900a" points="1380.6,432.4 1384.6,435.8 1388.5,440 1388.5,446.5 1380.6,446.7"/><polygon fill="#f5be0b" points="1388.5,440 1390.6,442.7 1392.8,446.3 1392.8,446.3 1388.5,446.5"/><path d="M1332,448.3L1392.8,446.3" class="b"/><path d="M1332,448.3L1338.1,448.1" class="y"/><path d="M1392.8,446.3L1386.7,446.5" class="y"/><path d="M1510.3,428.1L1565.6,399" class="b"/><path d="M1187.7,565L1176.1,538.1" class="b"/><path d="M1457.5,461.4L1397.9,453.4" class="b"/><path d="M1397.9,453.4L1392.8,446.3" class="b"/><path d="M1743.3,433.5L1808,428.5" class="b"/><path d="M1626.8,422.1L1565.6,399" class="b"/><path d="M1743.3,433.5L1688,405" class="b"/><path d="M1187.7,565L1240.5,531.7" class="b"/><path d="M1802.9,492.9L1743.3,433.5" class="b"/><path d="M1345.1,486.7L1279.2,481.6" class="b"/><path d="M1626.8,422.1L1688,405" class="b"/><polygon fill="#f5be0b" points="1176.1,538.1 1178.1,533.9 1180.1,530.6 1180.1,536.2 1176.1,538.1"/><polygon fill="#e07b63" points="1180.1,530.6 1182.9,526.6 1185.6,523 1188.4,519.7 1191.2,516.8 1191.2,531.1 1180.1,536.2"/><polygon fill="#d9640a" points="1191.2,516.8 1194.3,514 1197.5,511.6 1200.6,509.8 1203.8,508.5 1203.8,525.4 1191.2,531.1"/><polygon fill="#c8320a" points="1203.8,508.5 1206.7,507.8 1209.5,507.5 1212.4,507.6 1215.3,508.2 1215.3,520 1203.8,525.4"/><polygon fill="#e8900a" points="1215.3,508.2 1218.9,509.4 1222.4,511.2 1222.4,516.8 1215.3,520"/><polygon fill="#f5be0b" points="1222.4,511.2 1224.4,512.6 1226.4,514.9 1226.4,514.9 1222.4,516.8"/><path d="M1176.1,538.1L1226.4,514.9" class="b"/><path d="M1176.1,538.1L1181.1,535.8" class="y"/><path d="M1226.4,514.9L1221.4,517.3" class="y"/><path d="M1457.5,461.4L1510.3,428.1" class="b"/><path d="M1457.5,461.4L1445.6,413" class="b"/><polygon fill="#f5be0b" points="1392.8,446.3 1394.6,441.7 1396.5,438 1396.5,444 1392.8,446.3"/><polygon fill="#e8900a" points="1396.5,438 1399.9,431.9 1403.3,426.5 1403.3,439.7 1396.5,444"/><polygon fill="#d9640a" points="1403.3,426.5 1406.1,422.5 1408.9,418.9 1411.8,415.7 1411.8,434.4 1403.3,439.7"/><polygon fill="#c8320a" points="1411.8,415.7 1415.5,412.2 1419.2,409.5 1422.9,407.6 1426.5,406.4 1426.5,425 1411.8,434.4"/><polygon fill="#d9640a" points="1426.5,406.4 1429.4,406 1432.2,406 1435,406.5 1435,419.7 1426.5,425"/><polygon fill="#e8900a" points="1435,406.5 1438.4,407.6 1441.9,409.4 1441.9,415.4 1435,419.7"/><polygon fill="#f5be0b" points="1441.9,409.4 1443.7,410.8 1445.6,413 1445.6,413 1441.9,415.4"/><path d="M1392.8,446.3L1445.6,413" class="b"/><path d="M1392.8,446.3L1398,443" class="y"/><path d="M1445.6,413L1440.3,416.4" class="y"/><path d="M1802.9,492.9L1808,428.5" class="b"/><path d="M1574,455.4L1510.3,428.1" class="b"/><path d="M1240.5,531.7L1226.4,514.9" class="b"/><path d="M1690.5,466.8L1743.3,433.5" class="b"/><polygon fill="#f5be0b" points="1808,428.5 1811.1,429.5 1814.1,431.3 1814.1,435.6 1808,428.5"/><polygon fill="#e8900a" points="1814.1,431.3 1817.9,433.8 1821.7,436.6 1825.5,439.8 1829.3,443.2 1829.3,453.2 1814.1,435.6"/><polygon fill="#e07b63" points="1829.3,443.2 1833.4,447.3 1837.4,451.7 1841.5,456.5 1845.5,461.7 1849.6,467.3 1853.6,473.2 1853.6,481.5 1829.3,453.2"/><polygon fill="#eda55d" points="1853.6,473.2 1856.6,477.9 1859.7,482.7 1862.7,487.8 1862.7,492.1 1853.6,481.5"/><polygon fill="#f5be0b" points="1862.7,487.8 1865.8,493.2 1868.8,499.2 1868.8,499.2 1862.7,492.1"/><path d="M1808,428.5L1868.8,499.2" class="b"/><path d="M1808,428.5L1814.1,435.6" class="y"/><path d="M1868.8,499.2L1862.7,492.1" class="y"/><path d="M1690.5,466.8L1626.8,422.1" class="b"/><path d="M1574,455.4L1626.8,422.1" class="b"/><path d="M1292.3,520L1240.5,531.7" class="b"/><path d="M1510.3,428.1L1512.8,432.3" class="b"/><path d="M1187.7,565L1123.3,571.4" class="b"/><polygon fill="#f5be0b" points="1445.6,413 1447.9,410.2 1450.3,408.3 1450.3,414.4 1445.6,413"/><polygon fill="#d04d63" points="1450.3,408.3 1454.1,405.8 1458,403.8 1461.9,402.3 1465.7,401.4 1465.7,418.8 1450.3,414.4"/><polygon fill="#b30303" points="1465.7,401.4 1470.4,400.8 1475,401.1 1479.6,402.1 1484.2,403.9 1488.8,406.4 1493.4,409.7 1498,413.6 1498,428.1 1465.7,418.8"/><polygon fill="#d04d63" points="1498,413.6 1501.4,417 1504.8,420.7 1508.1,424.8 1508.1,431 1498,428.1"/><polygon fill="#f5be0b" points="1508.1,424.8 1510.5,428.1 1512.8,432.3 1512.8,432.3 1508.1,431"/><path d="M1445.6,413L1512.8,432.3" class="b"/><path d="M1445.6,413L1452.3,415" class="y"/><path d="M1512.8,432.3L1506.1,430.4" class="y"/><path d="M1345.1,486.7L1392.8,446.3" class="b"/><path d="M1802.9,492.9L1868.8,499.2" class="b"/><path d="M1854.7,563.1L1802.9,492.9" class="b"/><path d="M1743.3,433.5L1755.2,461.8" class="b"/><path d="M1854.7,563.1L1919.1,579.2" class="b"/><polygon fill="#f5be0b" points="1226.4,514.9 1228.3,510.2 1230.1,506.5 1230.1,512.6 1226.4,514.9"/><polygon fill="#e8900a" points="1230.1,506.5 1233.5,500.2 1237,494.7 1237,508.3 1230.1,512.6"/><polygon fill="#d9640a" points="1237,494.7 1239.8,490.6 1242.6,487 1245.4,483.8 1245.4,503 1237,508.3"/><polygon fill="#c8320a" points="1245.4,483.8 1249.1,480.2 1252.8,477.5 1256.5,475.6 1260.2,474.4 1260.2,493.6 1245.4,503"/><polygon fill="#d9640a" points="1260.2,474.4 1263,474.1 1265.8,474.2 1268.6,474.7 1268.6,488.3 1260.2,493.6"/><polygon fill="#e8900a" points="1268.6,474.7 1272.1,475.9 1275.5,477.8 1275.5,484 1268.6,488.3"/><polygon fill="#f5be0b" points="1275.5,477.8 1277.4,479.3 1279.2,481.6 1279.2,481.6 1275.5,484"/><path d="M1226.4,514.9L1279.2,481.6" class="b"/><path d="M1226.4,514.9L1231.7,511.6" class="y"/><path d="M1279.2,481.6L1273.9,485" class="y"/><path d="M1574,455.4L1565.6,399" class="b"/><polygon fill="#f5be0b" points="1868.8,499.2 1871.3,500.7 1873.8,502.9 1873.8,507.2 1868.8,499.2"/><polygon fill="#e8900a" points="1873.8,502.9 1877,506 1880.1,509.4 1883.3,513.1 1886.4,517.2 1886.4,527.2 1873.8,507.2"/><polygon fill="#e07b63" points="1886.4,517.2 1889.8,521.8 1893.1,526.9 1896.5,532.3 1899.8,538.1 1903.2,544.3 1906.5,550.9 1906.5,559.2 1886.4,527.2"/><polygon fill="#eda55d" points="1906.5,550.9 1909,556 1911.6,561.4 1914.1,566.9 1914.1,571.2 1906.5,559.2"/><polygon fill="#f5be0b" points="1914.1,566.9 1916.6,572.7 1919.1,579.2 1919.1,579.2 1914.1,571.2"/><path d="M1868.8,499.2L1919.1,579.2" class="b"/><path d="M1868.8,499.2L1873.8,507.2" class="y"/><path d="M1919.1,579.2L1914.1,571.2" class="y"/><path d="M1854.7,563.1L1868.8,499.2" class="b"/><path d="M1690.5,466.8L1688,405" class="b"/><path d="M1292.3,520L1279.2,481.6" class="b"/><path d="M1626.8,422.1L1635.2,438.3" class="b"/><polygon fill="#f5be0b" points="1755.2,461.8 1757.1,457.3 1758.9,453.8 1758.9,459.5 1755.2,461.8"/><polygon fill="#e8900a" points="1758.9,453.8 1762.4,447.8 1765.8,442.5 1765.8,455.1 1758.9,459.5"/><polygon fill="#d9640a" points="1765.8,442.5 1768.6,438.6 1771.4,435.1 1774.3,432 1774.3,449.8 1765.8,455.1"/><polygon fill="#c8320a" points="1774.3,432 1777.9,428.6 1781.6,425.9 1785.3,423.9 1789,422.7 1789,440.5 1774.3,449.8"/><polygon fill="#d9640a" points="1789,422.7 1791.9,422.2 1794.7,422.2 1797.5,422.6 1797.5,435.2 1789,440.5"/><polygon fill="#e8900a" points="1797.5,422.6 1800.9,423.5 1804.3,425.1 1804.3,430.8 1797.5,435.2"/><polygon fill="#f5be0b" points="1804.3,425.1 1806.2,426.4 1808,428.5 1808,428.5 1804.3,430.8"/><path d="M1755.2,461.8L1808,428.5" class="b"/><path d="M1755.2,461.8L1760.5,458.5" class="y"/><path d="M1808,428.5L1802.8,431.8" class="y"/><polygon fill="#f5be0b" points="1512.8,432.3 1514.7,427.7 1516.5,424.1 1516.5,430 1512.8,432.3"/><polygon fill="#e8900a" points="1516.5,424.1 1520,418 1523.4,412.6 1523.4,425.6 1516.5,430"/><polygon fill="#d9640a" points="1523.4,412.6 1526.2,408.7 1529,405.1 1531.9,402 1531.9,420.3 1523.4,425.6"/><polygon fill="#c8320a" points="1531.9,402 1535.5,398.5 1539.2,395.8 1542.9,393.8 1546.6,392.6 1546.6,411 1531.9,420.3"/><polygon fill="#d9640a" points="1546.6,392.6 1549.5,392.2 1552.3,392.2 1555.1,392.7 1555.1,405.7 1546.6,411"/><polygon fill="#e8900a" points="1555.1,392.7 1558.5,393.7 1561.9,395.5 1561.9,401.3 1555.1,405.7"/><polygon fill="#f5be0b" points="1561.9,395.5 1563.8,396.8 1565.6,399 1565.6,399 1561.9,401.3"/><path d="M1512.8,432.3L1565.6,399" class="b"/><path d="M1512.8,432.3L1518.1,429" class="y"/><path d="M1565.6,399L1560.4,402.3" class="y"/><path d="M1457.5,461.4L1392.8,446.3" class="b"/><path d="M1292.3,520L1345.1,486.7" class="b"/><polygon fill="#f5be0b" points="1688,405 1690.3,403.8 1692.7,403.4 1692.7,409 1688,405"/><polygon fill="#d04d63" points="1692.7,403.4 1696.5,403.3 1700.4,403.8 1704.3,404.7 1708.1,406.1 1708.1,422 1692.7,409"/><polygon fill="#b30303" points="1708.1,406.1 1712.8,408.3 1717.4,411.2 1722,414.8 1726.6,419.1 1731.2,424.1 1735.8,429.8 1740.4,436.1 1740.4,449.3 1708.1,422"/><polygon fill="#d04d63" points="1740.4,436.1 1743.8,441.1 1747.2,446.5 1750.5,452.2 1750.5,457.8 1740.4,449.3"/><polygon fill="#f5be0b" points="1750.5,452.2 1752.9,456.6 1755.2,461.8 1755.2,461.8 1750.5,457.8"/><path d="M1688,405L1755.2,461.8" class="b"/><path d="M1688,405L1694.7,410.7" class="y"/><path d="M1755.2,461.8L1748.5,456.1" class="y"/><polygon fill="#f5be0b" points="1565.6,399 1568.1,397 1570.5,395.9 1570.5,401.8 1565.6,399"/><polygon fill="#d04d63" points="1570.5,395.9 1574.5,394.7 1578.5,394 1582.5,393.8 1586.5,394.1 1586.5,410.8 1570.5,401.8"/><polygon fill="#b30303" points="1586.5,394.1 1591.3,395 1596,396.7 1600.8,399.1 1605.6,402.2 1610.3,406.1 1615.1,410.6 1619.9,415.8 1619.9,429.7 1586.5,410.8"/><polygon fill="#d04d63" points="1619.9,415.8 1623.3,420.1 1626.8,424.7 1630.3,429.7 1630.3,435.6 1619.9,429.7"/><polygon fill="#f5be0b" points="1630.3,429.7 1632.7,433.5 1635.2,438.3 1635.2,438.3 1630.3,435.6"/><path d="M1565.6,399L1635.2,438.3" class="b"/><path d="M1565.6,399L1572.6,402.9" class="y"/><path d="M1635.2,438.3L1628.2,434.4" class="y"/><polygon fill="#f5be0b" points="1070.5,604.7 1073.1,600.7 1075.8,597.4 1075.8,601.4 1070.5,604.7"/><polygon fill="#eda55d" points="1075.8,597.4 1079.3,593.4 1082.8,589.7 1086.3,586.3 1086.3,594.7 1075.8,601.4"/><polygon fill="#e8900a" points="1086.3,586.3 1089.8,583.2 1093.4,580.4 1096.9,578 1100.4,576 1103.9,574.3 1107.4,572.9 1107.4,581.4 1086.3,594.7"/><polygon fill="#eda55d" points="1107.4,572.9 1111,571.9 1114.5,571.2 1118,570.8 1118,574.7 1107.4,581.4"/><polygon fill="#f5be0b" points="1118,570.8 1120.6,570.8 1123.3,571.4 1123.3,571.4 1118,574.7"/><path d="M1070.5,604.7L1123.3,571.4" class="b"/><path d="M1070.5,604.7L1075.8,601.4" class="y"/><path d="M1123.3,571.4L1118,574.7" class="y"/><path d="M1802.9,492.9L1755.2,461.8" class="b"/><path d="M1187.7,565L1226.4,514.9" class="b"/><polygon fill="#f5be0b" points="1635.2,438.3 1637,433.8 1638.9,430.2 1638.9,436 1635.2,438.3"/><polygon fill="#e8900a" points="1638.9,430.2 1642.3,424.2 1645.7,418.8 1645.7,431.6 1638.9,436"/><polygon fill="#d9640a" points="1645.7,418.8 1648.5,414.9 1651.3,411.3 1654.2,408.2 1654.2,426.3 1645.7,431.6"/><polygon fill="#c8320a" points="1654.2,408.2 1657.9,404.8 1661.6,402.1 1665.3,400.1 1668.9,398.9 1668.9,417 1654.2,426.3"/><polygon fill="#d9640a" points="1668.9,398.9 1671.8,398.5 1674.6,398.5 1677.4,398.8 1677.4,411.7 1668.9,417"/><polygon fill="#e8900a" points="1677.4,398.8 1680.8,399.9 1684.3,401.5 1684.3,407.3 1677.4,411.7"/><polygon fill="#f5be0b" points="1684.3,401.5 1686.1,402.8 1688,405 1688,405 1684.3,407.3"/><path d="M1635.2,438.3L1688,405" class="b"/><path d="M1635.2,438.3L1640.4,435" class="y"/><path d="M1688,405L1682.7,408.3" class="y"/><polygon fill="#f5be0b" points="1279.2,481.6 1281.3,477.8 1283.5,475 1283.5,481.5 1279.2,481.6"/><polygon fill="#e8900a" points="1283.5,475 1287.4,470.6 1291.4,466.9 1291.4,481.2 1283.5,481.5"/><polygon fill="#d9640a" points="1291.4,466.9 1294.6,464.3 1297.8,462.2 1301.1,460.6 1301.1,480.9 1291.4,481.2"/><polygon fill="#c8320a" points="1301.1,460.6 1305.3,459.2 1309.6,458.6 1313.8,458.9 1318.1,460.1 1318.1,480.4 1301.1,480.9"/><polygon fill="#d9640a" points="1318.1,460.1 1321.3,461.5 1324.6,463.3 1327.8,465.7 1327.8,480 1318.1,480.4"/><polygon fill="#e8900a" points="1327.8,465.7 1331.8,469.1 1335.7,473.3 1335.7,479.8 1327.8,480"/><polygon fill="#f5be0b" points="1335.7,473.3 1337.8,476 1340,479.6 1340,479.6 1335.7,479.8"/><path d="M1279.2,481.6L1340,479.6" class="b"/><path d="M1279.2,481.6L1285.3,481.4" class="y"/><path d="M1340,479.6L1333.9,479.8" class="y"/><path d="M1750.1,526.2L1802.9,492.9" class="b"/><path d="M1457.5,461.4L1512.8,432.3" class="b"/><path d="M1134.9,598.3L1123.3,571.4" class="b"/><path d="M1404.7,494.7L1345.1,486.7" class="b"/><path d="M1345.1,486.7L1340,479.6" class="b"/><path d="M1802.9,492.9L1816,532.5" class="b"/><path d="M1690.5,466.8L1755.2,461.8" class="b"/><polygon fill="#f5be0b" points="1866.3,612.5 1869,608.6 1871.6,605.3 1871.6,609.2 1866.3,612.5"/><polygon fill="#eda55d" points="1871.6,605.3 1875.1,601.2 1878.6,597.5 1882.2,594.1 1882.2,602.5 1871.6,609.2"/><polygon fill="#e8900a" points="1882.2,594.1 1885.7,591 1889.2,588.3 1892.7,585.9 1896.2,583.8 1899.8,582.1 1903.3,580.8 1903.3,589.2 1882.2,602.5"/><polygon fill="#eda55d" points="1903.3,580.8 1906.8,579.7 1910.3,579 1913.8,578.6 1913.8,582.5 1903.3,589.2"/><polygon fill="#f5be0b" points="1913.8,578.6 1916.5,578.6 1919.1,579.2 1919.1,579.2 1913.8,582.5"/><path d="M1866.3,612.5L1919.1,579.2" class="b"/><path d="M1866.3,612.5L1871.6,609.2" class="y"/><path d="M1919.1,579.2L1913.8,582.5" class="y"/><path d="M1854.7,563.1L1866.3,612.5" class="b"/><path d="M1574,455.4L1512.8,432.3" class="b"/><path d="M1854.7,563.1L1816,532.5" class="b"/><path d="M1801.9,596.4L1854.7,563.1" class="b"/><polygon fill="#f5be0b" points="1816,532.5 1817.8,528 1819.7,524.4 1819.7,530.2 1816,532.5"/><polygon fill="#e8900a" points="1819.7,524.4 1823.1,518.5 1826.6,513.2 1826.6,525.8 1819.7,530.2"/><polygon fill="#d9640a" points="1826.6,513.2 1829.4,509.3 1832.2,505.8 1835,502.7 1835,520.5 1826.6,525.8"/><polygon fill="#c8320a" points="1835,502.7 1838.7,499.2 1842.4,496.5 1846.1,494.6 1849.8,493.4 1849.8,511.2 1835,520.5"/><polygon fill="#d9640a" points="1849.8,493.4 1852.6,492.9 1855.4,492.9 1858.2,493.2 1858.2,505.8 1849.8,511.2"/><polygon fill="#e8900a" points="1858.2,493.2 1861.7,494.2 1865.1,495.8 1865.1,501.5 1858.2,505.8"/><polygon fill="#f5be0b" points="1865.1,495.8 1866.9,497.1 1868.8,499.2 1868.8,499.2 1865.1,501.5"/><path d="M1816,532.5L1868.8,499.2" class="b"/><path d="M1816,532.5L1821.3,529.2" class="y"/><path d="M1868.8,499.2L1863.5,502.5" class="y"/><path d="M1690.5,466.8L1635.2,438.3" class="b"/><path d="M1134.9,598.3L1187.7,565" class="b"/><path d="M1750.1,526.2L1690.5,466.8" class="b"/><path d="M1292.3,520L1226.4,514.9" class="b"/><path d="M1574,455.4L1635.2,438.3" class="b"/><polygon fill="#f5be0b" points="1123.3,571.4 1125.3,567.2 1127.3,563.9 1127.3,569.5 1123.3,571.4"/><polygon fill="#e07b63" points="1127.3,563.9 1130.1,559.9 1132.8,556.3 1135.6,553 1138.4,550.1 1138.4,564.4 1127.3,569.5"/><polygon fill="#d9640a" points="1138.4,550.1 1141.5,547.3 1144.7,544.9 1147.8,543.1 1151,541.8 1151,558.7 1138.4,564.4"/><polygon fill="#c8320a" points="1151,541.8 1153.9,541.1 1156.7,540.8 1159.6,540.9 1162.5,541.5 1162.5,553.3 1151,558.7"/><polygon fill="#e8900a" points="1162.5,541.5 1166.1,542.7 1169.6,544.5 1169.6,550.1 1162.5,553.3"/><polygon fill="#f5be0b" points="1169.6,544.5 1171.6,545.9 1173.6,548.2 1173.6,548.2 1169.6,550.1"/><path d="M1123.3,571.4L1173.6,548.2" class="b"/><path d="M1123.3,571.4L1128.3,569.1" class="y"/><path d="M1173.6,548.2L1168.6,550.6" class="y"/><path d="M1404.7,494.7L1457.5,461.4" class="b"/><path d="M1404.7,494.7L1392.8,446.3" class="b"/><polygon fill="#f5be0b" points="1340,479.6 1341.8,475 1343.7,471.2 1343.7,477.3 1340,479.6"/><polygon fill="#e8900a" points="1343.7,471.2 1347.1,465.1 1350.5,459.6 1350.5,473 1343.7,477.3"/><polygon fill="#d9640a" points="1350.5,459.6 1353.3,455.5 1356.1,451.9 1359,448.7 1359,467.7 1350.5,473"/><polygon fill="#c8320a" points="1359,448.7 1362.7,445.2 1366.4,442.5 1370.1,440.6 1373.7,439.4 1373.7,458.3 1359,467.7"/><polygon fill="#d9640a" points="1373.7,439.4 1376.6,439 1379.4,439.1 1382.2,439.6 1382.2,453 1373.7,458.3"/><polygon fill="#e8900a" points="1382.2,439.6 1385.6,440.8 1389.1,442.6 1389.1,448.7 1382.2,453"/><polygon fill="#f5be0b" points="1389.1,442.6 1390.9,444 1392.8,446.3 1392.8,446.3 1389.1,448.7"/><path d="M1340,479.6L1392.8,446.3" class="b"/><path d="M1340,479.6L1345.2,476.3" class="y"/><path d="M1392.8,446.3L1387.5,449.7" class="y"/><path d="M1750.1,526.2L1755.2,461.8" class="b"/><path d="M1521.2,488.7L1457.5,461.4" class="b"/><path d="M1187.7,565L1173.6,548.2" class="b"/><path d="M1637.7,500.1L1690.5,466.8" class="b"/><polygon fill="#f5be0b" points="1755.2,461.8 1757.4,460.7 1759.5,460.5 1759.5,466.8 1755.2,461.8"/><polygon fill="#e8900a" points="1759.5,460.5 1763.4,461 1767.4,462.2 1767.4,475.9 1759.5,466.8"/><polygon fill="#d9640a" points="1767.4,462.2 1770.6,463.7 1773.9,465.5 1777.1,467.9 1777.1,487.3 1767.4,475.9"/><polygon fill="#c8320a" points="1777.1,467.9 1781.4,471.6 1785.6,476.1 1789.9,481.5 1794.1,487.7 1794.1,507 1777.1,487.3"/><polygon fill="#d9640a" points="1794.1,487.7 1797.4,492.9 1800.6,498.5 1803.8,504.6 1803.8,518.4 1794.1,507"/><polygon fill="#e8900a" points="1803.8,504.6 1807.8,512.6 1811.7,521.3 1811.7,527.5 1803.8,518.4"/><polygon fill="#f5be0b" points="1811.7,521.3 1813.9,526.4 1816,532.5 1816,532.5 1811.7,527.5"/><path d="M1755.2,461.8L1816,532.5" class="b"/><path d="M1755.2,461.8L1761.3,468.9" class="y"/><path d="M1816,532.5L1809.9,525.4" class="y"/><path d="M1637.7,500.1L1574,455.4" class="b"/><path d="M1521.2,488.7L1574,455.4" class="b"/><path d="M1239.5,553.3L1187.7,565" class="b"/><path d="M1457.5,461.4L1460,465.6" class="b"/><path d="M1134.9,598.3L1070.5,604.7" class="b"/><polygon fill="#f5be0b" points="1392.8,446.3 1395.1,443.3 1397.5,441.3 1397.5,447.7 1392.8,446.3"/><polygon fill="#d04d63" points="1397.5,441.3 1401.3,438.6 1405.2,436.5 1409.1,435 1412.9,433.9 1412.9,452.1 1397.5,447.7"/><polygon fill="#b30303" points="1412.9,433.9 1417.6,433.3 1422.2,433.5 1426.8,434.5 1431.4,436.3 1436,438.9 1440.6,442.2 1445.2,446.3 1445.2,461.4 1412.9,452.1"/><polygon fill="#d04d63" points="1445.2,446.3 1448.6,449.7 1452,453.6 1455.3,457.9 1455.3,464.3 1445.2,461.4"/><polygon fill="#f5be0b" points="1455.3,457.9 1457.7,461.2 1460,465.6 1460,465.6 1455.3,464.3"/><path d="M1392.8,446.3L1460,465.6" class="b"/><path d="M1392.8,446.3L1399.5,448.3" class="y"/><path d="M1460,465.6L1453.3,463.7" class="y"/><path d="M1292.3,520L1340,479.6" class="b"/><path d="M1750.1,526.2L1816,532.5" class="b"/><path d="M1801.9,596.4L1750.1,526.2" class="b"/><path d="M1690.5,466.8L1702.4,495.1" class="b"/><path d="M1801.9,596.4L1866.3,612.5" class="b"/><polygon fill="#f5be0b" points="1173.6,548.2 1175.5,543.5 1177.3,539.7 1177.3,545.9 1173.6,548.2"/><polygon fill="#e8900a" points="1177.3,539.7 1180.7,533.4 1184.2,527.8 1184.2,541.6 1177.3,545.9"/><polygon fill="#d9640a" points="1184.2,527.8 1187,523.7 1189.8,520 1192.6,516.8 1192.6,536.3 1184.2,541.6"/><polygon fill="#c8320a" points="1192.6,516.8 1196.3,513.2 1200,510.5 1203.7,508.6 1207.4,507.5 1207.4,526.9 1192.6,536.3"/><polygon fill="#d9640a" points="1207.4,507.5 1210.2,507.1 1213,507.3 1215.8,507.8 1215.8,521.6 1207.4,526.9"/><polygon fill="#e8900a" points="1215.8,507.8 1219.3,509.1 1222.7,511 1222.7,517.3 1215.8,521.6"/><polygon fill="#f5be0b" points="1222.7,511 1224.6,512.5 1226.4,514.9 1226.4,514.9 1222.7,517.3"/><path d="M1173.6,548.2L1226.4,514.9" class="b"/><path d="M1173.6,548.2L1178.9,544.9" class="y"/><path d="M1226.4,514.9L1221.1,518.3" class="y"/><path d="M1521.2,488.7L1512.8,432.3" class="b"/><polygon fill="#f5be0b" points="1816,532.5 1818,532.5 1820,533.3 1820,538.9 1816,532.5"/><polygon fill="#e07b63" points="1820,533.3 1822.8,534.9 1825.6,537 1828.3,539.4 1831.1,542.1 1831.1,556.5 1820,538.9"/><polygon fill="#d9640a" points="1831.1,542.1 1834.2,545.8 1837.4,549.9 1840.5,554.5 1843.7,559.7 1843.7,576.5 1831.1,556.5"/><polygon fill="#c8320a" points="1843.7,559.7 1846.6,564.9 1849.5,570.5 1852.3,576.6 1855.2,583.1 1855.2,594.9 1843.7,576.5"/><polygon fill="#e8900a" points="1855.2,583.1 1858.8,591.5 1862.3,600.5 1862.3,606.1 1855.2,594.9"/><polygon fill="#f5be0b" points="1862.3,600.5 1864.3,606.1 1866.3,612.5 1866.3,612.5 1862.3,606.1"/><path d="M1816,532.5L1866.3,612.5" class="b"/><path d="M1816,532.5L1821,540.5" class="y"/><path d="M1866.3,612.5L1861.3,604.5" class="y"/><path d="M1801.9,596.4L1816,532.5" class="b"/><path d="M1637.7,500.1L1635.2,438.3" class="b"/><path d="M1239.5,553.3L1226.4,514.9" class="b"/><path d="M1574,455.4L1582.4,471.6" class="b"/><polygon fill="#f5be0b" points="1702.4,495.1 1704.3,490.6 1706.1,487 1706.1,492.8 1702.4,495.1"/><polygon fill="#e8900a" points="1706.1,487 1709.6,481 1713,475.6 1713,488.4 1706.1,492.8"/><polygon fill="#d9640a" points="1713,475.6 1715.8,471.7 1718.6,468.2 1721.5,465 1721.5,483.1 1713,488.4"/><polygon fill="#c8320a" points="1721.5,465 1725.1,461.6 1728.8,458.9 1732.5,456.9 1736.2,455.7 1736.2,473.8 1721.5,483.1"/><polygon fill="#d9640a" points="1736.2,455.7 1739.1,455.3 1741.9,455.3 1744.7,455.7 1744.7,468.5 1736.2,473.8"/><polygon fill="#e8900a" points="1744.7,455.7 1748.1,456.7 1751.5,458.3 1751.5,464.1 1744.7,468.5"/><polygon fill="#f5be0b" points="1751.5,458.3 1753.4,459.6 1755.2,461.8 1755.2,461.8 1751.5,464.1"/><path d="M1702.4,495.1L1755.2,461.8" class="b"/><path d="M1702.4,495.1L1707.7,491.8" class="y"/><path d="M1755.2,461.8L1750,465.1" class="y"/><polygon fill="#f5be0b" points="1460,465.6 1461.9,461 1463.7,457.3 1463.7,463.3 1460,465.6"/><polygon fill="#e8900a" points="1463.7,457.3 1467.2,451.2 1470.6,445.7 1470.6,458.9 1463.7,463.3"/><polygon fill="#d9640a" points="1470.6,445.7 1473.4,441.7 1476.2,438.1 1479.1,435 1479.1,453.6 1470.6,458.9"/><polygon fill="#c8320a" points="1479.1,435 1482.7,431.5 1486.4,428.8 1490.1,426.8 1493.8,425.6 1493.8,444.3 1479.1,453.6"/><polygon fill="#d9640a" points="1493.8,425.6 1496.7,425.3 1499.5,425.3 1502.3,425.8 1502.3,439 1493.8,444.3"/><polygon fill="#e8900a" points="1502.3,425.8 1505.7,426.9 1509.1,428.7 1509.1,434.6 1502.3,439"/><polygon fill="#f5be0b" points="1509.1,428.7 1511,430 1512.8,432.3 1512.8,432.3 1509.1,434.6"/><path d="M1460,465.6L1512.8,432.3" class="b"/><path d="M1460,465.6L1465.3,462.3" class="y"/><path d="M1512.8,432.3L1507.6,435.6" class="y"/><path d="M1404.7,494.7L1340,479.6" class="b"/><path d="M1239.5,553.3L1292.3,520" class="b"/><polygon fill="#f5be0b" points="1635.2,438.3 1637.5,436.9 1639.9,436.4 1639.9,442.3 1635.2,438.3"/><polygon fill="#d04d63" points="1639.9,436.4 1643.7,436.2 1647.6,436.6 1651.5,437.4 1655.3,438.6 1655.3,455.3 1639.9,442.3"/><polygon fill="#b30303" points="1655.3,438.6 1660,440.8 1664.6,443.6 1669.2,447.2 1673.8,451.6 1678.4,456.6 1683,462.4 1687.6,468.8 1687.6,482.6 1655.3,455.3"/><polygon fill="#d04d63" points="1687.6,468.8 1691,473.9 1694.4,479.4 1697.7,485.3 1697.7,491.1 1687.6,482.6"/><polygon fill="#f5be0b" points="1697.7,485.3 1700.1,489.7 1702.4,495.1 1702.4,495.1 1697.7,491.1"/><path d="M1635.2,438.3L1702.4,495.1" class="b"/><path d="M1635.2,438.3L1641.9,444" class="y"/><path d="M1702.4,495.1L1695.7,489.4" class="y"/><polygon fill="#f5be0b" points="1512.8,432.3 1515.3,430.1 1517.7,428.9 1517.7,435.1 1512.8,432.3"/><polygon fill="#d04d63" points="1517.7,428.9 1521.7,427.6 1525.7,426.8 1529.7,426.4 1533.7,426.6 1533.7,444.1 1517.7,435.1"/><polygon fill="#b30303" points="1533.7,426.6 1538.5,427.5 1543.2,429.1 1548,431.5 1552.8,434.6 1557.5,438.5 1562.3,443.2 1567.1,448.5 1567.1,463 1533.7,444.1"/><polygon fill="#d04d63" points="1567.1,448.5 1570.5,452.9 1574,457.6 1577.5,462.7 1577.5,468.9 1567.1,463"/><polygon fill="#f5be0b" points="1577.5,462.7 1579.9,466.7 1582.4,471.6 1582.4,471.6 1577.5,468.9"/><path d="M1512.8,432.3L1582.4,471.6" class="b"/><path d="M1512.8,432.3L1519.8,436.2" class="y"/><path d="M1582.4,471.6L1575.4,467.7" class="y"/><polygon fill="#f5be0b" points="1017.7,638 1020.3,634 1023,630.7 1023,634.7 1017.7,638"/><polygon fill="#eda55d" points="1023,630.7 1026.5,626.7 1030,623 1033.5,619.6 1033.5,628 1023,634.7"/><polygon fill="#e8900a" points="1033.5,619.6 1037,616.5 1040.6,613.7 1044.1,611.3 1047.6,609.3 1051.1,607.6 1054.6,606.2 1054.6,614.7 1033.5,628"/><polygon fill="#eda55d" points="1054.6,606.2 1058.2,605.2 1061.7,604.5 1065.2,604.1 1065.2,608 1054.6,614.7"/><polygon fill="#f5be0b" points="1065.2,604.1 1067.8,604.1 1070.5,604.7 1070.5,604.7 1065.2,608"/><path d="M1017.7,638L1070.5,604.7" class="b"/><path d="M1017.7,638L1023,634.7" class="y"/><path d="M1070.5,604.7L1065.2,608" class="y"/><path d="M1750.1,526.2L1702.4,495.1" class="b"/><path d="M1134.9,598.3L1173.6,548.2" class="b"/><polygon fill="#f5be0b" points="1582.4,471.6 1584.2,467 1586.1,463.4 1586.1,469.3 1582.4,471.6"/><polygon fill="#e8900a" points="1586.1,463.4 1589.5,457.3 1592.9,451.9 1592.9,464.9 1586.1,469.3"/><polygon fill="#d9640a" points="1592.9,451.9 1595.7,448 1598.5,444.4 1601.4,441.2 1601.4,459.6 1592.9,464.9"/><polygon fill="#c8320a" points="1601.4,441.2 1605.1,437.8 1608.8,435.1 1612.5,433.1 1616.1,431.9 1616.1,450.3 1601.4,459.6"/><polygon fill="#d9640a" points="1616.1,431.9 1619,431.5 1621.8,431.5 1624.6,432 1624.6,445 1616.1,450.3"/><polygon fill="#e8900a" points="1624.6,432 1628,433 1631.5,434.7 1631.5,440.6 1624.6,445"/><polygon fill="#f5be0b" points="1631.5,434.7 1633.3,436.1 1635.2,438.3 1635.2,438.3 1631.5,440.6"/><path d="M1582.4,471.6L1635.2,438.3" class="b"/><path d="M1582.4,471.6L1587.6,468.3" class="y"/><path d="M1635.2,438.3L1629.9,441.6" class="y"/><polygon fill="#f5be0b" points="1226.4,514.9 1228.5,511.1 1230.7,508.3 1230.7,514.8 1226.4,514.9"/><polygon fill="#e8900a" points="1230.7,508.3 1234.6,503.9 1238.6,500.2 1238.6,514.5 1230.7,514.8"/><polygon fill="#d9640a" points="1238.6,500.2 1241.8,497.6 1245,495.5 1248.3,493.9 1248.3,514.2 1238.6,514.5"/><polygon fill="#c8320a" points="1248.3,493.9 1252.5,492.5 1256.8,491.9 1261,492.2 1265.3,493.4 1265.3,513.7 1248.3,514.2"/><polygon fill="#d9640a" points="1265.3,493.4 1268.5,494.8 1271.8,496.6 1275,499 1275,513.3 1265.3,513.7"/><polygon fill="#e8900a" points="1275,499 1279,502.4 1282.9,506.6 1282.9,513.1 1275,513.3"/><polygon fill="#f5be0b" points="1282.9,506.6 1285,509.3 1287.2,512.9 1287.2,512.9 1282.9,513.1"/><path d="M1226.4,514.9L1287.2,512.9" class="b"/><path d="M1226.4,514.9L1232.5,514.7" class="y"/><path d="M1287.2,512.9L1281.1,513.1" class="y"/><path d="M1697.3,559.5L1750.1,526.2" class="b"/><path d="M1404.7,494.7L1460,465.6" class="b"/><path d="M1082.1,631.6L1070.5,604.7" class="b"/><path d="M1351.9,528L1292.3,520" class="b"/><path d="M1292.3,520L1287.2,512.9" class="b"/><path d="M1750.1,526.2L1763.2,565.8" class="b"/><path d="M1637.7,500.1L1702.4,495.1" class="b"/><polygon fill="#f5be0b" points="1813.5,645.8 1816.2,641.9 1818.8,638.6 1818.8,642.5 1813.5,645.8"/><polygon fill="#eda55d" points="1818.8,638.6 1822.3,634.5 1825.8,630.8 1829.4,627.4 1829.4,635.8 1818.8,642.5"/><polygon fill="#e8900a" points="1829.4,627.4 1832.9,624.3 1836.4,621.6 1839.9,619.2 1843.4,617.1 1847,615.4 1850.5,614.1 1850.5,622.5 1829.4,635.8"/><polygon fill="#eda55d" points="1850.5,614.1 1854,613 1857.5,612.3 1861,611.9 1861,615.8 1850.5,622.5"/><polygon fill="#f5be0b" points="1861,611.9 1863.7,611.9 1866.3,612.5 1866.3,612.5 1861,615.8"/><path d="M1813.5,645.8L1866.3,612.5" class="b"/><path d="M1813.5,645.8L1818.8,642.5" class="y"/><path d="M1866.3,612.5L1861,615.8" class="y"/><path d="M1801.9,596.4L1813.5,645.8" class="b"/><path d="M1521.2,488.7L1460,465.6" class="b"/><path d="M1801.9,596.4L1763.2,565.8" class="b"/><path d="M1749.1,629.7L1801.9,596.4" class="b"/><polygon fill="#f5be0b" points="1763.2,565.8 1765,561.3 1766.9,557.7 1766.9,563.5 1763.2,565.8"/><polygon fill="#e8900a" points="1766.9,557.7 1770.3,551.7 1773.8,546.3 1773.8,559.1 1766.9,563.5"/><polygon fill="#d9640a" points="1773.8,546.3 1776.6,542.4 1779.4,538.8 1782.2,535.7 1782.2,553.8 1773.8,559.1"/><polygon fill="#c8320a" points="1782.2,535.7 1785.9,532.2 1789.6,529.5 1793.3,527.6 1797,526.4 1797,544.5 1782.2,553.8"/><polygon fill="#d9640a" points="1797,526.4 1799.8,526 1802.6,525.9 1805.4,526.3 1805.4,539.1 1797,544.5"/><polygon fill="#e8900a" points="1805.4,526.3 1808.9,527.4 1812.3,529 1812.3,534.8 1805.4,539.1"/><polygon fill="#f5be0b" points="1812.3,529 1814.1,530.3 1816,532.5 1816,532.5 1812.3,534.8"/><path d="M1763.2,565.8L1816,532.5" class="b"/><path d="M1763.2,565.8L1768.5,562.5" class="y"/><path d="M1816,532.5L1810.7,535.8" class="y"/><path d="M1637.7,500.1L1582.4,471.6" class="b"/><path d="M1082.1,631.6L1134.9,598.3" class="b"/><path d="M1697.3,559.5L1637.7,500.1" class="b"/><path d="M1239.5,553.3L1173.6,548.2" class="b"/><path d="M1521.2,488.7L1582.4,471.6" class="b"/><polygon fill="#f5be0b" points="1070.5,604.7 1072.5,600.5 1074.5,597.2 1074.5,602.8 1070.5,604.7"/><polygon fill="#e07b63" points="1074.5,597.2 1077.3,593.2 1080,589.6 1082.8,586.3 1085.6,583.4 1085.6,597.7 1074.5,602.8"/><polygon fill="#d9640a" points="1085.6,583.4 1088.7,580.6 1091.9,578.2 1095,576.4 1098.2,575.1 1098.2,592 1085.6,597.7"/><polygon fill="#c8320a" points="1098.2,575.1 1101.1,574.4 1103.9,574.1 1106.8,574.2 1109.7,574.8 1109.7,586.6 1098.2,592"/><polygon fill="#e8900a" points="1109.7,574.8 1113.3,576 1116.8,577.8 1116.8,583.4 1109.7,586.6"/><polygon fill="#f5be0b" points="1116.8,577.8 1118.8,579.2 1120.8,581.5 1120.8,581.5 1116.8,583.4"/><path d="M1070.5,604.7L1120.8,581.5" class="b"/><path d="M1070.5,604.7L1075.5,602.4" class="y"/><path d="M1120.8,581.5L1115.8,583.9" class="y"/><path d="M1351.9,528L1404.7,494.7" class="b"/><path d="M1351.9,528L1340,479.6" class="b"/><polygon fill="#f5be0b" points="1287.2,512.9 1289,508.2 1290.9,504.5 1290.9,510.6 1287.2,512.9"/><polygon fill="#e8900a" points="1290.9,504.5 1294.3,498.2 1297.7,492.7 1297.7,506.3 1290.9,510.6"/><polygon fill="#d9640a" points="1297.7,492.7 1300.5,488.6 1303.3,485 1306.2,481.8 1306.2,501 1297.7,506.3"/><polygon fill="#c8320a" points="1306.2,481.8 1309.9,478.2 1313.6,475.5 1317.3,473.6 1320.9,472.4 1320.9,491.6 1306.2,501"/><polygon fill="#d9640a" points="1320.9,472.4 1323.8,472.1 1326.6,472.2 1329.4,472.7 1329.4,486.3 1320.9,491.6"/><polygon fill="#e8900a" points="1329.4,472.7 1332.8,473.9 1336.3,475.8 1336.3,482 1329.4,486.3"/><polygon fill="#f5be0b" points="1336.3,475.8 1338.1,477.3 1340,479.6 1340,479.6 1336.3,482"/><path d="M1287.2,512.9L1340,479.6" class="b"/><path d="M1287.2,512.9L1292.4,509.6" class="y"/><path d="M1340,479.6L1334.7,483" class="y"/><path d="M1697.3,559.5L1702.4,495.1" class="b"/><path d="M1468.4,522L1404.7,494.7" class="b"/><path d="M1134.9,598.3L1120.8,581.5" class="b"/><path d="M1584.9,533.4L1637.7,500.1" class="b"/><polygon fill="#f5be0b" points="1702.4,495.1 1704.6,494 1706.7,493.8 1706.7,500.1 1702.4,495.1"/><polygon fill="#e8900a" points="1706.7,493.8 1710.6,494.3 1714.6,495.5 1714.6,509.2 1706.7,500.1"/><polygon fill="#d9640a" points="1714.6,495.5 1717.8,497 1721.1,498.8 1724.3,501.2 1724.3,520.6 1714.6,509.2"/><polygon fill="#c8320a" points="1724.3,501.2 1728.6,504.9 1732.8,509.4 1737.1,514.8 1741.3,521 1741.3,540.3 1724.3,520.6"/><polygon fill="#d9640a" points="1741.3,521 1744.6,526.2 1747.8,531.8 1751,537.9 1751,551.7 1741.3,540.3"/><polygon fill="#e8900a" points="1751,537.9 1755,545.9 1758.9,554.6 1758.9,560.8 1751,551.7"/><polygon fill="#f5be0b" points="1758.9,554.6 1761.1,559.7 1763.2,565.8 1763.2,565.8 1758.9,560.8"/><path d="M1702.4,495.1L1763.2,565.8" class="b"/><path d="M1702.4,495.1L1708.5,502.2" class="y"/><path d="M1763.2,565.8L1757.1,558.7" class="y"/><path d="M1584.9,533.4L1521.2,488.7" class="b"/><path d="M1468.4,522L1521.2,488.7" class="b"/><path d="M1186.7,586.6L1134.9,598.3" class="b"/><path d="M1404.7,494.7L1407.2,498.9" class="b"/><path d="M1082.1,631.6L1017.7,638" class="b"/><polygon fill="#f5be0b" points="1340,479.6 1342.3,476.5 1344.7,474.3 1344.7,481 1340,479.6"/><polygon fill="#d04d63" points="1344.7,474.3 1348.5,471.5 1352.4,469.3 1356.3,467.6 1360.1,466.4 1360.1,485.4 1344.7,481"/><polygon fill="#b30303" points="1360.1,466.4 1364.8,465.8 1369.4,465.9 1374,466.9 1378.6,468.7 1383.2,471.3 1387.8,474.8 1392.4,479 1392.4,494.7 1360.1,485.4"/><polygon fill="#d04d63" points="1392.4,479 1395.8,482.5 1399.2,486.5 1402.5,490.9 1402.5,497.6 1392.4,494.7"/><polygon fill="#f5be0b" points="1402.5,490.9 1404.9,494.4 1407.2,498.9 1407.2,498.9 1402.5,497.6"/><path d="M1340,479.6L1407.2,498.9" class="b"/><path d="M1340,479.6L1346.7,481.6" class="y"/><path d="M1407.2,498.9L1400.5,497" class="y"/><path d="M1239.5,553.3L1287.2,512.9" class="b"/><path d="M1697.3,559.5L1763.2,565.8" class="b"/><path d="M1749.1,629.7L1697.3,559.5" class="b"/><path d="M1637.7,500.1L1649.6,528.4" class="b"/><path d="M1749.1,629.7L1813.5,645.8" class="b"/><polygon fill="#f5be0b" points="1120.8,581.5 1122.7,576.7 1124.5,572.9 1124.5,579.2 1120.8,581.5"/><polygon fill="#e8900a" points="1124.5,572.9 1127.9,566.5 1131.4,560.9 1131.4,574.9 1124.5,579.2"/><polygon fill="#d9640a" points="1131.4,560.9 1134.2,556.8 1137,553.1 1139.8,549.8 1139.8,569.6 1131.4,574.9"/><polygon fill="#c8320a" points="1139.8,549.8 1143.5,546.2 1147.2,543.5 1150.9,541.6 1154.6,540.5 1154.6,560.2 1139.8,569.6"/><polygon fill="#d9640a" points="1154.6,540.5 1157.4,540.2 1160.2,540.3 1163,540.9 1163,554.9 1154.6,560.2"/><polygon fill="#e8900a" points="1163,540.9 1166.5,542.2 1169.9,544.2 1169.9,550.6 1163,554.9"/><polygon fill="#f5be0b" points="1169.9,544.2 1171.8,545.8 1173.6,548.2 1173.6,548.2 1169.9,550.6"/><path d="M1120.8,581.5L1173.6,548.2" class="b"/><path d="M1120.8,581.5L1126.1,578.2" class="y"/><path d="M1173.6,548.2L1168.3,551.6" class="y"/><path d="M1468.4,522L1460,465.6" class="b"/><polygon fill="#f5be0b" points="1763.2,565.8 1765.2,565.8 1767.2,566.6 1767.2,572.2 1763.2,565.8"/><polygon fill="#e07b63" points="1767.2,566.6 1770,568.2 1772.8,570.3 1775.5,572.7 1778.3,575.4 1778.3,589.8 1767.2,572.2"/><polygon fill="#d9640a" points="1778.3,575.4 1781.4,579.1 1784.6,583.2 1787.7,587.8 1790.9,593 1790.9,609.8 1778.3,589.8"/><polygon fill="#c8320a" points="1790.9,593 1793.8,598.2 1796.7,603.8 1799.5,609.9 1802.4,616.4 1802.4,628.2 1790.9,609.8"/><polygon fill="#e8900a" points="1802.4,616.4 1806,624.8 1809.5,633.8 1809.5,639.4 1802.4,628.2"/><polygon fill="#f5be0b" points="1809.5,633.8 1811.5,639.4 1813.5,645.8 1813.5,645.8 1809.5,639.4"/><path d="M1763.2,565.8L1813.5,645.8" class="b"/><path d="M1763.2,565.8L1768.2,573.8" class="y"/><path d="M1813.5,645.8L1808.5,637.8" class="y"/><path d="M1749.1,629.7L1763.2,565.8" class="b"/><path d="M1584.9,533.4L1582.4,471.6" class="b"/><path d="M1186.7,586.6L1173.6,548.2" class="b"/><path d="M1521.2,488.7L1529.6,504.9" class="b"/><polygon fill="#f5be0b" points="1649.6,528.4 1651.5,523.8 1653.3,520.2 1653.3,526.1 1649.6,528.4"/><polygon fill="#e8900a" points="1653.3,520.2 1656.8,514.1 1660.2,508.7 1660.2,521.7 1653.3,526.1"/><polygon fill="#d9640a" points="1660.2,508.7 1663,504.8 1665.8,501.2 1668.7,498.1 1668.7,516.4 1660.2,521.7"/><polygon fill="#c8320a" points="1668.7,498.1 1672.3,494.6 1676,491.9 1679.7,489.9 1683.4,488.7 1683.4,507.1 1668.7,516.4"/><polygon fill="#d9640a" points="1683.4,488.7 1686.3,488.3 1689.1,488.3 1691.9,488.8 1691.9,501.8 1683.4,507.1"/><polygon fill="#e8900a" points="1691.9,488.8 1695.3,489.8 1698.7,491.6 1698.7,497.4 1691.9,501.8"/><polygon fill="#f5be0b" points="1698.7,491.6 1700.6,492.9 1702.4,495.1 1702.4,495.1 1698.7,497.4"/><path d="M1649.6,528.4L1702.4,495.1" class="b"/><path d="M1649.6,528.4L1654.9,525.1" class="y"/><path d="M1702.4,495.1L1697.2,498.4" class="y"/><polygon fill="#f5be0b" points="1407.2,498.9 1409.1,494.2 1410.9,490.5 1410.9,496.6 1407.2,498.9"/><polygon fill="#e8900a" points="1410.9,490.5 1414.4,484.3 1417.8,478.8 1417.8,492.2 1410.9,496.6"/><polygon fill="#d9640a" points="1417.8,478.8 1420.6,474.8 1423.4,471.2 1426.3,468 1426.3,486.9 1417.8,492.2"/><polygon fill="#c8320a" points="1426.3,468 1429.9,464.5 1433.6,461.8 1437.3,459.8 1441,458.7 1441,477.6 1426.3,486.9"/><polygon fill="#d9640a" points="1441,458.7 1443.9,458.3 1446.7,458.4 1449.5,458.9 1449.5,472.3 1441,477.6"/><polygon fill="#e8900a" points="1449.5,458.9 1452.9,460 1456.3,461.9 1456.3,467.9 1449.5,472.3"/><polygon fill="#f5be0b" points="1456.3,461.9 1458.2,463.3 1460,465.6 1460,465.6 1456.3,467.9"/><path d="M1407.2,498.9L1460,465.6" class="b"/><path d="M1407.2,498.9L1412.5,495.6" class="y"/><path d="M1460,465.6L1454.8,468.9" class="y"/><path d="M1351.9,528L1287.2,512.9" class="b"/><path d="M1186.7,586.6L1239.5,553.3" class="b"/><polygon fill="#f5be0b" points="1582.4,471.6 1584.7,470.1 1587.1,469.5 1587.1,475.6 1582.4,471.6"/><polygon fill="#d04d63" points="1587.1,469.5 1590.9,469.1 1594.8,469.3 1598.7,470 1602.5,471.2 1602.5,488.6 1587.1,475.6"/><polygon fill="#b30303" points="1602.5,471.2 1607.2,473.2 1611.8,476.1 1616.4,479.6 1621,484 1625.6,489.1 1630.2,494.9 1634.8,501.5 1634.8,515.9 1602.5,488.6"/><polygon fill="#d04d63" points="1634.8,501.5 1638.2,506.7 1641.6,512.3 1644.9,518.3 1644.9,524.4 1634.8,515.9"/><polygon fill="#f5be0b" points="1644.9,518.3 1647.3,522.9 1649.6,528.4 1649.6,528.4 1644.9,524.4"/><path d="M1582.4,471.6L1649.6,528.4" class="b"/><path d="M1582.4,471.6L1589.1,477.3" class="y"/><path d="M1649.6,528.4L1642.9,522.7" class="y"/><polygon fill="#f5be0b" points="1460,465.6 1462.5,463.3 1464.9,462 1464.9,468.4 1460,465.6"/><polygon fill="#d04d63" points="1464.9,462 1468.9,460.4 1472.9,459.5 1476.9,459.1 1480.9,459.2 1480.9,477.4 1464.9,468.4"/><polygon fill="#b30303" points="1480.9,459.2 1485.7,460 1490.4,461.5 1495.2,463.9 1500,467 1504.7,471 1509.5,475.7 1514.3,481.2 1514.3,496.3 1480.9,477.4"/><polygon fill="#d04d63" points="1514.3,481.2 1517.7,485.6 1521.2,490.5 1524.7,495.8 1524.7,502.2 1514.3,496.3"/><polygon fill="#f5be0b" points="1524.7,495.8 1527.1,499.8 1529.6,504.9 1529.6,504.9 1524.7,502.2"/><path d="M1460,465.6L1529.6,504.9" class="b"/><path d="M1460,465.6L1467,469.5" class="y"/><path d="M1529.6,504.9L1522.6,501" class="y"/><path d="M1697.3,559.5L1649.6,528.4" class="b"/><path d="M1082.1,631.6L1120.8,581.5" class="b"/><polygon fill="#f5be0b" points="1529.6,504.9 1531.4,500.3 1533.3,496.6 1533.3,502.6 1529.6,504.9"/><polygon fill="#e8900a" points="1533.3,496.6 1536.7,490.5 1540.1,485 1540.1,498.2 1533.3,502.6"/><polygon fill="#d9640a" points="1540.1,485 1542.9,481 1545.7,477.4 1548.6,474.3 1548.6,492.9 1540.1,498.2"/><polygon fill="#c8320a" points="1548.6,474.3 1552.3,470.8 1556,468.1 1559.7,466.1 1563.3,464.9 1563.3,483.6 1548.6,492.9"/><polygon fill="#d9640a" points="1563.3,464.9 1566.2,464.6 1569,464.6 1571.8,465.1 1571.8,478.3 1563.3,483.6"/><polygon fill="#e8900a" points="1571.8,465.1 1575.2,466.2 1578.7,468 1578.7,473.9 1571.8,478.3"/><polygon fill="#f5be0b" points="1578.7,468 1580.5,469.3 1582.4,471.6 1582.4,471.6 1578.7,473.9"/><path d="M1529.6,504.9L1582.4,471.6" class="b"/><path d="M1529.6,504.9L1534.8,501.6" class="y"/><path d="M1582.4,471.6L1577.1,474.9" class="y"/><polygon fill="#f5be0b" points="1173.6,548.2 1175.7,544.4 1177.9,541.6 1177.9,548.1 1173.6,548.2"/><polygon fill="#e8900a" points="1177.9,541.6 1181.8,537.2 1185.8,533.5 1185.8,547.8 1177.9,548.1"/><polygon fill="#d9640a" points="1185.8,533.5 1189,530.9 1192.2,528.8 1195.5,527.2 1195.5,547.5 1185.8,547.8"/><polygon fill="#c8320a" points="1195.5,527.2 1199.7,525.8 1204,525.2 1208.2,525.5 1212.5,526.7 1212.5,547 1195.5,547.5"/><polygon fill="#d9640a" points="1212.5,526.7 1215.7,528.1 1219,529.9 1222.2,532.3 1222.2,546.6 1212.5,547"/><polygon fill="#e8900a" points="1222.2,532.3 1226.2,535.7 1230.1,539.9 1230.1,546.4 1222.2,546.6"/><polygon fill="#f5be0b" points="1230.1,539.9 1232.2,542.6 1234.4,546.2 1234.4,546.2 1230.1,546.4"/><path d="M1173.6,548.2L1234.4,546.2" class="b"/><path d="M1173.6,548.2L1179.7,548" class="y"/><path d="M1234.4,546.2L1228.3,546.4" class="y"/><path d="M1644.5,592.8L1697.3,559.5" class="b"/><path d="M1351.9,528L1407.2,498.9" class="b"/><path d="M1299.1,561.3L1239.5,553.3" class="b"/><path d="M1239.5,553.3L1234.4,546.2" class="b"/><path d="M1697.3,559.5L1710.4,599.1" class="b"/><path d="M1584.9,533.4L1649.6,528.4" class="b"/><polygon fill="#f5be0b" points="1760.7,679.1 1763.4,675.2 1766,671.9 1766,675.8 1760.7,679.1"/><polygon fill="#eda55d" points="1766,671.9 1769.5,667.8 1773,664.1 1776.6,660.7 1776.6,669.1 1766,675.8"/><polygon fill="#e8900a" points="1776.6,660.7 1780.1,657.6 1783.6,654.9 1787.1,652.5 1790.6,650.4 1794.2,648.7 1797.7,647.4 1797.7,655.8 1776.6,669.1"/><polygon fill="#eda55d" points="1797.7,647.4 1801.2,646.3 1804.7,645.6 1808.2,645.2 1808.2,649.1 1797.7,655.8"/><polygon fill="#f5be0b" points="1808.2,645.2 1810.9,645.2 1813.5,645.8 1813.5,645.8 1808.2,649.1"/><path d="M1760.7,679.1L1813.5,645.8" class="b"/><path d="M1760.7,679.1L1766,675.8" class="y"/><path d="M1813.5,645.8L1808.2,649.1" class="y"/><path d="M1749.1,629.7L1760.7,679.1" class="b"/><path d="M1468.4,522L1407.2,498.9" class="b"/><path d="M1749.1,629.7L1710.4,599.1" class="b"/><path d="M1696.3,663L1749.1,629.7" class="b"/><polygon fill="#f5be0b" points="1710.4,599.1 1712.2,594.5 1714.1,590.9 1714.1,596.8 1710.4,599.1"/><polygon fill="#e8900a" points="1714.1,590.9 1717.5,584.8 1721,579.4 1721,592.4 1714.1,596.8"/><polygon fill="#d9640a" points="1721,579.4 1723.8,575.4 1726.6,571.9 1729.4,568.7 1729.4,587.1 1721,592.4"/><polygon fill="#c8320a" points="1729.4,568.7 1733.1,565.3 1736.8,562.5 1740.5,560.6 1744.2,559.4 1744.2,577.8 1729.4,587.1"/><polygon fill="#d9640a" points="1744.2,559.4 1747,559 1749.8,559 1752.6,559.4 1752.6,572.4 1744.2,577.8"/><polygon fill="#e8900a" points="1752.6,559.4 1756.1,560.5 1759.5,562.2 1759.5,568.1 1752.6,572.4"/><polygon fill="#f5be0b" points="1759.5,562.2 1761.3,563.6 1763.2,565.8 1763.2,565.8 1759.5,568.1"/><path d="M1710.4,599.1L1763.2,565.8" class="b"/><path d="M1710.4,599.1L1715.7,595.8" class="y"/><path d="M1763.2,565.8L1757.9,569.1" class="y"/><path d="M1584.9,533.4L1529.6,504.9" class="b"/><path d="M1029.3,664.9L1082.1,631.6" class="b"/><path d="M1644.5,592.8L1584.9,533.4" class="b"/><path d="M1186.7,586.6L1120.8,581.5" class="b"/><path d="M1468.4,522L1529.6,504.9" class="b"/><polygon fill="#f5be0b" points="1017.7,638 1019.7,633.8 1021.7,630.5 1021.7,636.1 1017.7,638"/><polygon fill="#e07b63" points="1021.7,630.5 1024.5,626.5 1027.2,622.9 1030,619.6 1032.8,616.7 1032.8,631 1021.7,636.1"/><polygon fill="#d9640a" points="1032.8,616.7 1035.9,613.9 1039.1,611.5 1042.2,609.7 1045.4,608.4 1045.4,625.3 1032.8,631"/><polygon fill="#c8320a" points="1045.4,608.4 1048.3,607.7 1051.1,607.4 1054,607.5 1056.9,608.1 1056.9,619.9 1045.4,625.3"/><polygon fill="#e8900a" points="1056.9,608.1 1060.5,609.3 1064,611.1 1064,616.7 1056.9,619.9"/><polygon fill="#f5be0b" points="1064,611.1 1066,612.5 1068,614.8 1068,614.8 1064,616.7"/><path d="M1017.7,638L1068,614.8" class="b"/><path d="M1017.7,638L1022.7,635.7" class="y"/><path d="M1068,614.8L1063,617.2" class="y"/><path d="M1299.1,561.3L1351.9,528" class="b"/><path d="M1299.1,561.3L1287.2,512.9" class="b"/><polygon fill="#f5be0b" points="1234.4,546.2 1236.2,541.5 1238.1,537.7 1238.1,543.9 1234.4,546.2"/><polygon fill="#e8900a" points="1238.1,537.7 1241.5,531.4 1244.9,525.8 1244.9,539.6 1238.1,543.9"/><polygon fill="#d9640a" points="1244.9,525.8 1247.7,521.7 1250.5,518 1253.4,514.8 1253.4,534.3 1244.9,539.6"/><polygon fill="#c8320a" points="1253.4,514.8 1257.1,511.2 1260.8,508.5 1264.5,506.6 1268.1,505.5 1268.1,524.9 1253.4,534.3"/><polygon fill="#d9640a" points="1268.1,505.5 1271,505.1 1273.8,505.3 1276.6,505.8 1276.6,519.6 1268.1,524.9"/><polygon fill="#e8900a" points="1276.6,505.8 1280,507.1 1283.5,509 1283.5,515.3 1276.6,519.6"/><polygon fill="#f5be0b" points="1283.5,509 1285.3,510.5 1287.2,512.9 1287.2,512.9 1283.5,515.3"/><path d="M1234.4,546.2L1287.2,512.9" class="b"/><path d="M1234.4,546.2L1239.6,542.9" class="y"/><path d="M1287.2,512.9L1281.9,516.3" class="y"/><path d="M1644.5,592.8L1649.6,528.4" class="b"/><path d="M1415.6,555.3L1351.9,528" class="b"/><path d="M1082.1,631.6L1068,614.8" class="b"/><path d="M1532.1,566.7L1584.9,533.4" class="b"/><polygon fill="#f5be0b" points="1649.6,528.4 1651.8,527.3 1653.9,527.1 1653.9,533.4 1649.6,528.4"/><polygon fill="#e8900a" points="1653.9,527.1 1657.8,527.6 1661.8,528.8 1661.8,542.5 1653.9,533.4"/><polygon fill="#d9640a" points="1661.8,528.8 1665,530.3 1668.3,532.1 1671.5,534.5 1671.5,553.9 1661.8,542.5"/><polygon fill="#c8320a" points="1671.5,534.5 1675.8,538.2 1680,542.7 1684.3,548.1 1688.5,554.3 1688.5,573.6 1671.5,553.9"/><polygon fill="#d9640a" points="1688.5,554.3 1691.8,559.5 1695,565.1 1698.2,571.2 1698.2,585 1688.5,573.6"/><polygon fill="#e8900a" points="1698.2,571.2 1702.2,579.2 1706.1,587.9 1706.1,594.1 1698.2,585"/><polygon fill="#f5be0b" points="1706.1,587.9 1708.3,593 1710.4,599.1 1710.4,599.1 1706.1,594.1"/><path d="M1649.6,528.4L1710.4,599.1" class="b"/><path d="M1649.6,528.4L1655.7,535.5" class="y"/><path d="M1710.4,599.1L1704.3,592" class="y"/><path d="M1532.1,566.7L1468.4,522" class="b"/><path d="M1415.6,555.3L1468.4,522" class="b"/><path d="M1133.9,619.9L1082.1,631.6" class="b"/><path d="M1351.9,528L1354.4,532.2" class="b"/><polygon fill="#f5be0b" points="1287.2,512.9 1289.5,509.6 1291.9,507.4 1291.9,514.3 1287.2,512.9"/><polygon fill="#d04d63" points="1291.9,507.4 1295.7,504.4 1299.6,502 1303.5,500.2 1307.3,499 1307.3,518.7 1291.9,514.3"/><polygon fill="#b30303" points="1307.3,499 1312,498.2 1316.6,498.3 1321.2,499.3 1325.8,501.1 1330.4,503.8 1335,507.3 1339.6,511.6 1339.6,528 1307.3,518.7"/><polygon fill="#d04d63" points="1339.6,511.6 1343,515.3 1346.4,519.4 1349.7,523.9 1349.7,530.9 1339.6,528"/><polygon fill="#f5be0b" points="1349.7,523.9 1352.1,527.5 1354.4,532.2 1354.4,532.2 1349.7,530.9"/><path d="M1287.2,512.9L1354.4,532.2" class="b"/><path d="M1287.2,512.9L1293.9,514.9" class="y"/><path d="M1354.4,532.2L1347.7,530.3" class="y"/><path d="M1186.7,586.6L1234.4,546.2" class="b"/><path d="M1644.5,592.8L1710.4,599.1" class="b"/><path d="M1696.3,663L1644.5,592.8" class="b"/><path d="M1584.9,533.4L1596.8,561.7" class="b"/><path d="M1696.3,663L1760.7,679.1" class="b"/><polygon fill="#f5be0b" points="1068,614.8 1069.9,610 1071.7,606.1 1071.7,612.5 1068,614.8"/><polygon fill="#e8900a" points="1071.7,606.1 1075.1,599.7 1078.6,594 1078.6,608.2 1071.7,612.5"/><polygon fill="#d9640a" points="1078.6,594 1081.4,589.8 1084.2,586.1 1087,582.8 1087,602.9 1078.6,608.2"/><polygon fill="#c8320a" points="1087,582.8 1090.7,579.2 1094.4,576.5 1098.1,574.6 1101.8,573.5 1101.8,593.5 1087,602.9"/><polygon fill="#d9640a" points="1101.8,573.5 1104.6,573.2 1107.4,573.4 1110.2,574 1110.2,588.2 1101.8,593.5"/><polygon fill="#e8900a" points="1110.2,574 1113.7,575.4 1117.1,577.5 1117.1,583.9 1110.2,588.2"/><polygon fill="#f5be0b" points="1117.1,577.5 1119,579 1120.8,581.5 1120.8,581.5 1117.1,583.9"/><path d="M1068,614.8L1120.8,581.5" class="b"/><path d="M1068,614.8L1073.3,611.5" class="y"/><path d="M1120.8,581.5L1115.5,584.9" class="y"/><path d="M1415.6,555.3L1407.2,498.9" class="b"/><polygon fill="#f5be0b" points="1710.4,599.1 1712.4,599.1 1714.4,599.9 1714.4,605.5 1710.4,599.1"/><polygon fill="#e07b63" points="1714.4,599.9 1717.2,601.5 1720,603.6 1722.7,606 1725.5,608.7 1725.5,623.1 1714.4,605.5"/><polygon fill="#d9640a" points="1725.5,608.7 1728.6,612.4 1731.8,616.5 1734.9,621.1 1738.1,626.3 1738.1,643.1 1725.5,623.1"/><polygon fill="#c8320a" points="1738.1,626.3 1741,631.5 1743.9,637.1 1746.7,643.2 1749.6,649.7 1749.6,661.5 1738.1,643.1"/><polygon fill="#e8900a" points="1749.6,649.7 1753.2,658.1 1756.7,667.1 1756.7,672.7 1749.6,661.5"/><polygon fill="#f5be0b" points="1756.7,667.1 1758.7,672.7 1760.7,679.1 1760.7,679.1 1756.7,672.7"/><path d="M1710.4,599.1L1760.7,679.1" class="b"/><path d="M1710.4,599.1L1715.4,607.1" class="y"/><path d="M1760.7,679.1L1755.7,671.1" class="y"/><path d="M1696.3,663L1710.4,599.1" class="b"/><path d="M1532.1,566.7L1529.6,504.9" class="b"/><path d="M1133.9,619.9L1120.8,581.5" class="b"/><path d="M1468.4,522L1476.8,538.2" class="b"/><polygon fill="#f5be0b" points="1596.8,561.7 1598.7,557.1 1600.5,553.4 1600.5,559.4 1596.8,561.7"/><polygon fill="#e8900a" points="1600.5,553.4 1604,547.3 1607.4,541.8 1607.4,555 1600.5,559.4"/><polygon fill="#d9640a" points="1607.4,541.8 1610.2,537.8 1613,534.2 1615.9,531.1 1615.9,549.7 1607.4,555"/><polygon fill="#c8320a" points="1615.9,531.1 1619.5,527.6 1623.2,524.9 1626.9,522.9 1630.6,521.8 1630.6,540.4 1615.9,549.7"/><polygon fill="#d9640a" points="1630.6,521.8 1633.5,521.4 1636.3,521.4 1639.1,521.9 1639.1,535.1 1630.6,540.4"/><polygon fill="#e8900a" points="1639.1,521.9 1642.5,523 1645.9,524.8 1645.9,530.7 1639.1,535.1"/><polygon fill="#f5be0b" points="1645.9,524.8 1647.8,526.1 1649.6,528.4 1649.6,528.4 1645.9,530.7"/><path d="M1596.8,561.7L1649.6,528.4" class="b"/><path d="M1596.8,561.7L1602.1,558.4" class="y"/><path d="M1649.6,528.4L1644.4,531.7" class="y"/><polygon fill="#f5be0b" points="1354.4,532.2 1356.3,527.5 1358.1,523.7 1358.1,529.9 1354.4,532.2"/><polygon fill="#e8900a" points="1358.1,523.7 1361.6,517.5 1365,512 1365,525.5 1358.1,529.9"/><polygon fill="#d9640a" points="1365,512 1367.8,507.9 1370.6,504.2 1373.5,501 1373.5,520.2 1365,525.5"/><polygon fill="#c8320a" points="1373.5,501 1377.1,497.5 1380.8,494.8 1384.5,492.8 1388.2,491.7 1388.2,510.9 1373.5,520.2"/><polygon fill="#d9640a" points="1388.2,491.7 1391.1,491.4 1393.9,491.4 1396.7,492 1396.7,505.6 1388.2,510.9"/><polygon fill="#e8900a" points="1396.7,492 1400.1,493.2 1403.5,495.1 1403.5,501.2 1396.7,505.6"/><polygon fill="#f5be0b" points="1403.5,495.1 1405.4,496.5 1407.2,498.9 1407.2,498.9 1403.5,501.2"/><path d="M1354.4,532.2L1407.2,498.9" class="b"/><path d="M1354.4,532.2L1359.7,528.9" class="y"/><path d="M1407.2,498.9L1402,502.2" class="y"/><path d="M1299.1,561.3L1234.4,546.2" class="b"/><path d="M1133.9,619.9L1186.7,586.6" class="b"/><polygon fill="#f5be0b" points="1529.6,504.9 1531.9,503.2 1534.3,502.5 1534.3,508.9 1529.6,504.9"/><polygon fill="#d04d63" points="1534.3,502.5 1538.1,502 1542,502 1545.9,502.6 1549.7,503.7 1549.7,521.9 1534.3,508.9"/><polygon fill="#b30303" points="1549.7,503.7 1554.4,505.7 1559,508.5 1563.6,512 1568.2,516.4 1572.8,521.5 1577.4,527.5 1582,534.1 1582,549.2 1549.7,521.9"/><polygon fill="#d04d63" points="1582,534.1 1585.4,539.5 1588.8,545.2 1592.1,551.3 1592.1,557.7 1582,549.2"/><polygon fill="#f5be0b" points="1592.1,551.3 1594.5,556 1596.8,561.7 1596.8,561.7 1592.1,557.7"/><path d="M1529.6,504.9L1596.8,561.7" class="b"/><path d="M1529.6,504.9L1536.3,510.6" class="y"/><path d="M1596.8,561.7L1590.1,556" class="y"/><polygon fill="#f5be0b" points="1407.2,498.9 1409.7,496.4 1412.1,495 1412.1,501.7 1407.2,498.9"/><polygon fill="#d04d63" points="1412.1,495 1416.1,493.3 1420.1,492.3 1424.1,491.7 1428.1,491.7 1428.1,510.7 1412.1,501.7"/><polygon fill="#b30303" points="1428.1,491.7 1432.9,492.4 1437.6,493.9 1442.4,496.3 1447.2,499.5 1451.9,503.5 1456.7,508.3 1461.5,513.9 1461.5,529.6 1428.1,510.7"/><polygon fill="#d04d63" points="1461.5,513.9 1464.9,518.4 1468.4,523.4 1471.9,528.8 1471.9,535.5 1461.5,529.6"/><polygon fill="#f5be0b" points="1471.9,528.8 1474.3,533 1476.8,538.2 1476.8,538.2 1471.9,535.5"/><path d="M1407.2,498.9L1476.8,538.2" class="b"/><path d="M1407.2,498.9L1414.2,502.8" class="y"/><path d="M1476.8,538.2L1469.8,534.3" class="y"/><path d="M1644.5,592.8L1596.8,561.7" class="b"/><path d="M1029.3,664.9L1068,614.8" class="b"/><polygon fill="#f5be0b" points="1476.8,538.2 1478.6,533.5 1480.5,529.8 1480.5,535.9 1476.8,538.2"/><polygon fill="#e8900a" points="1480.5,529.8 1483.9,523.6 1487.3,518.1 1487.3,531.5 1480.5,535.9"/><polygon fill="#d9640a" points="1487.3,518.1 1490.1,514.1 1492.9,510.5 1495.8,507.3 1495.8,526.2 1487.3,531.5"/><polygon fill="#c8320a" points="1495.8,507.3 1499.5,503.8 1503.2,501.1 1506.9,499.1 1510.5,498 1510.5,516.9 1495.8,526.2"/><polygon fill="#d9640a" points="1510.5,498 1513.4,497.6 1516.2,497.7 1519,498.2 1519,511.6 1510.5,516.9"/><polygon fill="#e8900a" points="1519,498.2 1522.4,499.3 1525.9,501.2 1525.9,507.2 1519,511.6"/><polygon fill="#f5be0b" points="1525.9,501.2 1527.7,502.6 1529.6,504.9 1529.6,504.9 1525.9,507.2"/><path d="M1476.8,538.2L1529.6,504.9" class="b"/><path d="M1476.8,538.2L1482,534.9" class="y"/><path d="M1529.6,504.9L1524.3,508.2" class="y"/><polygon fill="#f5be0b" points="1120.8,581.5 1122.9,577.7 1125.1,574.9 1125.1,581.4 1120.8,581.5"/><polygon fill="#e8900a" points="1125.1,574.9 1129,570.5 1133,566.8 1133,581.1 1125.1,581.4"/><polygon fill="#d9640a" points="1133,566.8 1136.2,564.2 1139.4,562.1 1142.7,560.5 1142.7,580.8 1133,581.1"/><polygon fill="#c8320a" points="1142.7,560.5 1146.9,559.1 1151.2,558.5 1155.4,558.8 1159.7,560 1159.7,580.3 1142.7,580.8"/><polygon fill="#d9640a" points="1159.7,560 1162.9,561.4 1166.2,563.2 1169.4,565.6 1169.4,579.9 1159.7,580.3"/><polygon fill="#e8900a" points="1169.4,565.6 1173.4,569 1177.3,573.2 1177.3,579.7 1169.4,579.9"/><polygon fill="#f5be0b" points="1177.3,573.2 1179.4,575.9 1181.6,579.5 1181.6,579.5 1177.3,579.7"/><path d="M1120.8,581.5L1181.6,579.5" class="b"/><path d="M1120.8,581.5L1126.9,581.3" class="y"/><path d="M1181.6,579.5L1175.5,579.7" class="y"/><path d="M1591.7,626.1L1644.5,592.8" class="b"/><path d="M1299.1,561.3L1354.4,532.2" class="b"/><path d="M1246.3,594.6L1186.7,586.6" class="b"/><path d="M1186.7,586.6L1181.6,579.5" class="b"/><path d="M1644.5,592.8L1657.6,632.4" class="b"/><path d="M1532.1,566.7L1596.8,561.7" class="b"/><polygon fill="#f5be0b" points="1707.9,712.4 1710.6,708.5 1713.2,705.2 1713.2,709.1 1707.9,712.4"/><polygon fill="#eda55d" points="1713.2,705.2 1716.7,701.1 1720.2,697.4 1723.8,694 1723.8,702.4 1713.2,709.1"/><polygon fill="#e8900a" points="1723.8,694 1727.3,690.9 1730.8,688.2 1734.3,685.8 1737.8,683.7 1741.4,682 1744.9,680.7 1744.9,689.1 1723.8,702.4"/><polygon fill="#eda55d" points="1744.9,680.7 1748.4,679.6 1751.9,678.9 1755.4,678.5 1755.4,682.4 1744.9,689.1"/><polygon fill="#f5be0b" points="1755.4,678.5 1758.1,678.5 1760.7,679.1 1760.7,679.1 1755.4,682.4"/><path d="M1707.9,712.4L1760.7,679.1" class="b"/><path d="M1707.9,712.4L1713.2,709.1" class="y"/><path d="M1760.7,679.1L1755.4,682.4" class="y"/><path d="M1696.3,663L1707.9,712.4" class="b"/><path d="M1415.6,555.3L1354.4,532.2" class="b"/><path d="M1696.3,663L1657.6,632.4" class="b"/><path d="M1643.5,696.3L1696.3,663" class="b"/><polygon fill="#f5be0b" points="1657.6,632.4 1659.4,627.8 1661.3,624.1 1661.3,630.1 1657.6,632.4"/><polygon fill="#e8900a" points="1661.3,624.1 1664.7,618 1668.2,612.5 1668.2,625.7 1661.3,630.1"/><polygon fill="#d9640a" points="1668.2,612.5 1671,608.5 1673.8,604.9 1676.6,601.8 1676.6,620.4 1668.2,625.7"/><polygon fill="#c8320a" points="1676.6,601.8 1680.3,598.3 1684,595.5 1687.7,593.6 1691.4,592.4 1691.4,611.1 1676.6,620.4"/><polygon fill="#d9640a" points="1691.4,592.4 1694.2,592 1697,592.1 1699.8,592.5 1699.8,605.7 1691.4,611.1"/><polygon fill="#e8900a" points="1699.8,592.5 1703.3,593.7 1706.7,595.4 1706.7,601.4 1699.8,605.7"/><polygon fill="#f5be0b" points="1706.7,595.4 1708.5,596.8 1710.4,599.1 1710.4,599.1 1706.7,601.4"/><path d="M1657.6,632.4L1710.4,599.1" class="b"/><path d="M1657.6,632.4L1662.9,629.1" class="y"/><path d="M1710.4,599.1L1705.1,602.4" class="y"/><path d="M1532.1,566.7L1476.8,538.2" class="b"/><path d="M1591.7,626.1L1532.1,566.7" class="b"/><path d="M1133.9,619.9L1068,614.8" class="b"/><path d="M1415.6,555.3L1476.8,538.2" class="b"/><path d="M1246.3,594.6L1299.1,561.3" class="b"/><path d="M1246.3,594.6L1234.4,546.2" class="b"/><polygon fill="#f5be0b" points="1181.6,579.5 1183.4,574.7 1185.3,570.9 1185.3,577.2 1181.6,579.5"/><polygon fill="#e8900a" points="1185.3,570.9 1188.7,564.5 1192.1,558.9 1192.1,572.9 1185.3,577.2"/><polygon fill="#d9640a" points="1192.1,558.9 1194.9,554.8 1197.7,551.1 1200.6,547.8 1200.6,567.6 1192.1,572.9"/><polygon fill="#c8320a" points="1200.6,547.8 1204.3,544.2 1208,541.5 1211.7,539.6 1215.3,538.5 1215.3,558.2 1200.6,567.6"/><polygon fill="#d9640a" points="1215.3,538.5 1218.2,538.2 1221,538.3 1223.8,538.9 1223.8,552.9 1215.3,558.2"/><polygon fill="#e8900a" points="1223.8,538.9 1227.2,540.2 1230.7,542.2 1230.7,548.6 1223.8,552.9"/><polygon fill="#f5be0b" points="1230.7,542.2 1232.5,543.8 1234.4,546.2 1234.4,546.2 1230.7,548.6"/><path d="M1181.6,579.5L1234.4,546.2" class="b"/><path d="M1181.6,579.5L1186.8,576.2" class="y"/><path d="M1234.4,546.2L1229.1,549.6" class="y"/><path d="M1591.7,626.1L1596.8,561.7" class="b"/><path d="M1362.8,588.6L1299.1,561.3" class="b"/><path d="M1479.3,600L1532.1,566.7" class="b"/><polygon fill="#f5be0b" points="1596.8,561.7 1599,560.6 1601.1,560.4 1601.1,566.7 1596.8,561.7"/><polygon fill="#e8900a" points="1601.1,560.4 1605,560.9 1609,562.1 1609,575.8 1601.1,566.7"/><polygon fill="#d9640a" points="1609,562.1 1612.2,563.6 1615.5,565.4 1618.7,567.8 1618.7,587.2 1609,575.8"/><polygon fill="#c8320a" points="1618.7,567.8 1623,571.5 1627.2,576 1631.5,581.4 1635.7,587.6 1635.7,606.9 1618.7,587.2"/><polygon fill="#d9640a" points="1635.7,587.6 1639,592.8 1642.2,598.4 1645.4,604.5 1645.4,618.3 1635.7,606.9"/><polygon fill="#e8900a" points="1645.4,604.5 1649.4,612.5 1653.3,621.2 1653.3,627.4 1645.4,618.3"/><polygon fill="#f5be0b" points="1653.3,621.2 1655.5,626.3 1657.6,632.4 1657.6,632.4 1653.3,627.4"/><path d="M1596.8,561.7L1657.6,632.4" class="b"/><path d="M1596.8,561.7L1602.9,568.8" class="y"/><path d="M1657.6,632.4L1651.5,625.3" class="y"/><path d="M1479.3,600L1415.6,555.3" class="b"/><path d="M1362.8,588.6L1415.6,555.3" class="b"/><path d="M1081.1,653.2L1029.3,664.9" class="b"/><path d="M1299.1,561.3L1301.6,565.5" class="b"/><polygon fill="#f5be0b" points="1234.4,546.2 1236.7,542.8 1239.1,540.4 1239.1,547.6 1234.4,546.2"/><polygon fill="#d04d63" points="1239.1,540.4 1242.9,537.3 1246.8,534.8 1250.7,532.9 1254.5,531.5 1254.5,552 1239.1,547.6"/><polygon fill="#b30303" points="1254.5,531.5 1259.2,530.7 1263.8,530.7 1268.4,531.7 1273,533.5 1277.6,536.3 1282.2,539.9 1286.8,544.3 1286.8,561.3 1254.5,552"/><polygon fill="#d04d63" points="1286.8,544.3 1290.2,548.1 1293.6,552.3 1296.9,557 1296.9,564.2 1286.8,561.3"/><polygon fill="#f5be0b" points="1296.9,557 1299.3,560.7 1301.6,565.5 1301.6,565.5 1296.9,564.2"/><path d="M1234.4,546.2L1301.6,565.5" class="b"/><path d="M1234.4,546.2L1241.1,548.2" class="y"/><path d="M1301.6,565.5L1294.9,563.6" class="y"/><path d="M1133.9,619.9L1181.6,579.5" class="b"/><path d="M1591.7,626.1L1657.6,632.4" class="b"/><path d="M1643.5,696.3L1591.7,626.1" class="b"/><path d="M1532.1,566.7L1544,595" class="b"/><path d="M1643.5,696.3L1707.9,712.4" class="b"/><polygon fill="#f5be0b" points="1015.2,648.1 1017.1,643.2 1018.9,639.3 1018.9,645.8 1015.2,648.1"/><polygon fill="#e8900a" points="1018.9,639.3 1022.3,632.8 1025.8,627.1 1025.8,641.5 1018.9,645.8"/><polygon fill="#d9640a" points="1025.8,627.1 1028.6,622.9 1031.4,619.1 1034.2,615.8 1034.2,636.2 1025.8,641.5"/><polygon fill="#c8320a" points="1034.2,615.8 1037.9,612.2 1041.6,609.5 1045.3,607.6 1049,606.5 1049,626.8 1034.2,636.2"/><polygon fill="#d9640a" points="1049,606.5 1051.8,606.3 1054.6,606.5 1057.4,607.1 1057.4,621.5 1049,626.8"/><polygon fill="#e8900a" points="1057.4,607.1 1060.9,608.5 1064.3,610.7 1064.3,617.2 1057.4,621.5"/><polygon fill="#f5be0b" points="1064.3,610.7 1066.2,612.3 1068,614.8 1068,614.8 1064.3,617.2"/><path d="M1015.2,648.1L1068,614.8" class="b"/><path d="M1015.2,648.1L1020.5,644.8" class="y"/><path d="M1068,614.8L1062.7,618.2" class="y"/><path d="M1362.8,588.6L1354.4,532.2" class="b"/><polygon fill="#f5be0b" points="1657.6,632.4 1659.6,632.4 1661.6,633.2 1661.6,638.8 1657.6,632.4"/><polygon fill="#e07b63" points="1661.6,633.2 1664.4,634.8 1667.2,636.9 1669.9,639.3 1672.7,642 1672.7,656.4 1661.6,638.8"/><polygon fill="#d9640a" points="1672.7,642 1675.8,645.7 1679,649.8 1682.1,654.4 1685.3,659.6 1685.3,676.4 1672.7,656.4"/><polygon fill="#c8320a" points="1685.3,659.6 1688.2,664.8 1691.1,670.4 1693.9,676.5 1696.8,683 1696.8,694.8 1685.3,676.4"/><polygon fill="#e8900a" points="1696.8,683 1700.4,691.4 1703.9,700.4 1703.9,706 1696.8,694.8"/><polygon fill="#f5be0b" points="1703.9,700.4 1705.9,706 1707.9,712.4 1707.9,712.4 1703.9,706"/><path d="M1657.6,632.4L1707.9,712.4" class="b"/><path d="M1657.6,632.4L1662.6,640.4" class="y"/><path d="M1707.9,712.4L1702.9,704.4" class="y"/><path d="M1643.5,696.3L1657.6,632.4" class="b"/><path d="M1479.3,600L1476.8,538.2" class="b"/><path d="M1081.1,653.2L1068,614.8" class="b"/><path d="M1415.6,555.3L1424,571.5" class="b"/><polygon fill="#f5be0b" points="1544,595 1545.9,590.3 1547.7,586.6 1547.7,592.7 1544,595"/><polygon fill="#e8900a" points="1547.7,586.6 1551.2,580.4 1554.6,574.9 1554.6,588.3 1547.7,592.7"/><polygon fill="#d9640a" points="1554.6,574.9 1557.4,570.9 1560.2,567.3 1563.1,564.1 1563.1,583 1554.6,588.3"/><polygon fill="#c8320a" points="1563.1,564.1 1566.7,560.6 1570.4,557.9 1574.1,555.9 1577.8,554.8 1577.8,573.7 1563.1,583"/><polygon fill="#d9640a" points="1577.8,554.8 1580.7,554.4 1583.5,554.5 1586.3,555 1586.3,568.4 1577.8,573.7"/><polygon fill="#e8900a" points="1586.3,555 1589.7,556.1 1593.1,558 1593.1,564 1586.3,568.4"/><polygon fill="#f5be0b" points="1593.1,558 1595,559.4 1596.8,561.7 1596.8,561.7 1593.1,564"/><path d="M1544,595L1596.8,561.7" class="b"/><path d="M1544,595L1549.3,591.7" class="y"/><path d="M1596.8,561.7L1591.6,565" class="y"/><polygon fill="#f5be0b" points="1301.6,565.5 1303.5,560.7 1305.3,556.9 1305.3,563.2 1301.6,565.5"/><polygon fill="#e8900a" points="1305.3,556.9 1308.8,550.6 1312.2,545.1 1312.2,558.8 1305.3,563.2"/><polygon fill="#d9640a" points="1312.2,545.1 1315,540.9 1317.8,537.3 1320.7,534 1320.7,553.5 1312.2,558.8"/><polygon fill="#c8320a" points="1320.7,534 1324.3,530.5 1328,527.8 1331.7,525.8 1335.4,524.7 1335.4,544.2 1320.7,553.5"/><polygon fill="#d9640a" points="1335.4,524.7 1338.3,524.4 1341.1,524.5 1343.9,525.1 1343.9,538.9 1335.4,544.2"/><polygon fill="#e8900a" points="1343.9,525.1 1347.3,526.3 1350.7,528.3 1350.7,534.5 1343.9,538.9"/><polygon fill="#f5be0b" points="1350.7,528.3 1352.6,529.8 1354.4,532.2 1354.4,532.2 1350.7,534.5"/><path d="M1301.6,565.5L1354.4,532.2" class="b"/><path d="M1301.6,565.5L1306.9,562.2" class="y"/><path d="M1354.4,532.2L1349.2,535.5" class="y"/><path d="M1246.3,594.6L1181.6,579.5" class="b"/><path d="M1081.1,653.2L1133.9,619.9" class="b"/><polygon fill="#f5be0b" points="1476.8,538.2 1479.1,536.3 1481.5,535.5 1481.5,542.2 1476.8,538.2"/><polygon fill="#d04d63" points="1481.5,535.5 1485.3,534.9 1489.2,534.8 1493.1,535.3 1496.9,536.3 1496.9,555.2 1481.5,542.2"/><polygon fill="#b30303" points="1496.9,536.3 1501.6,538.2 1506.2,540.9 1510.8,544.4 1515.4,548.8 1520,554 1524.6,560 1529.2,566.8 1529.2,582.5 1496.9,555.2"/><polygon fill="#d04d63" points="1529.2,566.8 1532.6,572.2 1536,578.1 1539.3,584.4 1539.3,591 1529.2,582.5"/><polygon fill="#f5be0b" points="1539.3,584.4 1541.7,589.2 1544,595 1544,595 1539.3,591"/><path d="M1476.8,538.2L1544,595" class="b"/><path d="M1476.8,538.2L1483.5,543.9" class="y"/><path d="M1544,595L1537.3,589.3" class="y"/><polygon fill="#f5be0b" points="1354.4,532.2 1356.9,529.6 1359.3,528 1359.3,535 1354.4,532.2"/><polygon fill="#d04d63" points="1359.3,528 1363.3,526.2 1367.3,525 1371.3,524.3 1375.3,524.2 1375.3,544 1359.3,535"/><polygon fill="#b30303" points="1375.3,524.2 1380.1,524.9 1384.8,526.3 1389.6,528.7 1394.4,531.9 1399.1,535.9 1403.9,540.8 1408.7,546.5 1408.7,562.9 1375.3,544"/><polygon fill="#d04d63" points="1408.7,546.5 1412.1,551.2 1415.6,556.3 1419.1,561.8 1419.1,568.8 1408.7,562.9"/><polygon fill="#f5be0b" points="1419.1,561.8 1421.5,566.1 1424,571.5 1424,571.5 1419.1,568.8"/><path d="M1354.4,532.2L1424,571.5" class="b"/><path d="M1354.4,532.2L1361.4,536.1" class="y"/><path d="M1424,571.5L1417,567.6" class="y"/><path d="M1591.7,626.1L1544,595" class="b"/><polygon fill="#f5be0b" points="1424,571.5 1425.8,566.8 1427.7,563 1427.7,569.2 1424,571.5"/><polygon fill="#e8900a" points="1427.7,563 1431.1,556.8 1434.5,551.2 1434.5,564.8 1427.7,569.2"/><polygon fill="#d9640a" points="1434.5,551.2 1437.3,547.2 1440.1,543.5 1443,540.3 1443,559.5 1434.5,564.8"/><polygon fill="#c8320a" points="1443,540.3 1446.7,536.8 1450.4,534.1 1454.1,532.1 1457.7,531 1457.7,550.2 1443,559.5"/><polygon fill="#d9640a" points="1457.7,531 1460.6,530.6 1463.4,530.7 1466.2,531.3 1466.2,544.9 1457.7,550.2"/><polygon fill="#e8900a" points="1466.2,531.3 1469.6,532.5 1473.1,534.4 1473.1,540.5 1466.2,544.9"/><polygon fill="#f5be0b" points="1473.1,534.4 1474.9,535.8 1476.8,538.2 1476.8,538.2 1473.1,540.5"/><path d="M1424,571.5L1476.8,538.2" class="b"/><path d="M1424,571.5L1429.2,568.2" class="y"/><path d="M1476.8,538.2L1471.5,541.5" class="y"/><polygon fill="#f5be0b" points="1068,614.8 1070.1,611 1072.3,608.2 1072.3,614.7 1068,614.8"/><polygon fill="#e8900a" points="1072.3,608.2 1076.2,603.8 1080.2,600.1 1080.2,614.4 1072.3,614.7"/><polygon fill="#d9640a" points="1080.2,600.1 1083.4,597.5 1086.6,595.4 1089.9,593.8 1089.9,614.1 1080.2,614.4"/><polygon fill="#c8320a" points="1089.9,593.8 1094.1,592.4 1098.4,591.8 1102.6,592.1 1106.9,593.3 1106.9,613.6 1089.9,614.1"/><polygon fill="#d9640a" points="1106.9,593.3 1110.1,594.7 1113.4,596.5 1116.6,598.9 1116.6,613.2 1106.9,613.6"/><polygon fill="#e8900a" points="1116.6,598.9 1120.6,602.3 1124.5,606.5 1124.5,613 1116.6,613.2"/><polygon fill="#f5be0b" points="1124.5,606.5 1126.6,609.2 1128.8,612.8 1128.8,612.8 1124.5,613"/><path d="M1068,614.8L1128.8,612.8" class="b"/><path d="M1068,614.8L1074.1,614.6" class="y"/><path d="M1128.8,612.8L1122.7,613" class="y"/><path d="M1538.9,659.4L1591.7,626.1" class="b"/><path d="M1246.3,594.6L1301.6,565.5" class="b"/><path d="M1193.5,627.9L1133.9,619.9" class="b"/><path d="M1133.9,619.9L1128.8,612.8" class="b"/><path d="M1591.7,626.1L1604.8,665.7" class="b"/><path d="M1479.3,600L1544,595" class="b"/><polygon fill="#f5be0b" points="1655.1,745.7 1657.8,741.8 1660.4,738.5 1660.4,742.4 1655.1,745.7"/><polygon fill="#eda55d" points="1660.4,738.5 1663.9,734.4 1667.4,730.7 1671,727.3 1671,735.7 1660.4,742.4"/><polygon fill="#e8900a" points="1671,727.3 1674.5,724.2 1678,721.5 1681.5,719.1 1685,717 1688.6,715.3 1692.1,714 1692.1,722.4 1671,735.7"/><polygon fill="#eda55d" points="1692.1,714 1695.6,712.9 1699.1,712.2 1702.6,711.8 1702.6,715.7 1692.1,722.4"/><polygon fill="#f5be0b" points="1702.6,711.8 1705.3,711.8 1707.9,712.4 1707.9,712.4 1702.6,715.7"/><path d="M1655.1,745.7L1707.9,712.4" class="b"/><path d="M1655.1,745.7L1660.4,742.4" class="y"/><path d="M1707.9,712.4L1702.6,715.7" class="y"/><path d="M1643.5,696.3L1655.1,745.7" class="b"/><path d="M1362.8,588.6L1301.6,565.5" class="b"/><path d="M1643.5,696.3L1604.8,665.7" class="b"/><path d="M1590.7,729.6L1643.5,696.3" class="b"/><polygon fill="#f5be0b" points="1604.8,665.7 1606.6,661 1608.5,657.3 1608.5,663.4 1604.8,665.7"/><polygon fill="#e8900a" points="1608.5,657.3 1611.9,651.1 1615.4,645.6 1615.4,659 1608.5,663.4"/><polygon fill="#d9640a" points="1615.4,645.6 1618.2,641.6 1621,638 1623.8,634.8 1623.8,653.7 1615.4,659"/><polygon fill="#c8320a" points="1623.8,634.8 1627.5,631.3 1631.2,628.5 1634.9,626.6 1638.6,625.5 1638.6,644.4 1623.8,653.7"/><polygon fill="#d9640a" points="1638.6,625.5 1641.4,625.1 1644.2,625.2 1647,625.6 1647,639 1638.6,644.4"/><polygon fill="#e8900a" points="1647,625.6 1650.5,626.8 1653.9,628.7 1653.9,634.7 1647,639"/><polygon fill="#f5be0b" points="1653.9,628.7 1655.7,630.1 1657.6,632.4 1657.6,632.4 1653.9,634.7"/><path d="M1604.8,665.7L1657.6,632.4" class="b"/><path d="M1604.8,665.7L1610.1,662.4" class="y"/><path d="M1657.6,632.4L1652.3,635.7" class="y"/><path d="M1479.3,600L1424,571.5" class="b"/><path d="M1538.9,659.4L1479.3,600" class="b"/><path d="M1081.1,653.2L1015.2,648.1" class="b"/><path d="M1362.8,588.6L1424,571.5" class="b"/><path d="M1193.5,627.9L1246.3,594.6" class="b"/><path d="M1193.5,627.9L1181.6,579.5" class="b"/><polygon fill="#f5be0b" points="1128.8,612.8 1130.6,608 1132.5,604.1 1132.5,610.5 1128.8,612.8"/><polygon fill="#e8900a" points="1132.5,604.1 1135.9,597.7 1139.3,592 1139.3,606.2 1132.5,610.5"/><polygon fill="#d9640a" points="1139.3,592 1142.1,587.8 1144.9,584.1 1147.8,580.8 1147.8,600.9 1139.3,606.2"/><polygon fill="#c8320a" points="1147.8,580.8 1151.5,577.2 1155.2,574.5 1158.9,572.6 1162.5,571.5 1162.5,591.5 1147.8,600.9"/><polygon fill="#d9640a" points="1162.5,571.5 1165.4,571.2 1168.2,571.4 1171,572 1171,586.2 1162.5,591.5"/><polygon fill="#e8900a" points="1171,572 1174.4,573.4 1177.9,575.5 1177.9,581.9 1171,586.2"/><polygon fill="#f5be0b" points="1177.9,575.5 1179.7,577 1181.6,579.5 1181.6,579.5 1177.9,581.9"/><path d="M1128.8,612.8L1181.6,579.5" class="b"/><path d="M1128.8,612.8L1134,609.5" class="y"/><path d="M1181.6,579.5L1176.3,582.9" class="y"/><path d="M1538.9,659.4L1544,595" class="b"/><path d="M1310,621.9L1246.3,594.6" class="b"/><path d="M1426.5,633.3L1479.3,600" class="b"/><polygon fill="#f5be0b" points="1544,595 1546.2,593.9 1548.3,593.7 1548.3,600 1544,595"/><polygon fill="#e8900a" points="1548.3,593.7 1552.2,594.2 1556.2,595.4 1556.2,609.1 1548.3,600"/><polygon fill="#d9640a" points="1556.2,595.4 1559.4,596.9 1562.7,598.7 1565.9,601.1 1565.9,620.5 1556.2,609.1"/><polygon fill="#c8320a" points="1565.9,601.1 1570.2,604.8 1574.4,609.3 1578.7,614.7 1582.9,620.9 1582.9,640.2 1565.9,620.5"/><polygon fill="#d9640a" points="1582.9,620.9 1586.2,626.1 1589.4,631.7 1592.6,637.8 1592.6,651.6 1582.9,640.2"/><polygon fill="#e8900a" points="1592.6,637.8 1596.6,645.8 1600.5,654.5 1600.5,660.7 1592.6,651.6"/><polygon fill="#f5be0b" points="1600.5,654.5 1602.7,659.6 1604.8,665.7 1604.8,665.7 1600.5,660.7"/><path d="M1544,595L1604.8,665.7" class="b"/><path d="M1544,595L1550.1,602.1" class="y"/><path d="M1604.8,665.7L1598.7,658.6" class="y"/><path d="M1426.5,633.3L1362.8,588.6" class="b"/><path d="M1310,621.9L1362.8,588.6" class="b"/><path d="M1246.3,594.6L1248.8,598.8" class="b"/><polygon fill="#f5be0b" points="1181.6,579.5 1183.9,575.9 1186.3,573.4 1186.3,580.9 1181.6,579.5"/><polygon fill="#d04d63" points="1186.3,573.4 1190.1,570.1 1194,567.5 1197.9,565.5 1201.7,564.1 1201.7,585.3 1186.3,580.9"/><polygon fill="#b30303" points="1201.7,564.1 1206.4,563.2 1211,563.2 1215.6,564.1 1220.2,566 1224.8,568.7 1229.4,572.4 1234,577 1234,594.6 1201.7,585.3"/><polygon fill="#d04d63" points="1234,577 1237.4,580.9 1240.8,585.2 1244.1,590 1244.1,597.5 1234,594.6"/><polygon fill="#f5be0b" points="1244.1,590 1246.5,593.8 1248.8,598.8 1248.8,598.8 1244.1,597.5"/><path d="M1181.6,579.5L1248.8,598.8" class="b"/><path d="M1181.6,579.5L1188.3,581.5" class="y"/><path d="M1248.8,598.8L1242.1,596.9" class="y"/><path d="M1081.1,653.2L1128.8,612.8" class="b"/><path d="M1538.9,659.4L1604.8,665.7" class="b"/><path d="M1590.7,729.6L1538.9,659.4" class="b"/><path d="M1479.3,600L1491.2,628.3" class="b"/><path d="M1590.7,729.6L1655.1,745.7" class="b"/><path d="M1310,621.9L1301.6,565.5" class="b"/><polygon fill="#f5be0b" points="1604.8,665.7 1606.8,665.7 1608.8,666.5 1608.8,672.1 1604.8,665.7"/><polygon fill="#e07b63" points="1608.8,666.5 1611.6,668.1 1614.4,670.2 1617.1,672.6 1619.9,675.3 1619.9,689.7 1608.8,672.1"/><polygon fill="#d9640a" points="1619.9,675.3 1623,679 1626.2,683.1 1629.3,687.7 1632.5,692.9 1632.5,709.7 1619.9,689.7"/><polygon fill="#c8320a" points="1632.5,692.9 1635.4,698.1 1638.3,703.7 1641.1,709.8 1644,716.3 1644,728.1 1632.5,709.7"/><polygon fill="#e8900a" points="1644,716.3 1647.6,724.7 1651.1,733.7 1651.1,739.3 1644,728.1"/><polygon fill="#f5be0b" points="1651.1,733.7 1653.1,739.3 1655.1,745.7 1655.1,745.7 1651.1,739.3"/><path d="M1604.8,665.7L1655.1,745.7" class="b"/><path d="M1604.8,665.7L1609.8,673.7" class="y"/><path d="M1655.1,745.7L1650.1,737.7" class="y"/><path d="M1590.7,729.6L1604.8,665.7" class="b"/><path d="M1426.5,633.3L1424,571.5" class="b"/><path d="M1362.8,588.6L1371.2,604.8" class="b"/><polygon fill="#f5be0b" points="1491.2,628.3 1493.1,623.6 1494.9,619.8 1494.9,626 1491.2,628.3"/><polygon fill="#e8900a" points="1494.9,619.8 1498.4,613.6 1501.8,608.1 1501.8,621.6 1494.9,626"/><polygon fill="#d9640a" points="1501.8,608.1 1504.6,604 1507.4,600.3 1510.3,597.1 1510.3,616.3 1501.8,621.6"/><polygon fill="#c8320a" points="1510.3,597.1 1513.9,593.6 1517.6,590.9 1521.3,588.9 1525,587.8 1525,607 1510.3,616.3"/><polygon fill="#d9640a" points="1525,587.8 1527.9,587.5 1530.7,587.6 1533.5,588.1 1533.5,601.7 1525,607"/><polygon fill="#e8900a" points="1533.5,588.1 1536.9,589.3 1540.3,591.2 1540.3,597.3 1533.5,601.7"/><polygon fill="#f5be0b" points="1540.3,591.2 1542.2,592.6 1544,595 1544,595 1540.3,597.3"/><path d="M1491.2,628.3L1544,595" class="b"/><path d="M1491.2,628.3L1496.5,625" class="y"/><path d="M1544,595L1538.8,598.3" class="y"/><polygon fill="#f5be0b" points="1248.8,598.8 1250.7,594 1252.5,590.1 1252.5,596.5 1248.8,598.8"/><polygon fill="#e8900a" points="1252.5,590.1 1256,583.8 1259.4,578.2 1259.4,592.1 1252.5,596.5"/><polygon fill="#d9640a" points="1259.4,578.2 1262.2,574 1265,570.3 1267.9,567.1 1267.9,586.8 1259.4,592.1"/><polygon fill="#c8320a" points="1267.9,567.1 1271.5,563.5 1275.2,560.8 1278.9,558.8 1282.6,557.7 1282.6,577.5 1267.9,586.8"/><polygon fill="#d9640a" points="1282.6,557.7 1285.5,557.4 1288.3,557.6 1291.1,558.2 1291.1,572.2 1282.6,577.5"/><polygon fill="#e8900a" points="1291.1,558.2 1294.5,559.5 1297.9,561.5 1297.9,567.8 1291.1,572.2"/><polygon fill="#f5be0b" points="1297.9,561.5 1299.8,563 1301.6,565.5 1301.6,565.5 1297.9,567.8"/><path d="M1248.8,598.8L1301.6,565.5" class="b"/><path d="M1248.8,598.8L1254.1,595.5" class="y"/><path d="M1301.6,565.5L1296.4,568.8" class="y"/><path d="M1193.5,627.9L1128.8,612.8" class="b"/><polygon fill="#f5be0b" points="1424,571.5 1426.3,569.5 1428.7,568.6 1428.7,575.5 1424,571.5"/><polygon fill="#d04d63" points="1428.7,568.6 1432.5,567.7 1436.4,567.5 1440.3,567.9 1444.1,568.8 1444.1,588.5 1428.7,575.5"/><polygon fill="#b30303" points="1444.1,568.8 1448.8,570.6 1453.4,573.3 1458,576.8 1462.6,581.2 1467.2,586.5 1471.8,592.6 1476.4,599.5 1476.4,615.8 1444.1,588.5"/><polygon fill="#d04d63" points="1476.4,599.5 1479.8,605 1483.2,611 1486.5,617.4 1486.5,624.3 1476.4,615.8"/><polygon fill="#f5be0b" points="1486.5,617.4 1488.9,622.3 1491.2,628.3 1491.2,628.3 1486.5,624.3"/><path d="M1424,571.5L1491.2,628.3" class="b"/><path d="M1424,571.5L1430.7,577.2" class="y"/><path d="M1491.2,628.3L1484.5,622.6" class="y"/><polygon fill="#f5be0b" points="1301.6,565.5 1304.1,562.7 1306.5,561.1 1306.5,568.3 1301.6,565.5"/><polygon fill="#d04d63" points="1306.5,561.1 1310.5,559.1 1314.5,557.7 1318.5,557 1322.5,556.8 1322.5,577.3 1306.5,568.3"/><polygon fill="#b30303" points="1322.5,556.8 1327.3,557.3 1332,558.8 1336.8,561.1 1341.6,564.3 1346.3,568.4 1351.1,573.4 1355.9,579.2 1355.9,596.2 1322.5,577.3"/><polygon fill="#d04d63" points="1355.9,579.2 1359.3,584 1362.8,589.2 1366.3,594.9 1366.3,602.1 1355.9,596.2"/><polygon fill="#f5be0b" points="1366.3,594.9 1368.7,599.3 1371.2,604.8 1371.2,604.8 1366.3,602.1"/><path d="M1301.6,565.5L1371.2,604.8" class="b"/><path d="M1301.6,565.5L1308.6,569.4" class="y"/><path d="M1371.2,604.8L1364.2,600.9" class="y"/><path d="M1538.9,659.4L1491.2,628.3" class="b"/><polygon fill="#f5be0b" points="1371.2,604.8 1373,600 1374.9,596.2 1374.9,602.5 1371.2,604.8"/><polygon fill="#e8900a" points="1374.9,596.2 1378.3,589.9 1381.7,584.3 1381.7,598.1 1374.9,602.5"/><polygon fill="#d9640a" points="1381.7,584.3 1384.5,580.2 1387.3,576.6 1390.2,573.3 1390.2,592.8 1381.7,598.1"/><polygon fill="#c8320a" points="1390.2,573.3 1393.9,569.8 1397.6,567.1 1401.3,565.1 1404.9,564 1404.9,583.5 1390.2,592.8"/><polygon fill="#d9640a" points="1404.9,564 1407.8,563.7 1410.6,563.8 1413.4,564.4 1413.4,578.2 1404.9,583.5"/><polygon fill="#e8900a" points="1413.4,564.4 1416.8,565.6 1420.3,567.6 1420.3,573.8 1413.4,578.2"/><polygon fill="#f5be0b" points="1420.3,567.6 1422.1,569.1 1424,571.5 1424,571.5 1420.3,573.8"/><path d="M1371.2,604.8L1424,571.5" class="b"/><path d="M1371.2,604.8L1376.4,601.5" class="y"/><path d="M1424,571.5L1418.7,574.8" class="y"/><polygon fill="#f5be0b" points="1015.2,648.1 1018.2,645.6 1021.3,643.6 1021.3,647.9 1015.2,648.1"/><polygon fill="#e8900a" points="1021.3,643.6 1025.1,641.6 1028.9,639.9 1032.7,638.5 1036.5,637.4 1036.5,647.4 1021.3,647.9"/><polygon fill="#e07b63" points="1036.5,637.4 1040.5,636.6 1044.6,636.2 1048.6,636.2 1052.7,636.5 1056.7,637.2 1060.8,638.3 1060.8,646.6 1036.5,647.4"/><polygon fill="#eda55d" points="1060.8,638.3 1063.8,639.4 1066.8,640.6 1069.9,642 1069.9,646.3 1060.8,646.6"/><polygon fill="#f5be0b" points="1069.9,642 1072.9,643.8 1076,646.1 1076,646.1 1069.9,646.3"/><path d="M1015.2,648.1L1076,646.1" class="b"/><path d="M1015.2,648.1L1021.3,647.9" class="y"/><path d="M1076,646.1L1069.9,646.3" class="y"/><path d="M1486.1,692.7L1538.9,659.4" class="b"/><path d="M1193.5,627.9L1248.8,598.8" class="b"/><path d="M1140.7,661.2L1081.1,653.2" class="b"/><path d="M1081.1,653.2L1076,646.1" class="b"/><path d="M1538.9,659.4L1552,699" class="b"/><path d="M1426.5,633.3L1491.2,628.3" class="b"/><polygon fill="#f5be0b" points="1602.3,779 1605,775.1 1607.6,771.8 1607.6,775.7 1602.3,779"/><polygon fill="#eda55d" points="1607.6,771.8 1611.1,767.7 1614.6,764 1618.2,760.6 1618.2,769 1607.6,775.7"/><polygon fill="#e8900a" points="1618.2,760.6 1621.7,757.5 1625.2,754.8 1628.7,752.4 1632.2,750.3 1635.8,748.6 1639.3,747.3 1639.3,755.7 1618.2,769"/><polygon fill="#eda55d" points="1639.3,747.3 1642.8,746.2 1646.3,745.5 1649.8,745.1 1649.8,749 1639.3,755.7"/><polygon fill="#f5be0b" points="1649.8,745.1 1652.5,745.1 1655.1,745.7 1655.1,745.7 1649.8,749"/><path d="M1602.3,779L1655.1,745.7" class="b"/><path d="M1602.3,779L1607.6,775.7" class="y"/><path d="M1655.1,745.7L1649.8,749" class="y"/><path d="M1590.7,729.6L1602.3,779" class="b"/><path d="M1310,621.9L1248.8,598.8" class="b"/><path d="M1590.7,729.6L1552,699" class="b"/><path d="M1537.9,762.9L1590.7,729.6" class="b"/><polygon fill="#f5be0b" points="1552,699 1553.8,694.3 1555.7,690.5 1555.7,696.7 1552,699"/><polygon fill="#e8900a" points="1555.7,690.5 1559.1,684.3 1562.6,678.7 1562.6,692.3 1555.7,696.7"/><polygon fill="#d9640a" points="1562.6,678.7 1565.4,674.7 1568.2,671 1571,667.8 1571,687 1562.6,692.3"/><polygon fill="#c8320a" points="1571,667.8 1574.7,664.3 1578.4,661.5 1582.1,659.6 1585.8,658.5 1585.8,677.7 1571,687"/><polygon fill="#d9640a" points="1585.8,658.5 1588.6,658.1 1591.4,658.2 1594.2,658.8 1594.2,672.3 1585.8,677.7"/><polygon fill="#e8900a" points="1594.2,658.8 1597.7,660 1601.1,661.9 1601.1,668 1594.2,672.3"/><polygon fill="#f5be0b" points="1601.1,661.9 1602.9,663.3 1604.8,665.7 1604.8,665.7 1601.1,668"/><path d="M1552,699L1604.8,665.7" class="b"/><path d="M1552,699L1557.3,695.7" class="y"/><path d="M1604.8,665.7L1599.5,669" class="y"/><path d="M1426.5,633.3L1371.2,604.8" class="b"/><path d="M1486.1,692.7L1426.5,633.3" class="b"/><path d="M1310,621.9L1371.2,604.8" class="b"/><path d="M1140.7,661.2L1193.5,627.9" class="b"/><path d="M1140.7,661.2L1128.8,612.8" class="b"/><polygon fill="#f5be0b" points="1076,646.1 1077.8,641.2 1079.7,637.3 1079.7,643.8 1076,646.1"/><polygon fill="#e8900a" points="1079.7,637.3 1083.1,630.8 1086.5,625.1 1086.5,639.5 1079.7,643.8"/><polygon fill="#d9640a" points="1086.5,625.1 1089.3,620.9 1092.1,617.1 1095,613.8 1095,634.2 1086.5,639.5"/><polygon fill="#c8320a" points="1095,613.8 1098.7,610.2 1102.4,607.5 1106.1,605.6 1109.7,604.5 1109.7,624.8 1095,634.2"/><polygon fill="#d9640a" points="1109.7,604.5 1112.6,604.3 1115.4,604.5 1118.2,605.1 1118.2,619.5 1109.7,624.8"/><polygon fill="#e8900a" points="1118.2,605.1 1121.6,606.5 1125.1,608.7 1125.1,615.2 1118.2,619.5"/><polygon fill="#f5be0b" points="1125.1,608.7 1126.9,610.3 1128.8,612.8 1128.8,612.8 1125.1,615.2"/><path d="M1076,646.1L1128.8,612.8" class="b"/><path d="M1076,646.1L1081.2,642.8" class="y"/><path d="M1128.8,612.8L1123.5,616.2" class="y"/><path d="M1486.1,692.7L1491.2,628.3" class="b"/><path d="M1257.2,655.2L1193.5,627.9" class="b"/><path d="M1373.7,666.6L1426.5,633.3" class="b"/><polygon fill="#f5be0b" points="1491.2,628.3 1493.4,627.2 1495.5,627 1495.5,633.3 1491.2,628.3"/><polygon fill="#e8900a" points="1495.5,627 1499.4,627.5 1503.4,628.7 1503.4,642.4 1495.5,633.3"/><polygon fill="#d9640a" points="1503.4,628.7 1506.6,630.2 1509.9,632 1513.1,634.4 1513.1,653.8 1503.4,642.4"/><polygon fill="#c8320a" points="1513.1,634.4 1517.4,638.1 1521.6,642.6 1525.9,648 1530.1,654.2 1530.1,673.5 1513.1,653.8"/><polygon fill="#d9640a" points="1530.1,654.2 1533.4,659.4 1536.6,665 1539.8,671.1 1539.8,684.9 1530.1,673.5"/><polygon fill="#e8900a" points="1539.8,671.1 1543.8,679.1 1547.7,687.8 1547.7,694 1539.8,684.9"/><polygon fill="#f5be0b" points="1547.7,687.8 1549.9,692.9 1552,699 1552,699 1547.7,694"/><path d="M1491.2,628.3L1552,699" class="b"/><path d="M1491.2,628.3L1497.3,635.4" class="y"/><path d="M1552,699L1545.9,691.9" class="y"/><path d="M1373.7,666.6L1310,621.9" class="b"/><path d="M1257.2,655.2L1310,621.9" class="b"/><path d="M1193.5,627.9L1196,632.1" class="b"/><polygon fill="#f5be0b" points="1128.8,612.8 1131.1,609.1 1133.5,606.5 1133.5,614.2 1128.8,612.8"/><polygon fill="#d04d63" points="1133.5,606.5 1137.3,603 1141.2,600.3 1145.1,598.1 1148.9,596.6 1148.9,618.6 1133.5,614.2"/><polygon fill="#b30303" points="1148.9,596.6 1153.6,595.6 1158.2,595.6 1162.8,596.5 1167.4,598.4 1172,601.2 1176.6,605 1181.2,609.7 1181.2,627.9 1148.9,618.6"/><polygon fill="#d04d63" points="1181.2,609.7 1184.6,613.6 1188,618.1 1191.3,623 1191.3,630.8 1181.2,627.9"/><polygon fill="#f5be0b" points="1191.3,623 1193.7,627 1196,632.1 1196,632.1 1191.3,630.8"/><path d="M1128.8,612.8L1196,632.1" class="b"/><path d="M1128.8,612.8L1135.5,614.8" class="y"/><path d="M1196,632.1L1189.3,630.2" class="y"/><path d="M1486.1,692.7L1552,699" class="b"/><path d="M1537.9,762.9L1486.1,692.7" class="b"/><path d="M1426.5,633.3L1438.4,661.6" class="b"/><path d="M1537.9,762.9L1602.3,779" class="b"/><path d="M1257.2,655.2L1248.8,598.8" class="b"/><polygon fill="#f5be0b" points="1552,699 1554,699 1556,699.8 1556,705.4 1552,699"/><polygon fill="#e07b63" points="1556,699.8 1558.8,701.4 1561.6,703.5 1564.3,705.9 1567.1,708.6 1567.1,723 1556,705.4"/><polygon fill="#d9640a" points="1567.1,708.6 1570.2,712.3 1573.4,716.4 1576.5,721 1579.7,726.2 1579.7,743 1567.1,723"/><polygon fill="#c8320a" points="1579.7,726.2 1582.6,731.4 1585.5,737 1588.3,743.1 1591.2,749.6 1591.2,761.4 1579.7,743"/><polygon fill="#e8900a" points="1591.2,749.6 1594.8,758 1598.3,767 1598.3,772.6 1591.2,761.4"/><polygon fill="#f5be0b" points="1598.3,767 1600.3,772.6 1602.3,779 1602.3,779 1598.3,772.6"/><path d="M1552,699L1602.3,779" class="b"/><path d="M1552,699L1557,707" class="y"/><path d="M1602.3,779L1597.3,771" class="y"/><path d="M1537.9,762.9L1552,699" class="b"/><path d="M1373.7,666.6L1371.2,604.8" class="b"/><path d="M1310,621.9L1318.4,638.1" class="b"/><polygon fill="#f5be0b" points="1438.4,661.6 1440.3,656.8 1442.1,653 1442.1,659.3 1438.4,661.6"/><polygon fill="#e8900a" points="1442.1,653 1445.6,646.7 1449,641.2 1449,654.9 1442.1,659.3"/><polygon fill="#d9640a" points="1449,641.2 1451.8,637 1454.6,633.4 1457.5,630.1 1457.5,649.6 1449,654.9"/><polygon fill="#c8320a" points="1457.5,630.1 1461.1,626.6 1464.8,623.9 1468.5,621.9 1472.2,620.8 1472.2,640.3 1457.5,649.6"/><polygon fill="#d9640a" points="1472.2,620.8 1475.1,620.5 1477.9,620.6 1480.7,621.2 1480.7,635 1472.2,640.3"/><polygon fill="#e8900a" points="1480.7,621.2 1484.1,622.4 1487.5,624.4 1487.5,630.6 1480.7,635"/><polygon fill="#f5be0b" points="1487.5,624.4 1489.4,625.9 1491.2,628.3 1491.2,628.3 1487.5,630.6"/><path d="M1438.4,661.6L1491.2,628.3" class="b"/><path d="M1438.4,661.6L1443.7,658.3" class="y"/><path d="M1491.2,628.3L1486,631.6" class="y"/><polygon fill="#f5be0b" points="1196,632.1 1197.9,627.2 1199.7,623.4 1199.7,629.8 1196,632.1"/><polygon fill="#e8900a" points="1199.7,623.4 1203.2,616.9 1206.6,611.3 1206.6,625.4 1199.7,629.8"/><polygon fill="#d9640a" points="1206.6,611.3 1209.4,607.1 1212.2,603.4 1215.1,600.1 1215.1,620.1 1206.6,625.4"/><polygon fill="#c8320a" points="1215.1,600.1 1218.7,596.5 1222.4,593.8 1226.1,591.8 1229.8,590.8 1229.8,610.8 1215.1,620.1"/><polygon fill="#d9640a" points="1229.8,590.8 1232.7,590.5 1235.5,590.7 1238.3,591.3 1238.3,605.5 1229.8,610.8"/><polygon fill="#e8900a" points="1238.3,591.3 1241.7,592.6 1245.1,594.7 1245.1,601.1 1238.3,605.5"/><polygon fill="#f5be0b" points="1245.1,594.7 1247,596.3 1248.8,598.8 1248.8,598.8 1245.1,601.1"/><path d="M1196,632.1L1248.8,598.8" class="b"/><path d="M1196,632.1L1201.3,628.8" class="y"/><path d="M1248.8,598.8L1243.6,602.1" class="y"/><path d="M1140.7,661.2L1076,646.1" class="b"/><polygon fill="#f5be0b" points="1371.2,604.8 1373.5,602.6 1375.9,601.6 1375.9,608.8 1371.2,604.8"/><polygon fill="#d04d63" points="1375.9,601.6 1379.7,600.6 1383.6,600.3 1387.5,600.5 1391.3,601.3 1391.3,621.8 1375.9,608.8"/><polygon fill="#b30303" points="1391.3,601.3 1396,603.1 1400.6,605.7 1405.2,609.2 1409.8,613.7 1414.4,619 1419,625.1 1423.6,632.2 1423.6,649.1 1391.3,621.8"/><polygon fill="#d04d63" points="1423.6,632.2 1427,637.8 1430.4,643.9 1433.7,650.4 1433.7,657.6 1423.6,649.1"/><polygon fill="#f5be0b" points="1433.7,650.4 1436.1,655.5 1438.4,661.6 1438.4,661.6 1433.7,657.6"/><path d="M1371.2,604.8L1438.4,661.6" class="b"/><path d="M1371.2,604.8L1377.9,610.5" class="y"/><path d="M1438.4,661.6L1431.7,655.9" class="y"/><polygon fill="#f5be0b" points="1248.8,598.8 1251.3,595.9 1253.7,594.1 1253.7,601.6 1248.8,598.8"/><polygon fill="#d04d63" points="1253.7,594.1 1257.7,592 1261.7,590.5 1265.7,589.6 1269.7,589.3 1269.7,610.6 1253.7,601.6"/><polygon fill="#b30303" points="1269.7,589.3 1274.5,589.8 1279.2,591.2 1284,593.5 1288.8,596.7 1293.5,600.9 1298.3,605.9 1303.1,611.9 1303.1,629.5 1269.7,610.6"/><polygon fill="#d04d63" points="1303.1,611.9 1306.5,616.7 1310,622.1 1313.5,627.9 1313.5,635.4 1303.1,629.5"/><polygon fill="#f5be0b" points="1313.5,627.9 1315.9,632.4 1318.4,638.1 1318.4,638.1 1313.5,635.4"/><path d="M1248.8,598.8L1318.4,638.1" class="b"/><path d="M1248.8,598.8L1255.8,602.7" class="y"/><path d="M1318.4,638.1L1311.4,634.2" class="y"/><path d="M1486.1,692.7L1438.4,661.6" class="b"/><polygon fill="#f5be0b" points="1318.4,638.1 1320.2,633.3 1322.1,629.4 1322.1,635.8 1318.4,638.1"/><polygon fill="#e8900a" points="1322.1,629.4 1325.5,623.1 1328.9,617.5 1328.9,631.4 1322.1,635.8"/><polygon fill="#d9640a" points="1328.9,617.5 1331.7,613.3 1334.5,609.6 1337.4,606.4 1337.4,626.1 1328.9,631.4"/><polygon fill="#c8320a" points="1337.4,606.4 1341.1,602.8 1344.8,600.1 1348.5,598.1 1352.1,597 1352.1,616.8 1337.4,626.1"/><polygon fill="#d9640a" points="1352.1,597 1355,596.7 1357.8,596.9 1360.6,597.5 1360.6,611.5 1352.1,616.8"/><polygon fill="#e8900a" points="1360.6,597.5 1364,598.8 1367.5,600.8 1367.5,607.1 1360.6,611.5"/><polygon fill="#f5be0b" points="1367.5,600.8 1369.3,602.3 1371.2,604.8 1371.2,604.8 1367.5,607.1"/><path d="M1318.4,638.1L1371.2,604.8" class="b"/><path d="M1318.4,638.1L1323.6,634.8" class="y"/><path d="M1371.2,604.8L1365.9,608.1" class="y"/><path d="M1433.3,726L1486.1,692.7" class="b"/><path d="M1140.7,661.2L1196,632.1" class="b"/><path d="M1486.1,692.7L1499.2,732.3" class="b"/><path d="M1373.7,666.6L1438.4,661.6" class="b"/><polygon fill="#f5be0b" points="1549.5,812.3 1552.2,808.4 1554.8,805.1 1554.8,809 1549.5,812.3"/><polygon fill="#eda55d" points="1554.8,805.1 1558.3,801 1561.8,797.3 1565.4,793.9 1565.4,802.3 1554.8,809"/><polygon fill="#e8900a" points="1565.4,793.9 1568.9,790.8 1572.4,788.1 1575.9,785.7 1579.4,783.6 1583,781.9 1586.5,780.6 1586.5,789 1565.4,802.3"/><polygon fill="#eda55d" points="1586.5,780.6 1590,779.5 1593.5,778.8 1597,778.4 1597,782.3 1586.5,789"/><polygon fill="#f5be0b" points="1597,778.4 1599.7,778.4 1602.3,779 1602.3,779 1597,782.3"/><path d="M1549.5,812.3L1602.3,779" class="b"/><path d="M1549.5,812.3L1554.8,809" class="y"/><path d="M1602.3,779L1597,782.3" class="y"/><path d="M1537.9,762.9L1549.5,812.3" class="b"/><path d="M1257.2,655.2L1196,632.1" class="b"/><path d="M1537.9,762.9L1499.2,732.3" class="b"/><path d="M1485.1,796.2L1537.9,762.9" class="b"/><polygon fill="#f5be0b" points="1499.2,732.3 1501,727.5 1502.9,723.7 1502.9,730 1499.2,732.3"/><polygon fill="#e8900a" points="1502.9,723.7 1506.3,717.4 1509.8,711.8 1509.8,725.6 1502.9,730"/><polygon fill="#d9640a" points="1509.8,711.8 1512.6,707.7 1515.4,704.1 1518.2,700.8 1518.2,720.3 1509.8,725.6"/><polygon fill="#c8320a" points="1518.2,700.8 1521.9,697.3 1525.6,694.5 1529.3,692.6 1533,691.5 1533,711 1518.2,720.3"/><polygon fill="#d9640a" points="1533,691.5 1535.8,691.2 1538.6,691.3 1541.4,691.9 1541.4,705.6 1533,711"/><polygon fill="#e8900a" points="1541.4,691.9 1544.9,693.1 1548.3,695.1 1548.3,701.3 1541.4,705.6"/><polygon fill="#f5be0b" points="1548.3,695.1 1550.1,696.6 1552,699 1552,699 1548.3,701.3"/><path d="M1499.2,732.3L1552,699" class="b"/><path d="M1499.2,732.3L1504.5,729" class="y"/><path d="M1552,699L1546.7,702.3" class="y"/><path d="M1373.7,666.6L1318.4,638.1" class="b"/><path d="M1433.3,726L1373.7,666.6" class="b"/><path d="M1257.2,655.2L1318.4,638.1" class="b"/><path d="M1433.3,726L1438.4,661.6" class="b"/><path d="M1204.4,688.5L1140.7,661.2" class="b"/><path d="M1320.9,699.9L1373.7,666.6" class="b"/><polygon fill="#f5be0b" points="1438.4,661.6 1440.6,660.5 1442.7,660.3 1442.7,666.6 1438.4,661.6"/><polygon fill="#e8900a" points="1442.7,660.3 1446.6,660.8 1450.6,662 1450.6,675.7 1442.7,666.6"/><polygon fill="#d9640a" points="1450.6,662 1453.8,663.5 1457.1,665.3 1460.3,667.7 1460.3,687.1 1450.6,675.7"/><polygon fill="#c8320a" points="1460.3,667.7 1464.6,671.4 1468.8,675.9 1473.1,681.3 1477.3,687.5 1477.3,706.8 1460.3,687.1"/><polygon fill="#d9640a" points="1477.3,687.5 1480.6,692.7 1483.8,698.3 1487,704.4 1487,718.2 1477.3,706.8"/><polygon fill="#e8900a" points="1487,704.4 1491,712.4 1494.9,721.1 1494.9,727.3 1487,718.2"/><polygon fill="#f5be0b" points="1494.9,721.1 1497.1,726.2 1499.2,732.3 1499.2,732.3 1494.9,727.3"/><path d="M1438.4,661.6L1499.2,732.3" class="b"/><path d="M1438.4,661.6L1444.5,668.7" class="y"/><path d="M1499.2,732.3L1493.1,725.2" class="y"/><path d="M1320.9,699.9L1257.2,655.2" class="b"/><path d="M1204.4,688.5L1257.2,655.2" class="b"/><path d="M1140.7,661.2L1143.2,665.4" class="b"/><polygon fill="#f5be0b" points="1076,646.1 1079.3,644.6 1082.7,643.8 1082.7,648.1 1076,646.1"/><polygon fill="#e8900a" points="1082.7,643.8 1086.9,643.1 1091.1,642.7 1095.3,642.6 1099.5,642.9 1099.5,652.9 1082.7,648.1"/><polygon fill="#e07b63" points="1099.5,642.9 1104,643.5 1108.5,644.5 1113,645.8 1117.4,647.6 1121.9,649.8 1126.4,652.3 1126.4,660.6 1099.5,652.9"/><polygon fill="#eda55d" points="1126.4,652.3 1129.8,654.4 1133.1,656.7 1136.5,659.2 1136.5,663.5 1126.4,660.6"/><polygon fill="#f5be0b" points="1136.5,659.2 1139.9,662 1143.2,665.4 1143.2,665.4 1136.5,663.5"/><path d="M1076,646.1L1143.2,665.4" class="b"/><path d="M1076,646.1L1082.7,648.1" class="y"/><path d="M1143.2,665.4L1136.5,663.5" class="y"/><path d="M1433.3,726L1499.2,732.3" class="b"/><path d="M1485.1,796.2L1433.3,726" class="b"/><path d="M1373.7,666.6L1385.6,694.9" class="b"/><path d="M1485.1,796.2L1549.5,812.3" class="b"/><path d="M1204.4,688.5L1196,632.1" class="b"/><polygon fill="#f5be0b" points="1499.2,732.3 1501.2,732.3 1503.2,733.1 1503.2,738.7 1499.2,732.3"/><polygon fill="#e07b63" points="1503.2,733.1 1506,734.7 1508.8,736.8 1511.5,739.2 1514.3,741.9 1514.3,756.3 1503.2,738.7"/><polygon fill="#d9640a" points="1514.3,741.9 1517.4,745.6 1520.6,749.7 1523.7,754.3 1526.9,759.5 1526.9,776.3 1514.3,756.3"/><polygon fill="#c8320a" points="1526.9,759.5 1529.8,764.7 1532.7,770.3 1535.5,776.4 1538.4,782.9 1538.4,794.7 1526.9,776.3"/><polygon fill="#e8900a" points="1538.4,782.9 1542,791.3 1545.5,800.3 1545.5,805.9 1538.4,794.7"/><polygon fill="#f5be0b" points="1545.5,800.3 1547.5,805.9 1549.5,812.3 1549.5,812.3 1545.5,805.9"/><path d="M1499.2,732.3L1549.5,812.3" class="b"/><path d="M1499.2,732.3L1504.2,740.3" class="y"/><path d="M1549.5,812.3L1544.5,804.3" class="y"/><path d="M1485.1,796.2L1499.2,732.3" class="b"/><path d="M1320.9,699.9L1318.4,638.1" class="b"/><path d="M1257.2,655.2L1265.6,671.4" class="b"/><polygon fill="#f5be0b" points="1385.6,694.9 1387.5,690.1 1389.3,686.2 1389.3,692.6 1385.6,694.9"/><polygon fill="#e8900a" points="1389.3,686.2 1392.8,679.9 1396.2,674.3 1396.2,688.2 1389.3,692.6"/><polygon fill="#d9640a" points="1396.2,674.3 1399,670.1 1401.8,666.4 1404.7,663.2 1404.7,682.9 1396.2,688.2"/><polygon fill="#c8320a" points="1404.7,663.2 1408.3,659.6 1412,656.9 1415.7,654.9 1419.4,653.8 1419.4,673.6 1404.7,682.9"/><polygon fill="#d9640a" points="1419.4,653.8 1422.3,653.5 1425.1,653.7 1427.9,654.3 1427.9,668.3 1419.4,673.6"/><polygon fill="#e8900a" points="1427.9,654.3 1431.3,655.6 1434.7,657.6 1434.7,663.9 1427.9,668.3"/><polygon fill="#f5be0b" points="1434.7,657.6 1436.6,659.1 1438.4,661.6 1438.4,661.6 1434.7,663.9"/><path d="M1385.6,694.9L1438.4,661.6" class="b"/><path d="M1385.6,694.9L1390.9,691.6" class="y"/><path d="M1438.4,661.6L1433.2,664.9" class="y"/><polygon fill="#f5be0b" points="1143.2,665.4 1145.1,660.5 1146.9,656.6 1146.9,663.1 1143.2,665.4"/><polygon fill="#e8900a" points="1146.9,656.6 1150.4,650.1 1153.8,644.4 1153.8,658.7 1146.9,663.1"/><polygon fill="#d9640a" points="1153.8,644.4 1156.6,640.2 1159.4,636.4 1162.3,633.1 1162.3,653.4 1153.8,658.7"/><polygon fill="#c8320a" points="1162.3,633.1 1165.9,629.5 1169.6,626.8 1173.3,624.9 1177,623.8 1177,644.1 1162.3,653.4"/><polygon fill="#d9640a" points="1177,623.8 1179.9,623.5 1182.7,623.7 1185.5,624.4 1185.5,638.8 1177,644.1"/><polygon fill="#e8900a" points="1185.5,624.4 1188.9,625.8 1192.3,627.9 1192.3,634.4 1185.5,638.8"/><polygon fill="#f5be0b" points="1192.3,627.9 1194.2,629.5 1196,632.1 1196,632.1 1192.3,634.4"/><path d="M1143.2,665.4L1196,632.1" class="b"/><path d="M1143.2,665.4L1148.5,662.1" class="y"/><path d="M1196,632.1L1190.8,635.4" class="y"/><polygon fill="#f5be0b" points="1318.4,638.1 1320.7,635.8 1323.1,634.6 1323.1,642.1 1318.4,638.1"/><polygon fill="#d04d63" points="1323.1,634.6 1326.9,633.5 1330.8,633 1334.7,633.1 1338.5,633.9 1338.5,655.1 1323.1,642.1"/><polygon fill="#b30303" points="1338.5,633.9 1343.2,635.5 1347.8,638.1 1352.4,641.6 1357,646.1 1361.6,651.4 1366.2,657.7 1370.8,664.8 1370.8,682.4 1338.5,655.1"/><polygon fill="#d04d63" points="1370.8,664.8 1374.2,670.6 1377.6,676.8 1380.9,683.5 1380.9,690.9 1370.8,682.4"/><polygon fill="#f5be0b" points="1380.9,683.5 1383.3,688.6 1385.6,694.9 1385.6,694.9 1380.9,690.9"/><path d="M1318.4,638.1L1385.6,694.9" class="b"/><path d="M1318.4,638.1L1325.1,643.8" class="y"/><path d="M1385.6,694.9L1378.9,689.2" class="y"/><polygon fill="#f5be0b" points="1196,632.1 1198.5,629 1200.9,627.1 1200.9,634.9 1196,632.1"/><polygon fill="#d04d63" points="1200.9,627.1 1204.9,624.8 1208.9,623.2 1212.9,622.2 1216.9,621.9 1216.9,643.9 1200.9,634.9"/><polygon fill="#b30303" points="1216.9,621.9 1221.7,622.3 1226.4,623.6 1231.2,625.9 1236,629.1 1240.7,633.4 1245.5,638.5 1250.3,644.6 1250.3,662.8 1216.9,643.9"/><polygon fill="#d04d63" points="1250.3,644.6 1253.7,649.5 1257.2,655 1260.7,660.9 1260.7,668.7 1250.3,662.8"/><polygon fill="#f5be0b" points="1260.7,660.9 1263.1,665.6 1265.6,671.4 1265.6,671.4 1260.7,668.7"/><path d="M1196,632.1L1265.6,671.4" class="b"/><path d="M1196,632.1L1203,636" class="y"/><path d="M1265.6,671.4L1258.6,667.5" class="y"/><path d="M1433.3,726L1385.6,694.9" class="b"/><polygon fill="#f5be0b" points="1265.6,671.4 1267.4,666.5 1269.3,662.7 1269.3,669.1 1265.6,671.4"/><polygon fill="#e8900a" points="1269.3,662.7 1272.7,656.2 1276.1,650.6 1276.1,664.7 1269.3,669.1"/><polygon fill="#d9640a" points="1276.1,650.6 1278.9,646.4 1281.7,642.7 1284.6,639.4 1284.6,659.4 1276.1,664.7"/><polygon fill="#c8320a" points="1284.6,639.4 1288.3,635.8 1292,633.1 1295.7,631.1 1299.3,630.1 1299.3,650.1 1284.6,659.4"/><polygon fill="#d9640a" points="1299.3,630.1 1302.2,629.8 1305,630 1307.8,630.6 1307.8,644.8 1299.3,650.1"/><polygon fill="#e8900a" points="1307.8,630.6 1311.2,631.9 1314.7,634 1314.7,640.4 1307.8,644.8"/><polygon fill="#f5be0b" points="1314.7,634 1316.5,635.6 1318.4,638.1 1318.4,638.1 1314.7,640.4"/><path d="M1265.6,671.4L1318.4,638.1" class="b"/><path d="M1265.6,671.4L1270.8,668.1" class="y"/><path d="M1318.4,638.1L1313.1,641.4" class="y"/><path d="M1380.5,759.3L1433.3,726" class="b"/><path d="M1433.3,726L1446.4,765.6" class="b"/><path d="M1320.9,699.9L1385.6,694.9" class="b"/><polygon fill="#f5be0b" points="1496.7,845.6 1499.4,841.7 1502,838.4 1502,842.3 1496.7,845.6"/><polygon fill="#eda55d" points="1502,838.4 1505.5,834.3 1509,830.6 1512.6,827.2 1512.6,835.6 1502,842.3"/><polygon fill="#e8900a" points="1512.6,827.2 1516.1,824.1 1519.6,821.4 1523.1,819 1526.6,816.9 1530.2,815.2 1533.7,813.9 1533.7,822.3 1512.6,835.6"/><polygon fill="#eda55d" points="1533.7,813.9 1537.2,812.8 1540.7,812.1 1544.2,811.7 1544.2,815.6 1533.7,822.3"/><polygon fill="#f5be0b" points="1544.2,811.7 1546.9,811.7 1549.5,812.3 1549.5,812.3 1544.2,815.6"/><path d="M1496.7,845.6L1549.5,812.3" class="b"/><path d="M1496.7,845.6L1502,842.3" class="y"/><path d="M1549.5,812.3L1544.2,815.6" class="y"/><path d="M1485.1,796.2L1496.7,845.6" class="b"/><path d="M1204.4,688.5L1143.2,665.4" class="b"/><path d="M1485.1,796.2L1446.4,765.6" class="b"/><path d="M1432.3,829.5L1485.1,796.2" class="b"/><polygon fill="#f5be0b" points="1446.4,765.6 1448.2,760.8 1450.1,756.9 1450.1,763.3 1446.4,765.6"/><polygon fill="#e8900a" points="1450.1,756.9 1453.5,750.6 1457,744.9 1457,758.9 1450.1,763.3"/><polygon fill="#d9640a" points="1457,744.9 1459.8,740.8 1462.6,737.1 1465.4,733.8 1465.4,753.6 1457,758.9"/><polygon fill="#c8320a" points="1465.4,733.8 1469.1,730.3 1472.8,727.5 1476.5,725.6 1480.2,724.5 1480.2,744.3 1465.4,753.6"/><polygon fill="#d9640a" points="1480.2,724.5 1483,724.2 1485.8,724.4 1488.6,725 1488.6,738.9 1480.2,744.3"/><polygon fill="#e8900a" points="1488.6,725 1492.1,726.3 1495.5,728.3 1495.5,734.6 1488.6,738.9"/><polygon fill="#f5be0b" points="1495.5,728.3 1497.3,729.8 1499.2,732.3 1499.2,732.3 1495.5,734.6"/><path d="M1446.4,765.6L1499.2,732.3" class="b"/><path d="M1446.4,765.6L1451.7,762.3" class="y"/><path d="M1499.2,732.3L1493.9,735.6" class="y"/><path d="M1320.9,699.9L1265.6,671.4" class="b"/><path d="M1380.5,759.3L1320.9,699.9" class="b"/><path d="M1204.4,688.5L1265.6,671.4" class="b"/><path d="M1380.5,759.3L1385.6,694.9" class="b"/><path d="M1268.1,733.2L1320.9,699.9" class="b"/><polygon fill="#f5be0b" points="1385.6,694.9 1387.8,693.8 1389.9,693.6 1389.9,699.9 1385.6,694.9"/><polygon fill="#e8900a" points="1389.9,693.6 1393.8,694.1 1397.8,695.3 1397.8,709 1389.9,699.9"/><polygon fill="#d9640a" points="1397.8,695.3 1401,696.8 1404.3,698.6 1407.5,701 1407.5,720.4 1397.8,709"/><polygon fill="#c8320a" points="1407.5,701 1411.8,704.7 1416,709.2 1420.3,714.6 1424.5,720.8 1424.5,740.1 1407.5,720.4"/><polygon fill="#d9640a" points="1424.5,720.8 1427.8,726 1431,731.6 1434.2,737.7 1434.2,751.5 1424.5,740.1"/><polygon fill="#e8900a" points="1434.2,737.7 1438.2,745.7 1442.1,754.4 1442.1,760.6 1434.2,751.5"/><polygon fill="#f5be0b" points="1442.1,754.4 1444.3,759.5 1446.4,765.6 1446.4,765.6 1442.1,760.6"/><path d="M1385.6,694.9L1446.4,765.6" class="b"/><path d="M1385.6,694.9L1391.7,702" class="y"/><path d="M1446.4,765.6L1440.3,758.5" class="y"/><path d="M1268.1,733.2L1204.4,688.5" class="b"/><path d="M1380.5,759.3L1446.4,765.6" class="b"/><path d="M1432.3,829.5L1380.5,759.3" class="b"/><path d="M1320.9,699.9L1332.8,728.2" class="b"/><path d="M1432.3,829.5L1496.7,845.6" class="b"/><polygon fill="#f5be0b" points="1446.4,765.6 1448.4,765.6 1450.4,766.4 1450.4,772 1446.4,765.6"/><polygon fill="#e07b63" points="1450.4,766.4 1453.2,768 1456,770.1 1458.7,772.5 1461.5,775.2 1461.5,789.6 1450.4,772"/><polygon fill="#d9640a" points="1461.5,775.2 1464.6,778.9 1467.8,783 1470.9,787.6 1474.1,792.8 1474.1,809.6 1461.5,789.6"/><polygon fill="#c8320a" points="1474.1,792.8 1477,798 1479.9,803.6 1482.7,809.7 1485.6,816.2 1485.6,828 1474.1,809.6"/><polygon fill="#e8900a" points="1485.6,816.2 1489.2,824.6 1492.7,833.6 1492.7,839.2 1485.6,828"/><polygon fill="#f5be0b" points="1492.7,833.6 1494.7,839.2 1496.7,845.6 1496.7,845.6 1492.7,839.2"/><path d="M1446.4,765.6L1496.7,845.6" class="b"/><path d="M1446.4,765.6L1451.4,773.6" class="y"/><path d="M1496.7,845.6L1491.7,837.6" class="y"/><path d="M1432.3,829.5L1446.4,765.6" class="b"/><path d="M1268.1,733.2L1265.6,671.4" class="b"/><path d="M1204.4,688.5L1212.8,704.7" class="b"/><polygon fill="#f5be0b" points="1332.8,728.2 1334.7,723.3 1336.5,719.5 1336.5,725.9 1332.8,728.2"/><polygon fill="#e8900a" points="1336.5,719.5 1340,713 1343.4,707.4 1343.4,721.5 1336.5,725.9"/><polygon fill="#d9640a" points="1343.4,707.4 1346.2,703.2 1349,699.5 1351.9,696.2 1351.9,716.2 1343.4,721.5"/><polygon fill="#c8320a" points="1351.9,696.2 1355.5,692.6 1359.2,689.9 1362.9,687.9 1366.6,686.9 1366.6,706.9 1351.9,716.2"/><polygon fill="#d9640a" points="1366.6,686.9 1369.5,686.6 1372.3,686.8 1375.1,687.4 1375.1,701.6 1366.6,706.9"/><polygon fill="#e8900a" points="1375.1,687.4 1378.5,688.7 1381.9,690.8 1381.9,697.2 1375.1,701.6"/><polygon fill="#f5be0b" points="1381.9,690.8 1383.8,692.4 1385.6,694.9 1385.6,694.9 1381.9,697.2"/><path d="M1332.8,728.2L1385.6,694.9" class="b"/><path d="M1332.8,728.2L1338.1,724.9" class="y"/><path d="M1385.6,694.9L1380.4,698.2" class="y"/><polygon fill="#f5be0b" points="1265.6,671.4 1267.9,668.9 1270.3,667.7 1270.3,675.4 1265.6,671.4"/><polygon fill="#d04d63" points="1270.3,667.7 1274.1,666.4 1278,665.8 1281.9,665.8 1285.7,666.4 1285.7,688.4 1270.3,675.4"/><polygon fill="#b30303" points="1285.7,666.4 1290.4,668 1295,670.5 1299.6,674 1304.2,678.5 1308.8,683.9 1313.4,690.3 1318,697.5 1318,715.7 1285.7,688.4"/><polygon fill="#d04d63" points="1318,697.5 1321.4,703.3 1324.8,709.7 1328.1,716.5 1328.1,724.2 1318,715.7"/><polygon fill="#f5be0b" points="1328.1,716.5 1330.5,721.8 1332.8,728.2 1332.8,728.2 1328.1,724.2"/><path d="M1265.6,671.4L1332.8,728.2" class="b"/><path d="M1265.6,671.4L1272.3,677.1" class="y"/><path d="M1332.8,728.2L1326.1,722.5" class="y"/><polygon fill="#f5be0b" points="1143.2,665.4 1146.7,664.9 1150.2,665 1150.2,669.3 1143.2,665.4"/><polygon fill="#e8900a" points="1150.2,665 1154.5,665.6 1158.9,666.5 1163.2,667.6 1167.6,669.1 1167.6,679.2 1150.2,669.3"/><polygon fill="#e07b63" points="1167.6,669.1 1172.2,671.1 1176.8,673.4 1181.5,676.1 1186.1,679.2 1190.7,682.7 1195.4,686.5 1195.4,694.9 1167.6,679.2"/><polygon fill="#eda55d" points="1195.4,686.5 1198.9,689.7 1202.3,693 1205.8,696.5 1205.8,700.8 1195.4,694.9"/><polygon fill="#f5be0b" points="1205.8,696.5 1209.3,700.2 1212.8,704.7 1212.8,704.7 1205.8,700.8"/><path d="M1143.2,665.4L1212.8,704.7" class="b"/><path d="M1143.2,665.4L1150.2,669.3" class="y"/><path d="M1212.8,704.7L1205.8,700.8" class="y"/><path d="M1380.5,759.3L1332.8,728.2" class="b"/><polygon fill="#f5be0b" points="1212.8,704.7 1214.6,699.8 1216.5,695.9 1216.5,702.4 1212.8,704.7"/><polygon fill="#e8900a" points="1216.5,695.9 1219.9,689.4 1223.3,683.7 1223.3,698 1216.5,702.4"/><polygon fill="#d9640a" points="1223.3,683.7 1226.1,679.5 1228.9,675.7 1231.8,672.4 1231.8,692.7 1223.3,698"/><polygon fill="#c8320a" points="1231.8,672.4 1235.5,668.8 1239.2,666.1 1242.9,664.1 1246.5,663.1 1246.5,683.4 1231.8,692.7"/><polygon fill="#d9640a" points="1246.5,663.1 1249.4,662.8 1252.2,663 1255,663.7 1255,678.1 1246.5,683.4"/><polygon fill="#e8900a" points="1255,663.7 1258.4,665.1 1261.9,667.2 1261.9,673.7 1255,678.1"/><polygon fill="#f5be0b" points="1261.9,667.2 1263.7,668.8 1265.6,671.4 1265.6,671.4 1261.9,673.7"/><path d="M1212.8,704.7L1265.6,671.4" class="b"/><path d="M1212.8,704.7L1218,701.4" class="y"/><path d="M1265.6,671.4L1260.3,674.7" class="y"/><path d="M1327.7,792.6L1380.5,759.3" class="b"/><path d="M1380.5,759.3L1393.6,798.9" class="b"/><path d="M1268.1,733.2L1332.8,728.2" class="b"/><polygon fill="#f5be0b" points="1443.9,878.9 1446.6,875 1449.2,871.7 1449.2,875.6 1443.9,878.9"/><polygon fill="#eda55d" points="1449.2,871.7 1452.7,867.6 1456.2,863.9 1459.8,860.5 1459.8,868.9 1449.2,875.6"/><polygon fill="#e8900a" points="1459.8,860.5 1463.3,857.4 1466.8,854.7 1470.3,852.3 1473.8,850.2 1477.4,848.5 1480.9,847.2 1480.9,855.6 1459.8,868.9"/><polygon fill="#eda55d" points="1480.9,847.2 1484.4,846.1 1487.9,845.4 1491.4,845 1491.4,848.9 1480.9,855.6"/><polygon fill="#f5be0b" points="1491.4,845 1494.1,845 1496.7,845.6 1496.7,845.6 1491.4,848.9"/><path d="M1443.9,878.9L1496.7,845.6" class="b"/><path d="M1443.9,878.9L1449.2,875.6" class="y"/><path d="M1496.7,845.6L1491.4,848.9" class="y"/><path d="M1432.3,829.5L1443.9,878.9" class="b"/><path d="M1432.3,829.5L1393.6,798.9" class="b"/><path d="M1379.5,862.8L1432.3,829.5" class="b"/><polygon fill="#f5be0b" points="1393.6,798.9 1395.4,794 1397.3,790.1 1397.3,796.6 1393.6,798.9"/><polygon fill="#e8900a" points="1397.3,790.1 1400.7,783.7 1404.2,778 1404.2,792.2 1397.3,796.6"/><polygon fill="#d9640a" points="1404.2,778 1407,773.9 1409.8,770.1 1412.6,766.9 1412.6,786.9 1404.2,792.2"/><polygon fill="#c8320a" points="1412.6,766.9 1416.3,763.3 1420,760.5 1423.7,758.6 1427.4,757.5 1427.4,777.6 1412.6,786.9"/><polygon fill="#d9640a" points="1427.4,757.5 1430.2,757.3 1433,757.4 1435.8,758.1 1435.8,772.2 1427.4,777.6"/><polygon fill="#e8900a" points="1435.8,758.1 1439.3,759.4 1442.7,761.5 1442.7,767.9 1435.8,772.2"/><polygon fill="#f5be0b" points="1442.7,761.5 1444.5,763 1446.4,765.6 1446.4,765.6 1442.7,767.9"/><path d="M1393.6,798.9L1446.4,765.6" class="b"/><path d="M1393.6,798.9L1398.9,795.6" class="y"/><path d="M1446.4,765.6L1441.1,768.9" class="y"/><path d="M1268.1,733.2L1212.8,704.7" class="b"/><path d="M1327.7,792.6L1268.1,733.2" class="b"/><path d="M1327.7,792.6L1332.8,728.2" class="b"/><polygon fill="#f5be0b" points="1332.8,728.2 1335,727.1 1337.1,726.9 1337.1,733.2 1332.8,728.2"/><polygon fill="#e8900a" points="1337.1,726.9 1341,727.4 1345,728.6 1345,742.3 1337.1,733.2"/><polygon fill="#d9640a" points="1345,728.6 1348.2,730.1 1351.5,731.9 1354.7,734.3 1354.7,753.7 1345,742.3"/><polygon fill="#c8320a" points="1354.7,734.3 1359,738 1363.2,742.5 1367.5,747.9 1371.7,754.1 1371.7,773.4 1354.7,753.7"/><polygon fill="#d9640a" points="1371.7,754.1 1375,759.3 1378.2,764.9 1381.4,771 1381.4,784.8 1371.7,773.4"/><polygon fill="#e8900a" points="1381.4,771 1385.4,779 1389.3,787.7 1389.3,793.9 1381.4,784.8"/><polygon fill="#f5be0b" points="1389.3,787.7 1391.5,792.8 1393.6,798.9 1393.6,798.9 1389.3,793.9"/><path d="M1332.8,728.2L1393.6,798.9" class="b"/><path d="M1332.8,728.2L1338.9,735.3" class="y"/><path d="M1393.6,798.9L1387.5,791.8" class="y"/><path d="M1327.7,792.6L1393.6,798.9" class="b"/><path d="M1379.5,862.8L1327.7,792.6" class="b"/><path d="M1268.1,733.2L1280,761.5" class="b"/><path d="M1379.5,862.8L1443.9,878.9" class="b"/><polygon fill="#f5be0b" points="1393.6,798.9 1395.6,798.9 1397.6,799.7 1397.6,805.3 1393.6,798.9"/><polygon fill="#e07b63" points="1397.6,799.7 1400.4,801.3 1403.2,803.4 1405.9,805.8 1408.7,808.5 1408.7,822.9 1397.6,805.3"/><polygon fill="#d9640a" points="1408.7,808.5 1411.8,812.2 1415,816.3 1418.1,820.9 1421.3,826.1 1421.3,842.9 1408.7,822.9"/><polygon fill="#c8320a" points="1421.3,826.1 1424.2,831.3 1427.1,836.9 1429.9,843 1432.8,849.5 1432.8,861.3 1421.3,842.9"/><polygon fill="#e8900a" points="1432.8,849.5 1436.4,857.9 1439.9,866.9 1439.9,872.5 1432.8,861.3"/><polygon fill="#f5be0b" points="1439.9,866.9 1441.9,872.5 1443.9,878.9 1443.9,878.9 1439.9,872.5"/><path d="M1393.6,798.9L1443.9,878.9" class="b"/><path d="M1393.6,798.9L1398.6,806.9" class="y"/><path d="M1443.9,878.9L1438.9,870.9" class="y"/><path d="M1379.5,862.8L1393.6,798.9" class="b"/><polygon fill="#f5be0b" points="1280,761.5 1281.9,756.6 1283.7,752.7 1283.7,759.2 1280,761.5"/><polygon fill="#e8900a" points="1283.7,752.7 1287.2,746.2 1290.6,740.5 1290.6,754.8 1283.7,759.2"/><polygon fill="#d9640a" points="1290.6,740.5 1293.4,736.3 1296.2,732.5 1299.1,729.2 1299.1,749.5 1290.6,754.8"/><polygon fill="#c8320a" points="1299.1,729.2 1302.7,725.6 1306.4,722.9 1310.1,721 1313.8,719.9 1313.8,740.2 1299.1,749.5"/><polygon fill="#d9640a" points="1313.8,719.9 1316.7,719.6 1319.5,719.8 1322.3,720.5 1322.3,734.9 1313.8,740.2"/><polygon fill="#e8900a" points="1322.3,720.5 1325.7,721.9 1329.1,724 1329.1,730.5 1322.3,734.9"/><polygon fill="#f5be0b" points="1329.1,724 1331,725.6 1332.8,728.2 1332.8,728.2 1329.1,730.5"/><path d="M1280,761.5L1332.8,728.2" class="b"/><path d="M1280,761.5L1285.3,758.2" class="y"/><path d="M1332.8,728.2L1327.6,731.5" class="y"/><polygon fill="#f5be0b" points="1212.8,704.7 1216.1,705 1219.5,706.1 1219.5,710.4 1212.8,704.7"/><polygon fill="#e8900a" points="1219.5,706.1 1223.7,707.7 1227.9,709.7 1232.1,712 1236.3,714.6 1236.3,724.6 1219.5,710.4"/><polygon fill="#e07b63" points="1236.3,714.6 1240.8,717.7 1245.3,721.2 1249.8,725.1 1254.3,729.3 1258.7,734 1263.2,739 1263.2,747.3 1236.3,724.6"/><polygon fill="#eda55d" points="1263.2,739 1266.6,743 1270,747.1 1273.3,751.5 1273.3,755.8 1263.2,747.3"/><polygon fill="#f5be0b" points="1273.3,751.5 1276.7,756.2 1280,761.5 1280,761.5 1273.3,755.8"/><path d="M1212.8,704.7L1280,761.5" class="b"/><path d="M1212.8,704.7L1219.5,710.4" class="y"/><path d="M1280,761.5L1273.3,755.8" class="y"/><path d="M1327.7,792.6L1280,761.5" class="b"/><path d="M1327.7,792.6L1340.8,832.2" class="b"/><polygon fill="#f5be0b" points="1391.1,912.2 1393.8,908.3 1396.4,905 1396.4,908.9 1391.1,912.2"/><polygon fill="#eda55d" points="1396.4,905 1399.9,900.9 1403.4,897.2 1407,893.8 1407,902.2 1396.4,908.9"/><polygon fill="#e8900a" points="1407,893.8 1410.5,890.7 1414,888 1417.5,885.6 1421,883.5 1424.6,881.8 1428.1,880.5 1428.1,888.9 1407,902.2"/><polygon fill="#eda55d" points="1428.1,880.5 1431.6,879.4 1435.1,878.7 1438.6,878.3 1438.6,882.2 1428.1,888.9"/><polygon fill="#f5be0b" points="1438.6,878.3 1441.3,878.3 1443.9,878.9 1443.9,878.9 1438.6,882.2"/><path d="M1391.1,912.2L1443.9,878.9" class="b"/><path d="M1391.1,912.2L1396.4,908.9" class="y"/><path d="M1443.9,878.9L1438.6,882.2" class="y"/><path d="M1379.5,862.8L1391.1,912.2" class="b"/><path d="M1379.5,862.8L1340.8,832.2" class="b"/><polygon fill="#f5be0b" points="1340.8,832.2 1342.6,827.3 1344.5,823.4 1344.5,829.9 1340.8,832.2"/><polygon fill="#e8900a" points="1344.5,823.4 1347.9,816.9 1351.4,811.1 1351.4,825.5 1344.5,829.9"/><polygon fill="#d9640a" points="1351.4,811.1 1354.2,806.9 1357,803.2 1359.8,799.9 1359.8,820.2 1351.4,825.5"/><polygon fill="#c8320a" points="1359.8,799.9 1363.5,796.3 1367.2,793.5 1370.9,791.6 1374.6,790.6 1374.6,810.9 1359.8,820.2"/><polygon fill="#d9640a" points="1374.6,790.6 1377.4,790.3 1380.2,790.5 1383,791.2 1383,805.5 1374.6,810.9"/><polygon fill="#e8900a" points="1383,791.2 1386.5,792.6 1389.9,794.7 1389.9,801.2 1383,805.5"/><polygon fill="#f5be0b" points="1389.9,794.7 1391.7,796.3 1393.6,798.9 1393.6,798.9 1389.9,801.2"/><path d="M1340.8,832.2L1393.6,798.9" class="b"/><path d="M1340.8,832.2L1346.1,828.9" class="y"/><path d="M1393.6,798.9L1388.3,802.2" class="y"/><polygon fill="#f5be0b" points="1280,761.5 1283.1,762.5 1286.1,764.3 1286.1,768.6 1280,761.5"/><polygon fill="#e8900a" points="1286.1,764.3 1289.9,766.8 1293.7,769.6 1297.5,772.8 1301.3,776.2 1301.3,786.2 1286.1,768.6"/><polygon fill="#e07b63" points="1301.3,776.2 1305.4,780.3 1309.4,784.7 1313.5,789.5 1317.5,794.7 1321.6,800.3 1325.6,806.2 1325.6,814.5 1301.3,786.2"/><polygon fill="#eda55d" points="1325.6,806.2 1328.6,810.9 1331.7,815.7 1334.7,820.8 1334.7,825.1 1325.6,814.5"/><polygon fill="#f5be0b" points="1334.7,820.8 1337.8,826.2 1340.8,832.2 1340.8,832.2 1334.7,825.1"/><path d="M1280,761.5L1340.8,832.2" class="b"/><path d="M1280,761.5L1286.1,768.6" class="y"/><path d="M1340.8,832.2L1334.7,825.1" class="y"/><polygon fill="#f5be0b" points="1340.8,832.2 1343.3,833.7 1345.8,835.9 1345.8,840.2 1340.8,832.2"/><polygon fill="#e8900a" points="1345.8,835.9 1349,839 1352.1,842.4 1355.3,846.1 1358.4,850.2 1358.4,860.2 1345.8,840.2"/><polygon fill="#e07b63" points="1358.4,850.2 1361.8,854.8 1365.1,859.9 1368.5,865.3 1371.8,871.1 1375.2,877.3 1378.5,883.9 1378.5,892.2 1358.4,860.2"/><polygon fill="#eda55d" points="1378.5,883.9 1381,889 1383.6,894.4 1386.1,899.9 1386.1,904.2 1378.5,892.2"/><polygon fill="#f5be0b" points="1386.1,899.9 1388.6,905.7 1391.1,912.2 1391.1,912.2 1386.1,904.2"/><path d="M1340.8,832.2L1391.1,912.2" class="b"/><path d="M1340.8,832.2L1345.8,840.2" class="y"/><path d="M1391.1,912.2L1386.1,904.2" class="y"/><g fill="#000"><circle cx="1391.1" cy="912.2" r="2.3"/><circle cx="1443.9" cy="878.9" r="2.3"/><circle cx="1496.7" cy="845.6" r="2.3"/><circle cx="1549.5" cy="812.3" r="2.3"/><circle cx="1602.3" cy="779" r="2.3"/><circle cx="1655.1" cy="745.7" r="2.3"/><circle cx="1707.9" cy="712.4" r="2.3"/><circle cx="1760.7" cy="679.1" r="2.3"/><circle cx="1813.5" cy="645.8" r="2.3"/><circle cx="1866.3" cy="612.5" r="2.3"/><circle cx="1919.1" cy="579.2" r="2.3"/><circle cx="1340.8" cy="832.2" r="2.3"/><circle cx="1280" cy="761.5" r="2.3"/><circle cx="1212.8" cy="704.7" r="2.3"/><circle cx="1143.2" cy="665.4" r="2.3"/></g><rect x="1062" y="214" width="90" height="433" fill="#fff"/><rect x="1066" y="261.5" width="11" height="29" fill="#f8d866"/><rect x="1066" y="298.6" width="11" height="29" fill="#f5be0b"/><rect x="1066" y="335.8" width="11" height="29" fill="#eda55d"/><rect x="1066" y="372.9" width="11" height="29" fill="#e8900a"/><rect x="1066" y="410.1" width="11" height="29" fill="#e07b63"/><rect x="1066" y="447.2" width="11" height="29" fill="#d9640a"/><rect x="1066" y="484.4" width="11" height="29" fill="#d04d63"/><rect x="1066" y="521.5" width="11" height="29" fill="#c8320a"/><rect x="1066" y="558.7" width="11" height="29" fill="#c01c5d"/><rect x="1066" y="595.8" width="11" height="29" fill="#b30303"/><text x="1078" y="260" font-size="15" class="lt">0</text><text x="1078" y="297.1" font-size="16.5" class="lt">0.084</text><text x="1078" y="334.2" font-size="16.5" class="lt">0.167</text><text x="1078" y="371.3" font-size="16.5" class="lt">0.251</text><text x="1078" y="408.4" font-size="16.5" class="lt">0.334</text><text x="1078" y="445.5" font-size="16.5" class="lt">0.418</text><text x="1078" y="482.6" font-size="16.5" class="lt">0.502</text><text x="1078" y="519.7" font-size="16.5" class="lt">0.585</text><text x="1078" y="556.8" font-size="16.5" class="lt">0.669</text><text x="1078" y="593.9" font-size="16.5" class="lt">0.752</text><text x="1078" y="631" font-size="16.5" class="lt">0.836</text><text x="1078" y="245" font-size="25" class="lt">Нагрузки, тс/м</text></g></svg>
<style>
.sbt{position:absolute;top:1064px;font-size:11.7px;line-height:14px;white-space:nowrap}
.cell{position:absolute;top:1063px;height:17px;background:#fbfbe9;border-left:2px solid #6c6c6c}
.pbtn{position:absolute;top:1037px;width:23px;height:23px;background:#b7bdd8;border:1px solid #16246a}
.combo{position:absolute;top:1040px;height:17px;background:#fff;font-size:11.7px;line-height:16px;padding-left:4px;white-space:nowrap}
.cbtn{position:absolute;top:1040px;width:14px;height:17px;background:#dfe1e5;border-left:1px solid #c0c4ca}
.sep{position:absolute;top:1041px;width:1px;height:16px;background:#eceef1}
</style>
<div class="t" style="left:33px;top:1019px;font-size:11.6px;color:#46536b">Служебная информация</div>
<div class="abs" style="left:0;top:1061px;width:1920px;height:1px;background:#a9adb4"></div>
<div class="sbt" style="left:4px">Укажите объект(ы) для редактирования</div>
<div class="abs" style="left:1419px;top:1063px;width:2px;height:17px;background:#6c6c6c"></div><div class="sbt" style="left:1426px;font-size:11.5px">NUM</div>
<div class="abs" style="left:1453px;top:1063px;width:2px;height:17px;background:#6c6c6c"></div><div class="sbt" style="left:1458px;color:#8a8f9a;font-size:11px;letter-spacing:0">ОРТО</div>
<div class="cell" style="left:1489px;width:86px"></div><div class="sbt" style="left:1494px;color:#0a9a0a;font-size:11px">3737.80</div>
<div class="cell" style="left:1575px;width:86px"></div><div class="sbt" style="left:1580px;color:#1010d0;font-size:11px">-9424.57</div>
<div class="cell" style="left:1662px;width:86px"></div><div class="sbt" style="left:1667px;color:#c01010;font-size:11px">3279.90</div>
<div class="cell" style="left:1748px;width:86px"></div><div class="sbt" style="left:1753px;color:#1a9ab8;font-size:11px">10656.05</div>
<div class="cell" style="left:1833px;width:87px"></div><div class="sbt" style="left:1838px;color:#111;font-size:11px">1</div>
<div class="pbtn" style="left:11px"></div>
<div class="pbtn" style="left:33px"></div>
<div class="pbtn" style="left:55px"></div>
<div class="pbtn" style="left:77px"></div>
<div class="pbtn" style="left:99px"></div>
<div class="pbtn" style="left:127px"></div>
<div class="pbtn" style="left:579px"></div>
<div class="pbtn" style="left:1165px"></div>
<div class="abs" style="left:676px;top:1040px;width:19px;height:19px;background:#bcdcf8;border:1px solid #6aa8e8"></div>
<div class="sep" style="left:124px"></div>
<div class="sep" style="left:175px"></div>
<div class="sep" style="left:286px"></div>
<div class="sep" style="left:338px"></div>
<div class="sep" style="left:367px"></div>
<div class="sep" style="left:574px"></div>
<div class="sep" style="left:650px"></div>
<div class="sep" style="left:939px"></div>
<div class="sep" style="left:1192px"></div>
<div class="sep" style="left:1243px"></div>
<div class="sep" style="left:1340px"></div>
<div class="abs" style="left:205px;top:1041px;width:74px;height:15px;background:#f0f0f0"></div>
<div class="combo" style="left:765px;width:145px">1-й этаж</div><div class="cbtn" style="left:896px"></div><div class="arr" style="left:899.5px;top:1047px;border-top-color:#7a7f88"></div>
<div class="combo" style="left:967px;width:195px">5.СНЕГ</div><div class="cbtn" style="left:1148px"></div><div class="arr" style="left:1151.5px;top:1047px;border-top-color:#7a7f88"></div>
<svg class="abs" style="left:0;top:0" width="1920" height="1080" viewBox="0 0 1920 1080" pointer-events="none"><rect x="8.5" y="1019.5" width="11" height="13" fill="#fff" stroke="#2b2b45"/><path d="M10.5,1022.5h7" stroke="#2b2b45" stroke-width="0.8"/><path d="M10.5,1024.5h7" stroke="#2b2b45" stroke-width="0.8"/><path d="M10.5,1026.5h7" stroke="#2b2b45" stroke-width="0.8"/><path d="M10.5,1028.5h7" stroke="#2b2b45" stroke-width="0.8"/><path d="M10.5,1030.5h7" stroke="#2b2b45" stroke-width="0.8"/><rect x="4" y="1043" width="1.5" height="1.5" fill="#eef0f3"/><rect x="4" y="1046" width="1.5" height="1.5" fill="#eef0f3"/><rect x="4" y="1049" width="1.5" height="1.5" fill="#eef0f3"/><rect x="4" y="1052" width="1.5" height="1.5" fill="#eef0f3"/><rect x="4" y="1055" width="1.5" height="1.5" fill="#eef0f3"/><rect x="433" y="1043" width="1.5" height="1.5" fill="#eef0f3"/><rect x="433" y="1046" width="1.5" height="1.5" fill="#eef0f3"/><rect x="433" y="1049" width="1.5" height="1.5" fill="#eef0f3"/><rect x="433" y="1052" width="1.5" height="1.5" fill="#eef0f3"/><rect x="433" y="1055" width="1.5" height="1.5" fill="#eef0f3"/><rect x="1287" y="1043" width="1.5" height="1.5" fill="#eef0f3"/><rect x="1287" y="1046" width="1.5" height="1.5" fill="#eef0f3"/><rect x="1287" y="1049" width="1.5" height="1.5" fill="#eef0f3"/><rect x="1287" y="1052" width="1.5" height="1.5" fill="#eef0f3"/><rect x="1287" y="1055" width="1.5" height="1.5" fill="#eef0f3"/><path d="M14,1048.5h17M14,1054.5h17M19.5,1040v18M25.5,1040v18" stroke="#9aa0b8" stroke-width="1"/><path d="M19.5,1041.8L20.46,1044.04L22.7,1045L20.46,1045.96L19.5,1048.2L18.54,1045.96L16.3,1045L18.54,1044.04z" fill="#fff" stroke="#1a6cf0" stroke-width="0.9"/><path d="M36,1056l17,-10" stroke="#2b2b45" stroke-width="1" stroke-dasharray="2,1.3"/><path d="M41,1040.8L41.96,1043.04L44.2,1044L41.96,1044.96L41,1047.2L40.04,1044.96L37.8,1044L40.04,1043.04z" fill="#fff" stroke="#1a6cf0" stroke-width="0.9"/><path d="M58.5,1041v16h17" stroke="#2b2b45" stroke-width="1" stroke-dasharray="1.5,1.5" fill="none"/><path d="M59,1056.500l15,-14" stroke="#2b2b45" stroke-width="1"/><path d="M65,1040.8L65.96,1043.04L68.2,1044L65.96,1044.96L65,1047.2L64.04,1044.96L61.8,1044L64.04,1043.04z" fill="#fff" stroke="#1a6cf0" stroke-width="0.9"/><path d="M84,1040.8L84.96,1043.04L87.2,1044L84.96,1044.96L84,1047.2L83.04,1044.96L80.8,1044L83.04,1043.04z" fill="#fff" stroke="#1a6cf0" stroke-width="0.9"/><circle cx="85" cy="1054" r="2.3" fill="#fff" stroke="#1a6cf0"/><circle cx="93.5" cy="1049" r="1.3" fill="#fff" stroke="#2b2b45"/><path d="M103,1056l16,-12" stroke="#1a6cf0" stroke-width="1"/><circle cx="107" cy="1053" r="1.3" fill="#fff" stroke="#1a6cf0" stroke-width="0.8"/><circle cx="111" cy="1050" r="1.3" fill="#fff" stroke="#1a6cf0" stroke-width="0.8"/><circle cx="115" cy="1047" r="1.3" fill="#fff" stroke="#1a6cf0" stroke-width="0.8"/><rect x="130.5" y="1044.5" width="15" height="10" fill="#e8eaf2" stroke="#2b2b45"/><path d="M135,1058.500h7M138.500,1055v3" stroke="#2b2b45"/><path d="M136,1052v-5a3.5,3.5 0 0 1 7,0v5" fill="none" stroke="#3a2a5a" stroke-width="2.4"/><path d="M134.800,1052h2.400M141.800,1052h2.400" stroke="#d03030" stroke-width="2"/><path d="M152.500,1048.500l3,-2.500h11l-3,2.500zM152.500,1048.500h11v7h-11zM163.500,1048.500l3,-2.500v6.500l-3,3z" fill="#fff" stroke="#2b2b45" stroke-width="0.9"/><rect x="154.500" y="1050.500" width="7" height="3.500" fill="#6aa8e8" stroke="#1a6cf0" stroke-width="0.7"/><path d="M162,1046v-3a2.500,2.500 0 0 1 5,0v2" fill="none" stroke="#a06a30" stroke-width="1.300"/><path d="M191,1040.3L191.96,1042.54L194.2,1043.5L191.96,1044.46L191,1046.7L190.04,1044.46L187.8,1043.5L190.04,1042.54z" fill="#fff" stroke="#1a6cf0" stroke-width="0.9"/><path d="M191,1047v5" stroke="#1a6cf0" stroke-width="0.9"/><path d="M183.500,1056.500l5,-4.500h9l-3,4.500z" fill="#fff" stroke="#2b2b45" stroke-width="1"/><path d="M293.500,1056.500l13,-14" stroke="#2b2b45" stroke-width="1.200"/><path d="M297,1048.500l3,-1.500l3,3l-3,1.500z" fill="#1a6cf0"/><circle cx="323.500" cy="1049" r="6" fill="#fff" stroke="#2b2b45" stroke-width="1.100"/><path d="M323.500,1047l1.500,2l-1.500,2l-1.500,-2z" fill="#1a6cf0"/><path d="M346.500,1042.500v12.500h12M346.500,1048.500h6v6.500" fill="none" stroke="#2b2b45" stroke-width="1.200"/><path d="M378.5,1056.500v-11.500M378.5,1056.500h11" stroke="#2b2b45" stroke-width="1.100" fill="none"/><path d="M376,1047.500l2.500,-3.500l2.500,3.500" fill="none" stroke="#2b2b45" stroke-width="1"/><path d="M381,1043.500a5,5 0 0 0 -1,7" fill="none" stroke="#2b2b45" stroke-width="0.9"/><text x="383" y="1053.500" font-size="9.500" font-weight="bold" fill="#1a6cf0" font-family="Liberation Sans,sans-serif">X</text><path d="M400.5,1056.500v-11.500M400.5,1056.500h11" stroke="#2b2b45" stroke-width="1.100" fill="none"/><path d="M398,1047.500l2.500,-3.500l2.500,3.500" fill="none" stroke="#2b2b45" stroke-width="1"/><path d="M403,1043.500a5,5 0 0 0 -1,7" fill="none" stroke="#2b2b45" stroke-width="0.9"/><text x="405" y="1053.500" font-size="9.500" font-weight="bold" fill="#1a6cf0" font-family="Liberation Sans,sans-serif">Y</text><path d="M420,1052.500h6" stroke="#6a6f78" stroke-width="1"/><polygon points="420,1054.500 426,1054.500 423,1057.500" fill="#6a6f78"/><path d="M1274,1052.500h6" stroke="#6a6f78" stroke-width="1"/><polygon points="1274,1054.500 1280,1054.500 1277,1057.500" fill="#6a6f78"/><path d="M443.5,1045.5l3,-3h10v10l-3,3h-10z" fill="none" stroke="#2b2b45" stroke-width="1"/><rect x="443.5" y="1045.5" width="10" height="10" fill="none" stroke="#2b2b45" stroke-width="1"/><path d="M453.5,1045.5l3,-3" stroke="#2b2b45"/><path d="M446.500,1042.500v10h10M446.500,1052.500l-3,3" stroke="#2b2b45" stroke-width="0.7" fill="none"/><path d="M465.5,1045.5l3,-3h10v10l-3,3h-10z" fill="#fff" stroke="#2b2b45" stroke-width="1"/><rect x="465.5" y="1045.5" width="10" height="10" fill="#fff" stroke="#2b2b45" stroke-width="1"/><path d="M475.5,1045.5l3,-3" stroke="#2b2b45"/><path d="M487.5,1045.5l3,-3h10v10l-3,3h-10z" fill="#55556f" stroke="#2b2b45" stroke-width="1"/><rect x="487.5" y="1045.5" width="10" height="10" fill="#8f8fae" stroke="#2b2b45" stroke-width="1"/><path d="M497.5,1045.5l3,-3" stroke="#2b2b45"/><path d="M509.5,1045.5l3,-3h10v10l-3,3h-10z" fill="#c9c9de" stroke="#2b2b45" stroke-width="1"/><rect x="509.5" y="1045.5" width="10" height="10" fill="#fff" stroke="#2b2b45" stroke-width="1"/><path d="M519.5,1045.5l3,-3" stroke="#2b2b45"/><rect x="512" y="1048" width="6" height="6" fill="#6a6fb0"/><path d="M512,1048h3v3h-3zM515,1051h3v3h-3z" fill="#c03030"/><path d="M531.5,1044.5l3,-3h10v10l-3,3h-10z" fill="#fff" stroke="#2b2b45" stroke-width="1"/><rect x="531.5" y="1044.5" width="10" height="10" fill="#fff" stroke="#2b2b45" stroke-width="1"/><path d="M541.5,1044.5l3,-3" stroke="#2b2b45"/><circle cx="543.500" cy="1053.500" r="3.300" fill="#3a3a4e"/><circle cx="543.500" cy="1053.500" r="1.300" fill="#fff"/><path d="M553.500,1045v-3h3M564.500,1042h3v3M553.500,1053v3h3M564.500,1056h3v-3" stroke="#1a6cf0" fill="none" stroke-width="1.200"/><path d="M556.500,1046.500l2,-2h6v6l-2,2h-6z" fill="#fff" stroke="#2b2b45" stroke-width="0.9"/><rect x="556.500" y="1046.500" width="6" height="6" fill="#8f8fae" stroke="#2b2b45" stroke-width="0.9"/><path d="M582.500,1045.500l3,-3h9v11l-3,3h-9z" fill="#e8eaf2" stroke="#2b2b45"/><path d="M582.500,1045.500h9v11M591.500,1045.500l3,-3" stroke="#2b2b45" fill="none"/><path d="M587.500,1042v16" stroke="#1a6cf0" stroke-width="1.300"/><circle cx="587.500" cy="1049" r="1.500" fill="#fff" stroke="#1a6cf0" stroke-width="0.8"/><path d="M604.500,1045.500l3,-3h9v11l-3,3h-9z" fill="#fff" stroke="#2b2b45"/><path d="M604.500,1045.500h9v11M613.500,1045.500l3,-3" stroke="#2b2b45" fill="none"/><rect x="609" y="1043" width="4" height="14" fill="#50b060" stroke="#208030" stroke-width="0.8"/><path d="M627.500,1046.500l3,-3h10v9l-3,3h-10z" fill="#fff" stroke="#2b2b45"/><rect x="627.500" y="1046.500" width="10" height="9" fill="#fff" stroke="#2b2b45"/><path d="M629,1043v4" stroke="#1a6cf0" stroke-width="1"/><path d="M631,1043v4" stroke="#1a6cf0" stroke-width="1"/><path d="M633,1043v4" stroke="#1a6cf0" stroke-width="1"/><path d="M635,1043v4" stroke="#1a6cf0" stroke-width="1"/><path d="M637,1043v4" stroke="#1a6cf0" stroke-width="1"/><path d="M639,1043v4" stroke="#1a6cf0" stroke-width="1"/><path d="M629,1049h8" stroke="#1a6cf0" stroke-width="0.8"/><path d="M629,1051h8" stroke="#1a6cf0" stroke-width="0.8"/><path d="M629,1053h8" stroke="#1a6cf0" stroke-width="0.8"/><path d="M661,1054.500v-2.500q-3,-2 -3,-5a5,5 0 0 1 10,0q0,3 -3,5v2.500z" fill="#e6e8ec" stroke="#a0a6b2" stroke-width="1"/><path d="M661.5,1056.500h3" stroke="#a0a6b2" stroke-width="1.200"/><path d="M683.5,1054.500v-2.500q-3,-2 -3,-5a5,5 0 0 1 10,0q0,3 -3,5v2.500z" fill="#f0e8a0" stroke="#a0a6b2" stroke-width="1"/><path d="M684.0,1056.500h3" stroke="#a0a6b2" stroke-width="1.200"/><path d="M705,1054.500v-2.500q-3,-2 -3,-5a5,5 0 0 1 10,0q0,3 -3,5v2.500z" fill="#ffe838" stroke="#3a3a4e" stroke-width="1"/><path d="M705.5,1056.500h3" stroke="#3a3a4e" stroke-width="1.200"/><rect x="723.500" y="1046.500" width="6" height="9" fill="#fff" stroke="#2b2b45" stroke-width="0.9"/><path d="M723.500,1046.500l2,-2h6v9l-2,2" fill="none" stroke="#2b2b45" stroke-width="0.9"/><circle cx="734.500" cy="1045" r="2.800" fill="#fff" stroke="#2b2b45" stroke-width="0.9"/><path d="M733.500,1048v2h2v-2" stroke="#2b2b45" stroke-width="0.8" fill="none"/><path d="M745.500,1045.0l2,-2h9l-2,2z M745.500,1045.0h9v2.500h-9z" fill="#9cc4fa" stroke="#1a6cf0" stroke-width="0.8"/><path d="M745.500,1048.5l2,-2h9l-2,2z M745.500,1048.5h9v2.500h-9z" fill="#9cc4fa" stroke="#1a6cf0" stroke-width="0.8"/><path d="M745.500,1052.0l2,-2h9l-2,2z M745.500,1052.0h9v2.500h-9z" fill="#9cc4fa" stroke="#1a6cf0" stroke-width="0.8"/><circle cx="757.500" cy="1045" r="2.800" fill="#ffe838" stroke="#2b2b45" stroke-width="0.9"/><path d="M756.500,1048v2h2v-2" stroke="#2b2b45" stroke-width="0.8" fill="none"/><path d="M917.500,1044.5h13l-1,2.200h-11z" fill="#fff" stroke="#2b2b45" stroke-width="1"/><path d="M917.500,1047.7h13l-1,2.200h-11z" fill="#fff" stroke="#2b2b45" stroke-width="1"/><path d="M917.500,1050.9h13l-1,2.200h-11z" fill="#fff" stroke="#2b2b45" stroke-width="1"/><path d="M917.500,1054.1h13l-1,2.200h-11z" fill="#fff" stroke="#2b2b45" stroke-width="1"/><text x="950" y="1056" font-size="11" font-weight="bold" fill="#2b2b45" font-family="Liberation Sans,sans-serif">№</text><path d="M960,1046h-10M950,1046l4,-3.500M950,1046l4,3.500" stroke="#1a6cf0" stroke-width="1.800" fill="none"/><path d="M1170,1041.5h12.0l-4.5,5.0v6.0l-3.0,-1.5v-4.5z" fill="#e8eaf2" stroke="#55596a" stroke-width="0.7"/><path d="M1169.500,1057v-6h13v6" fill="none" stroke="#1a6cf0" stroke-width="1.300"/><polygon points="1167,1054.500 1172,1054.500 1169.500,1058.500" fill="#1a6cf0"/><polygon points="1180,1054.500 1185,1054.500 1182.500,1058.500" fill="#1a6cf0"/><path d="M1198.500,1044l0,11l3,-3l2.500,4.500l1.800,-1l-2.500,-4.500h4z" fill="#1a6cf0" stroke="#0a3aa0" stroke-width="0.6"/><path d="M1204,1041h10.2l-3.8249999999999997,4.25v5.1l-2.55,-1.275v-3.8249999999999997z" fill="#8a8f9c" stroke="#55596a" stroke-width="0.7"/><rect x="1222.500" y="1048.500" width="10" height="8" fill="#fff" stroke="#1a6cf0" stroke-width="0.9"/><rect x="1222.500" y="1048.500" width="10" height="2.500" fill="#1a6cf0"/><path d="M1226,1051v5.500M1229.500,1051v5.500M1222.500,1053.700h10" stroke="#1a6cf0" stroke-width="0.7"/><path d="M1228,1041h10.2l-3.8249999999999997,4.25v5.1l-2.55,-1.275v-3.8249999999999997z" fill="#8a8f9c" stroke="#55596a" stroke-width="0.7"/><path d="M1251,1049.500l7.500,-7l8,7h-2v7h-11v-7z" fill="#fff" stroke="#2b2b45" stroke-width="1"/><rect x="1259" y="1050" width="2.500" height="3.500" fill="#55556f"/><rect x="1262.300" y="1050" width="2" height="3.500" fill="#55556f"/><path d="M1250.500,1052.500l3,3.500l6,-7.500" stroke="#2f9a2b" stroke-width="2.200" fill="none"/><path d="M1302.500,1041.500v14M1295.500,1048.500h14" stroke="#9aa0ac" stroke-width="1.100"/><path d="M1300.500,1043.500l2,-2.500l2,2.500M1300.500,1053.500l2,2.500l2,-2.500M1297.500,1046.500l-2.500,2l2.500,2M1307.500,1046.500l2.500,2l-2.500,2" fill="none" stroke="#9aa0ac"/><circle cx="1302.500" cy="1048.500" r="1.500" fill="#cdd1d6" stroke="#9aa0ac" stroke-width="0.8"/><path d="M1330,1045a6.200,6.200 0 1 0 1.500,5.500" fill="none" stroke="#8a909c" stroke-width="1.500"/><polygon points="1327,1045.500 1332.500,1046 1331.500,1041" fill="#8a909c"/><path d="M1354,1042v13M1347.500,1048.500h13" stroke="#a8c0e0" stroke-width="1" stroke-dasharray="1.500,1"/><path d="M1352,1044l2,-2.500l2,2.500M1352,1053l2,2.500l2,-2.500M1349.500,1046.500l-2.500,2l2.500,2M1358.500,1046.500l2.500,2l-2.500,2" fill="none" stroke="#a8c0e0"/><circle cx="1360" cy="1055.500" r="1.300" fill="none" stroke="#a8c0e0"/><path d="M1371,1056l14,-11" stroke="#a8c0e0" stroke-width="1.200"/><path d="M1371,1044h9" stroke="#a8c0e0" stroke-dasharray="1.500,1"/><circle cx="1372" cy="1044" r="1.300" fill="none" stroke="#a8c0e0"/><path d="M1394,1056l14,-11l-4,-2.500l-10,9z" fill="none" stroke="#a8c0e0" stroke-width="1.100"/><path d="M1393,1041l5,5M1398,1041l-5,5" stroke="#7ab0f0" stroke-width="1"/></svg>

</body></html>
